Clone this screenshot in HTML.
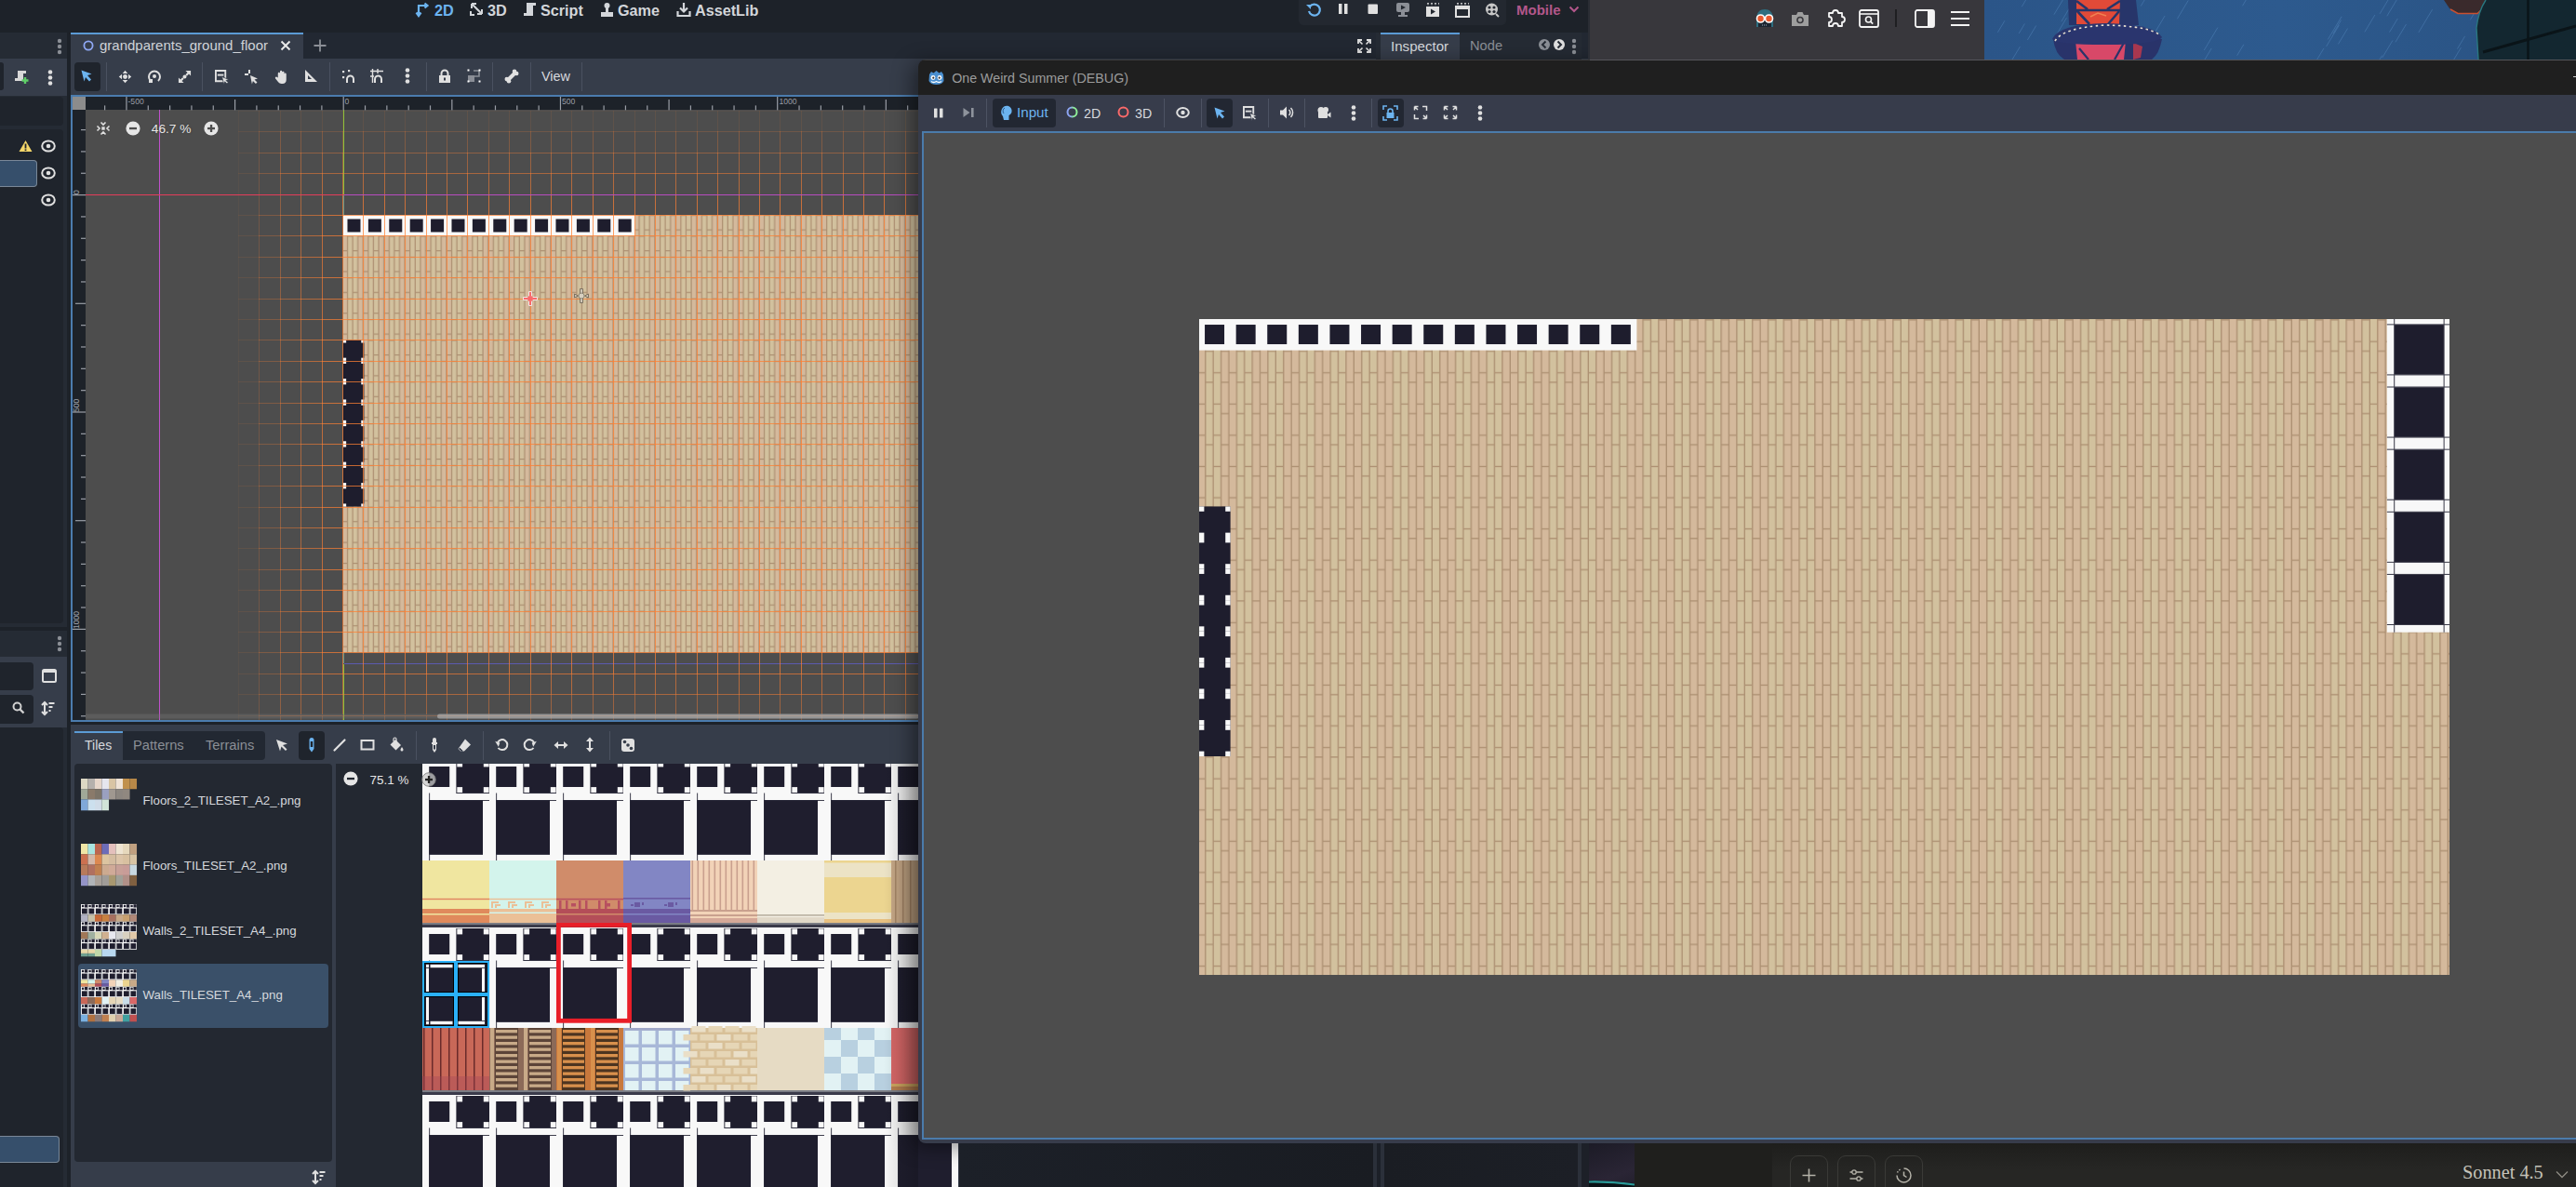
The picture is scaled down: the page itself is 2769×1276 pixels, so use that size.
<!DOCTYPE html>
<html><head><meta charset="utf-8">
<style>
*{margin:0;padding:0;box-sizing:border-box}
html,body{width:2769px;height:1276px;overflow:hidden;background:#1d2229;font-family:"Liberation Sans",sans-serif;color:#d6d9de;position:relative}
.a{position:absolute}
svg.a{display:block;overflow:visible}
</style></head><body>
<div class="a" style="left:0px;top:0px;width:1708px;height:35px;background:#1d2229;"></div>
<svg class="a" style="left:447px;top:2px;" width="16" height="18" viewBox="0 0 16 18"><path d="M3 3v11M0.5 11.5L3 15l2.5-3.5M3 4h9M9.5 1.5L12.5 4 9.5 6.5" stroke="#6cb4f0" stroke-width="2.2" fill="none"/></svg>
<div class="a" style="left:467px;top:2.59px;font-size:16.2px;line-height:1;color:#6cb4f0;font-weight:bold;white-space:nowrap;font-family:'Liberation Sans',sans-serif;">2D</div>
<svg class="a" style="left:505px;top:2px;" width="16" height="18" viewBox="0 0 16 18"><path d="M2 2l11 11M2 2v5M2 2h5M13 13v-5M13 13h-5M2 13l0 0" stroke="#d3d6da" stroke-width="2" fill="none"/><path d="M1 10v4h4" stroke="#d3d6da" stroke-width="2" fill="none"/></svg>
<div class="a" style="left:524px;top:2.59px;font-size:16.2px;line-height:1;color:#d3d6da;font-weight:bold;white-space:nowrap;font-family:'Liberation Sans',sans-serif;">3D</div>
<svg class="a" style="left:562px;top:2px;" width="15" height="18" viewBox="0 0 15 18"><path d="M4 1h10v3h-3v11H1v-3h3z" fill="#d3d6da"/></svg>
<div class="a" style="left:581px;top:2.59px;font-size:16.2px;line-height:1;color:#d3d6da;font-weight:bold;white-space:nowrap;font-family:'Liberation Sans',sans-serif;">Script</div>
<svg class="a" style="left:645px;top:2px;" width="15" height="18" viewBox="0 0 15 18"><circle cx="7.5" cy="4" r="3" fill="#d3d6da"/><rect x="6" y="6" width="3" height="6" fill="#d3d6da"/><rect x="1" y="11" width="13" height="5" fill="#d3d6da"/></svg>
<div class="a" style="left:664px;top:2.59px;font-size:16.2px;line-height:1;color:#d3d6da;font-weight:bold;white-space:nowrap;font-family:'Liberation Sans',sans-serif;">Game</div>
<svg class="a" style="left:727px;top:2px;" width="16" height="18" viewBox="0 0 16 18"><path d="M8 1v9M4 6.5L8 10.5 12 6.5M1.5 10v5h13v-5" stroke="#d3d6da" stroke-width="2.2" fill="none"/></svg>
<div class="a" style="left:747px;top:2.59px;font-size:16.2px;line-height:1;color:#d3d6da;font-weight:bold;white-space:nowrap;font-family:'Liberation Sans',sans-serif;">AssetLib</div>
<div class="a" style="left:1396px;top:0px;width:223px;height:27px;background:#232830;border-radius:0 0 5px 5px"></div>
<svg class="a" style="left:1404px;top:2px;" width="16" height="18" viewBox="0 0 16 18"><path d="M4 5A6 6 0 1 1 3 10" stroke="#6cb4f0" stroke-width="2.2" fill="none"/><path d="M0 3l5 0 0 5z" fill="#6cb4f0"/></svg>
<svg class="a" style="left:1437px;top:3px;" width="14" height="14" viewBox="0 0 14 14"><rect x="2" y="1" width="3.5" height="11" fill="#e0e0e0"/><rect x="8" y="1" width="3.5" height="11" fill="#e0e0e0"/></svg>
<svg class="a" style="left:1469px;top:3px;" width="14" height="14" viewBox="0 0 14 14"><rect x="1.5" y="1.5" width="10.5" height="10.5" fill="#e0e0e0" rx="1"/></svg>
<svg class="a" style="left:1500px;top:2px;" width="16" height="17" viewBox="0 0 16 17"><rect x="1" y="1" width="14" height="10" rx="2" fill="#8b8f96"/><rect x="6" y="11" width="4" height="3" fill="#8b8f96"/><rect x="3" y="14" width="10" height="2" fill="#8b8f96"/><path d="M6 3.5l5 2.5-5 2.5z" fill="#232830"/></svg>
<svg class="a" style="left:1532px;top:2px;" width="16" height="17" viewBox="0 0 16 17"><rect x="1" y="5" width="14" height="11" fill="#e0e0e0"/><path d="M2 1h2l-1 3zM6 1h2l-1 3zM10 1h2l-1 3zM14 1h1v3z" fill="#e0e0e0"/><path d="M6 7.5l5 3-5 3z" fill="#232830"/></svg>
<svg class="a" style="left:1564px;top:2px;" width="16" height="17" viewBox="0 0 16 17"><path d="M1 5h14v11H1z" stroke="#e0e0e0" stroke-width="2" fill="none"/><path d="M2 1h2l-1 3zM6 1h2l-1 3zM10 1h2l-1 3zM14 1h1v3z" fill="#e0e0e0"/><rect x="1" y="5" width="14" height="3" fill="#e0e0e0"/></svg>
<svg class="a" style="left:1596px;top:2px;" width="16" height="18" viewBox="0 0 16 18"><circle cx="7.5" cy="8" r="6.5" fill="#c8c8c8"/><circle cx="5" cy="6" r="1.6" fill="#232830"/><circle cx="10" cy="6" r="1.6" fill="#232830"/><circle cx="5" cy="10.5" r="1.6" fill="#232830"/><circle cx="10" cy="10.5" r="1.6" fill="#232830"/><path d="M12 13l3 3" stroke="#c8c8c8" stroke-width="2"/></svg>
<div class="a" style="left:1630px;top:3.1px;font-size:15px;line-height:1;color:#b3578b;font-weight:bold;white-space:nowrap;font-family:'Liberation Sans',sans-serif;">Mobile</div>
<svg class="a" style="left:1686px;top:5px;" width="12" height="10" viewBox="0 0 12 10"><path d="M1.5 2.5L6 7l4.5-4.5" stroke="#b3578b" stroke-width="2" fill="none"/></svg>
<div class="a" style="left:0px;top:35px;width:72px;height:639px;background:#252b34;"></div>
<div class="a" style="left:0px;top:63px;width:72px;height:40px;background:#363d4a;"></div>
<div class="a" style="left:0px;top:67px;width:4px;height:30px;background:#1f242c;border-radius:0 3px 3px 0"></div>
<svg class="a" style="left:60px;top:40px;" width="8" height="20" viewBox="0 0 8 20"><circle cx="4" cy="4" r="2.2" fill="#8b8f96"/><circle cx="4" cy="10" r="2.2" fill="#8b8f96"/><circle cx="4" cy="16" r="2.2" fill="#8b8f96"/></svg>
<svg class="a" style="left:14px;top:75px;" width="18" height="16" viewBox="0 0 18 16"><path d="M5 1h9v3h-3v8H2v-3h3z" fill="#d8d8d8"/><path d="M13 8v7M9.5 11.5h7" stroke="#5fd068" stroke-width="2.4"/></svg>
<svg class="a" style="left:50px;top:74px;" width="8" height="19" viewBox="0 0 8 19"><circle cx="4" cy="3.5" r="2.3" fill="#e0e0e0"/><circle cx="4" cy="9.5" r="2.3" fill="#e0e0e0"/><circle cx="4" cy="15.5" r="2.3" fill="#e0e0e0"/></svg>
<div class="a" style="left:0px;top:104px;width:68px;height:31px;background:#1f242c;border-radius:0 4px 4px 0"></div>
<div class="a" style="left:0px;top:139px;width:68px;height:531px;background:#1f242c;border-radius:0 4px 4px 0"></div>
<svg class="a" style="left:20px;top:150px;" width="15" height="14" viewBox="0 0 15 14"><path d="M7.5 1L14.5 13H0.5z" fill="#f5d76a"/><rect x="6.6" y="4.5" width="1.8" height="5" fill="#1f242c"/><rect x="6.6" y="10.4" width="1.8" height="1.7" fill="#1f242c"/></svg>
<div class="a" style="left:0px;top:172px;width:40px;height:29px;background:#364f6b;border:1px solid #7a8898;border-left:none;border-radius:0 4px 4px 0"></div>
<svg class="a" style="left:44px;top:150px;" width="16" height="14" viewBox="0 0 16 14"><ellipse cx="8" cy="7" rx="6.8" ry="5.6" stroke="#e0e0e0" stroke-width="2" fill="none"/><circle cx="8" cy="7" r="2.3" fill="#e0e0e0"/></svg>
<svg class="a" style="left:44px;top:179px;" width="16" height="14" viewBox="0 0 16 14"><ellipse cx="8" cy="7" rx="6.8" ry="5.6" stroke="#e0e0e0" stroke-width="2" fill="none"/><circle cx="8" cy="7" r="2.3" fill="#e0e0e0"/></svg>
<svg class="a" style="left:44px;top:208px;" width="16" height="14" viewBox="0 0 16 14"><ellipse cx="8" cy="7" rx="6.8" ry="5.6" stroke="#e0e0e0" stroke-width="2" fill="none"/><circle cx="8" cy="7" r="2.3" fill="#e0e0e0"/></svg>
<div class="a" style="left:0px;top:678px;width:72px;height:598px;background:#252b34;"></div>
<svg class="a" style="left:60px;top:682px;" width="8" height="20" viewBox="0 0 8 20"><circle cx="4" cy="4" r="2.2" fill="#8b8f96"/><circle cx="4" cy="10" r="2.2" fill="#8b8f96"/><circle cx="4" cy="16" r="2.2" fill="#8b8f96"/></svg>
<div class="a" style="left:0px;top:706px;width:72px;height:76px;background:#363d4a;"></div>
<div class="a" style="left:0px;top:712px;width:36px;height:30px;background:#1f242c;border-radius:0 4px 4px 0"></div>
<div class="a" style="left:0px;top:747px;width:36px;height:31px;background:#1f242c;border-radius:0 4px 4px 0"></div>
<svg class="a" style="left:45px;top:719px;" width="16" height="15" viewBox="0 0 16 15"><rect x="1" y="1" width="14" height="13" rx="1.5" stroke="#e0e0e0" stroke-width="2" fill="none"/><rect x="1" y="1" width="14" height="3" fill="#e0e0e0"/></svg>
<svg class="a" style="left:13px;top:754px;" width="14" height="15" viewBox="0 0 14 15"><circle cx="5.5" cy="5.5" r="4" stroke="#d0d0d0" stroke-width="2" fill="none"/><path d="M8.5 8.5l4 4" stroke="#d0d0d0" stroke-width="2.4"/></svg>
<svg class="a" style="left:44px;top:754px;" width="16" height="15" viewBox="0 0 16 15"><path d="M4 1v13M1 4l3-3 3 3M1 11l3 3 3-3" stroke="#e0e0e0" stroke-width="2" fill="none"/><path d="M8.5 2h6M8.5 6h4M8.5 10h2" stroke="#e0e0e0" stroke-width="2"/></svg>
<div class="a" style="left:0px;top:782px;width:68px;height:494px;background:#1f242c;border-radius:0 4px 0 0"></div>
<div class="a" style="left:0px;top:1221px;width:64px;height:29px;background:#364f6b;border:1px solid #7a8898;border-left:none;border-radius:0 4px 4px 0"></div>
<div class="a" style="left:76px;top:35px;width:1632px;height:28px;background:#222832;"></div>
<div class="a" style="left:76px;top:35px;width:250px;height:28px;background:#363d4a;"></div>
<div class="a" style="left:76px;top:35px;width:250px;height:2px;background:#5b9bd5;"></div>
<svg class="a" style="left:89px;top:43px;" width="12" height="12" viewBox="0 0 12 12"><circle cx="6" cy="6" r="4.6" stroke="#8fa8f5" stroke-width="1.8" fill="none"/></svg>
<div class="a" style="left:107px;top:41.3px;font-size:15px;line-height:1;color:#d0d3d8;font-weight:normal;white-space:nowrap;font-family:'Liberation Sans',sans-serif;">grandparents_ground_floor</div>
<svg class="a" style="left:301px;top:43px;" width="12" height="12" viewBox="0 0 12 12"><path d="M1.5 1.5l9 9M10.5 1.5l-9 9" stroke="#e8e8e8" stroke-width="2"/></svg>
<svg class="a" style="left:337px;top:42px;" width="14" height="14" viewBox="0 0 14 14"><path d="M7 0.5v13M0.5 7h13" stroke="#8b8f96" stroke-width="1.8"/></svg>
<div class="a" style="left:76px;top:63px;width:1632px;height:39px;background:#363d4a;"></div>
<div class="a" style="left:80px;top:67px;width:28px;height:31px;background:#1f242c;border-radius:4px"></div>
<svg class="a" style="left:86px;top:74px;" width="14" height="16" viewBox="0 0 14 16"><path d="M1.5 1.5l11 4-4.5 1.5 4 4.5-2 2-4-4.5-1.5 4.5z" fill="#6cb4f0"/></svg>
<div class="a" style="left:113.6px;top:67px;width:1px;height:31px;background:#4a5160;"></div>
<div class="a" style="left:217px;top:67px;width:1px;height:31px;background:#4a5160;"></div>
<div class="a" style="left:353.5px;top:67px;width:1px;height:31px;background:#4a5160;"></div>
<div class="a" style="left:457.5px;top:67px;width:1px;height:31px;background:#4a5160;"></div>
<div class="a" style="left:529.3px;top:67px;width:1px;height:31px;background:#4a5160;"></div>
<div class="a" style="left:569.5px;top:67px;width:1px;height:31px;background:#4a5160;"></div>
<div class="a" style="left:624.5px;top:67px;width:1px;height:31px;background:#4a5160;"></div>
<svg class="a" style="left:126.5px;top:74.5px;" width="15" height="15" viewBox="0 0 15 15"><g transform="scale(0.9375)"><circle cx="8" cy="8" r="2.6" fill="#e0e0e0"/><path d="M8 0.8L11 4.3H5zM8 15.2L11 11.7H5zM0.8 8L4.3 5v6zM15.2 8L11.7 5v6z" fill="#e0e0e0"/></g></svg>
<svg class="a" style="left:158px;top:74px;" width="16" height="16" viewBox="0 0 16 16"><path d="M4 13A6 6 0 1 1 12 13" stroke="#e0e0e0" stroke-width="2" fill="none"/><circle cx="8" cy="8" r="2" fill="#e0e0e0"/><path d="M2 11h4v4H2z" fill="#e0e0e0"/></svg>
<svg class="a" style="left:190.5px;top:74.5px;" width="15" height="15" viewBox="0 0 15 15"><g transform="scale(0.9375)"><circle cx="8" cy="8" r="2.1" fill="#e0e0e0"/><path d="M9 1h6v6l-2.2-2.2-2.3 2.3-1.6-1.6 2.3-2.3zM7 15H1V9l2.2 2.2 2.3-2.3 1.6 1.6-2.3 2.3z" fill="#e0e0e0"/></g></svg>
<svg class="a" style="left:230.5px;top:75px;" width="16" height="16" viewBox="0 0 16 16"><g transform="scale(0.9375)"><path d="M1 1h11v12H1z" stroke="#e0e0e0" stroke-width="2" fill="none"/><path d="M3 6h7" stroke="#e0e0e0" stroke-width="2"/><path d="M8 8l8 3.2-3.2 1 2.4 2.4-1.4 1.4-2.4-2.4-1 3.2z" fill="#e0e0e0" stroke="#363d4a" stroke-width="0.8"/></g></svg>
<svg class="a" style="left:262px;top:74px;" width="17" height="17" viewBox="0 0 17 17"><path d="M6 1v4M1 6h4" stroke="#e0e0e0" stroke-width="2"/><path d="M7 7l8 3.5-3.5 1 3 3-1.6 1.6-3-3-1 3.5z" fill="#e0e0e0"/></svg>
<svg class="a" style="left:294.5px;top:74.5px;" width="15" height="15" viewBox="0 0 15 15"><g transform="scale(0.9375)"><path d="M4 9V4.2a1.2 1.2 0 0 1 2.4 0V8V2a1.2 1.2 0 0 1 2.4 0V8V3a1.2 1.2 0 0 1 2.4 0V8V5a1.2 1.2 0 0 1 2.4 0v6.5A4.5 4.5 0 0 1 9.2 16H8a4.5 4.5 0 0 1-3.6-1.8L1.2 10a1.2 1.2 0 0 1 1.9-1.5z" fill="#e0e0e0"/></g></svg>
<svg class="a" style="left:327px;top:74px;" width="15" height="15" viewBox="0 0 15 15"><path d="M1 1v13h13z" fill="#e0e0e0"/><path d="M4 7v4h4z" fill="#363d4a"/></svg>
<svg class="a" style="left:367px;top:74px;" width="16" height="16" viewBox="0 0 16 16"><path d="M6 15v-4a3.5 3.5 0 0 1 7 0v4" stroke="#e0e0e0" stroke-width="2" fill="none"/><rect x="1" y="2" width="2.2" height="2.2" fill="#e0e0e0"/><rect x="7" y="1" width="2.2" height="2.2" fill="#e0e0e0"/><rect x="1" y="8" width="2.2" height="2.2" fill="#e0e0e0"/></svg>
<svg class="a" style="left:397px;top:73px;" width="16" height="17" viewBox="0 0 16 17"><path d="M3.5 1v15M1 3.5h14M1 9h4M9 1v5" stroke="#e0e0e0" stroke-width="1.4"/><path d="M6 16v-4a3.5 3.5 0 0 1 7 0v4" stroke="#e0e0e0" stroke-width="2" fill="none"/></svg>
<svg class="a" style="left:434px;top:72px;" width="8" height="19" viewBox="0 0 8 19"><circle cx="4" cy="3.5" r="2.3" fill="#e0e0e0"/><circle cx="4" cy="9.5" r="2.3" fill="#e0e0e0"/><circle cx="4" cy="15.5" r="2.3" fill="#e0e0e0"/></svg>
<svg class="a" style="left:471px;top:74px;" width="14" height="16" viewBox="0 0 14 16"><path d="M3.5 7V5a3.5 3.5 0 0 1 7 0v2" stroke="#e0e0e0" stroke-width="2" fill="none"/><rect x="1" y="7" width="12" height="8" fill="#e0e0e0"/><rect x="6" y="9.5" width="2" height="3" fill="#363d4a"/></svg>
<svg class="a" style="left:502px;top:74px;" width="15" height="15" viewBox="0 0 15 15"><rect x="1" y="7" width="7" height="7" fill="#8a8e96"/><path d="M7 2h6v6H8" stroke="#8a8e96" stroke-width="1.6" fill="none"/><rect x="0.5" y="0.5" width="2" height="2" fill="#fff"/><rect x="12.5" y="0.5" width="2" height="2" fill="#fff"/><rect x="0.5" y="12.5" width="2" height="2" fill="#fff"/><rect x="12.5" y="12.5" width="2" height="2" fill="#fff"/></svg>
<svg class="a" style="left:542px;top:74px;" width="16" height="16" viewBox="0 0 16 16"><path d="M4 12L12 4" stroke="#e0e0e0" stroke-width="4"/><circle cx="11" cy="2.8" r="2.3" fill="#e0e0e0"/><circle cx="13.2" cy="5" r="2.3" fill="#e0e0e0"/><circle cx="2.8" cy="11" r="2.3" fill="#e0e0e0"/><circle cx="5" cy="13.2" r="2.3" fill="#e0e0e0"/></svg>
<div class="a" style="left:582px;top:74.81px;font-size:14.4px;line-height:1;color:#d6d9de;font-weight:normal;white-space:nowrap;font-family:'Liberation Sans',sans-serif;">View</div>
<div class="a" style="left:1459px;top:35px;width:20px;height:28px;background:#222832;"></div>
<svg class="a" style="left:1459px;top:42px;" width="15" height="15" viewBox="0 0 15 15"><path d="M1 5V1h4M10 1h4v4M14 10v4h-4M5 14H1v-4" stroke="#e0e0e0" stroke-width="1.8" fill="none"/><path d="M2 2l3.5 3.5M13 2l-3.5 3.5M13 13l-3.5-3.5M2 13l3.5-3.5" stroke="#e0e0e0" stroke-width="1.6"/></svg>
<div class="a" style="left:1479px;top:35px;width:221px;height:29px;background:#252b34;"></div>
<div class="a" style="left:1484px;top:35px;width:85px;height:29px;background:#363d4a;"></div>
<div class="a" style="left:1484px;top:35px;width:85px;height:2px;background:#5b9bd5;"></div>
<div class="a" style="left:1495px;top:41.52px;font-size:15.1px;line-height:1;color:#d6d9de;font-weight:normal;white-space:nowrap;font-family:'Liberation Sans',sans-serif;">Inspector</div>
<div class="a" style="left:1580px;top:41.86px;font-size:14.7px;line-height:1;color:#8b8f96;font-weight:normal;white-space:nowrap;font-family:'Liberation Sans',sans-serif;">Node</div>
<svg class="a" style="left:1653px;top:41px;" width="34" height="14" viewBox="0 0 34 14"><circle cx="7" cy="7" r="6" fill="#8b8f96"/><path d="M8.5 3.5L5 7l3.5 3.5" stroke="#252b34" stroke-width="2" fill="none"/><circle cx="23" cy="7" r="6" fill="#e0e0e0"/><path d="M21.5 3.5L25 7l-3.5 3.5" stroke="#252b34" stroke-width="2" fill="none"/></svg>
<svg class="a" style="left:1688px;top:40px;" width="8" height="20" viewBox="0 0 8 20"><circle cx="4" cy="4" r="2.2" fill="#8b8f96"/><circle cx="4" cy="10" r="2.2" fill="#8b8f96"/><circle cx="4" cy="16" r="2.2" fill="#8b8f96"/></svg>
<div class="a" style="left:76px;top:101.6px;width:912px;height:674.4px;background:#4b7cae;"></div>
<div class="a" style="left:78px;top:103.6px;width:910px;height:670.4px;background:#1d2229;"></div>
<div class="a" style="left:92px;top:118px;width:896px;height:656px;background:#4d4d4d;"></div>
<div class="a" style="left:78px;top:103.6px;width:14px;height:14.4px;background:#8c8c8c;"></div>
<svg class="a" overflow="hidden" style="left:92px;top:118px;overflow:hidden" width="896" height="656" viewBox="0 0 896 656"><rect x="79" y="0" width="1" height="656" fill="#c050cc"/><rect x="277" y="0" width="1" height="91" fill="#8fc23a"/><rect x="277" y="91" width="1" height="504" fill="#6a9a8c"/><rect x="277" y="596" width="1" height="60.00" fill="#8fc23a"/><rect x="278" y="595" width="618.00" height="1" fill="#5c5aae"/></svg>
<svg class="a" style="left:369px;top:231.2px" width="896.00" height="470.40" viewBox="0 0 40 21" preserveAspectRatio="none"><defs><pattern id="pe" x="0" y="0" width="1" height="1" patternUnits="userSpaceOnUse"><rect width="1" height="1" fill="#d4bd9c"/><rect x="0.950" y="0" width="0.250" height="1" fill="#d4b99c"/><rect x="0.950" y="0.693" width="0.250" height="0.055" fill="#ad9072"/><rect x="-0.050" y="0" width="0.250" height="1" fill="#d4b99c"/><rect x="-0.050" y="0.693" width="0.250" height="0.055" fill="#ad9072"/><rect x="0.200" y="0" width="0.250" height="1" fill="#d2c19e"/><rect x="0.200" y="-0.002" width="0.250" height="0.055" fill="#ad9072"/><rect x="0.450" y="0" width="0.250" height="1" fill="#d2c19e"/><rect x="0.450" y="0.693" width="0.250" height="0.055" fill="#ad9072"/><rect x="0.700" y="0" width="0.250" height="1" fill="#d4b99c"/><rect x="0.700" y="-0.002" width="0.250" height="0.055" fill="#ad9072"/><rect x="0.173" y="0" width="0.055" height="1" fill="#ad9072"/><rect x="0.422" y="0" width="0.055" height="1" fill="#ad9072"/><rect x="0.672" y="0" width="0.055" height="1" fill="#ad9072"/><rect x="0.922" y="0" width="0.055" height="1" fill="#ad9072"/></pattern></defs><rect x="0" y="0" width="40" height="21" fill="url(#pe)"/><rect x="0" y="0" width="14" height="1" fill="#f8f8f8"/><rect x="0.200" y="0.200" width="0.625" height="0.625" fill="#1e1d2d"/><rect x="1.200" y="0.200" width="0.625" height="0.625" fill="#1e1d2d"/><rect x="2.200" y="0.200" width="0.625" height="0.625" fill="#1e1d2d"/><rect x="3.200" y="0.200" width="0.625" height="0.625" fill="#1e1d2d"/><rect x="4.200" y="0.200" width="0.625" height="0.625" fill="#1e1d2d"/><rect x="5.200" y="0.200" width="0.625" height="0.625" fill="#1e1d2d"/><rect x="6.200" y="0.200" width="0.625" height="0.625" fill="#1e1d2d"/><rect x="7.200" y="0.200" width="0.625" height="0.625" fill="#1e1d2d"/><rect x="8.200" y="0.200" width="0.625" height="0.625" fill="#1e1d2d"/><rect x="9.200" y="0.200" width="0.625" height="0.625" fill="#1e1d2d"/><rect x="10.200" y="0.200" width="0.625" height="0.625" fill="#1e1d2d"/><rect x="11.200" y="0.200" width="0.625" height="0.625" fill="#1e1d2d"/><rect x="12.200" y="0.200" width="0.625" height="0.625" fill="#1e1d2d"/><rect x="13.200" y="0.200" width="0.625" height="0.625" fill="#1e1d2d"/><rect x="0" y="6" width="1" height="8" fill="#1e1d2d"/><rect x="0.00" y="6.00" width="0.14" height="0.14" fill="#f8f8f8"/><rect x="0.86" y="6.00" width="0.14" height="0.14" fill="#f8f8f8"/><rect x="0.00" y="6.86" width="0.14" height="0.14" fill="#f8f8f8"/><rect x="0.86" y="6.86" width="0.14" height="0.14" fill="#f8f8f8"/><rect x="0.00" y="7.00" width="0.14" height="0.14" fill="#f8f8f8"/><rect x="0.86" y="7.00" width="0.14" height="0.14" fill="#f8f8f8"/><rect x="0.00" y="7.86" width="0.14" height="0.14" fill="#f8f8f8"/><rect x="0.86" y="7.86" width="0.14" height="0.14" fill="#f8f8f8"/><rect x="0.00" y="8.00" width="0.14" height="0.14" fill="#f8f8f8"/><rect x="0.86" y="8.00" width="0.14" height="0.14" fill="#f8f8f8"/><rect x="0.00" y="8.86" width="0.14" height="0.14" fill="#f8f8f8"/><rect x="0.86" y="8.86" width="0.14" height="0.14" fill="#f8f8f8"/><rect x="0.00" y="9.00" width="0.14" height="0.14" fill="#f8f8f8"/><rect x="0.86" y="9.00" width="0.14" height="0.14" fill="#f8f8f8"/><rect x="0.00" y="9.86" width="0.14" height="0.14" fill="#f8f8f8"/><rect x="0.86" y="9.86" width="0.14" height="0.14" fill="#f8f8f8"/><rect x="0.00" y="10.00" width="0.14" height="0.14" fill="#f8f8f8"/><rect x="0.86" y="10.00" width="0.14" height="0.14" fill="#f8f8f8"/><rect x="0.00" y="10.86" width="0.14" height="0.14" fill="#f8f8f8"/><rect x="0.86" y="10.86" width="0.14" height="0.14" fill="#f8f8f8"/><rect x="0.00" y="11.00" width="0.14" height="0.14" fill="#f8f8f8"/><rect x="0.86" y="11.00" width="0.14" height="0.14" fill="#f8f8f8"/><rect x="0.00" y="11.86" width="0.14" height="0.14" fill="#f8f8f8"/><rect x="0.86" y="11.86" width="0.14" height="0.14" fill="#f8f8f8"/><rect x="0.00" y="12.00" width="0.14" height="0.14" fill="#f8f8f8"/><rect x="0.86" y="12.00" width="0.14" height="0.14" fill="#f8f8f8"/><rect x="0.00" y="12.86" width="0.14" height="0.14" fill="#f8f8f8"/><rect x="0.86" y="12.86" width="0.14" height="0.14" fill="#f8f8f8"/><rect x="0.00" y="13.00" width="0.14" height="0.14" fill="#f8f8f8"/><rect x="0.86" y="13.00" width="0.14" height="0.14" fill="#f8f8f8"/><rect x="0.00" y="13.86" width="0.14" height="0.14" fill="#f8f8f8"/><rect x="0.86" y="13.86" width="0.14" height="0.14" fill="#f8f8f8"/><rect x="38" y="0" width="2" height="10.03" fill="#f8f8f8"/><rect x="38.24" y="0.18" width="1.58" height="1.6" fill="#1e1d2d"/><rect x="38" y="0.16" width="2" height="0.03" fill="#3a3a48"/><rect x="38" y="1.77" width="2" height="0.03" fill="#3a3a48"/><rect x="38.24" y="2.18" width="1.58" height="1.6" fill="#1e1d2d"/><rect x="38" y="2.16" width="2" height="0.03" fill="#3a3a48"/><rect x="38" y="3.77" width="2" height="0.03" fill="#3a3a48"/><rect x="38.24" y="4.18" width="1.58" height="1.6" fill="#1e1d2d"/><rect x="38" y="4.16" width="2" height="0.03" fill="#3a3a48"/><rect x="38" y="5.77" width="2" height="0.03" fill="#3a3a48"/><rect x="38.24" y="6.18" width="1.58" height="1.6" fill="#1e1d2d"/><rect x="38" y="6.16" width="2" height="0.03" fill="#3a3a48"/><rect x="38" y="7.77" width="2" height="0.03" fill="#3a3a48"/><rect x="38.24" y="8.18" width="1.58" height="1.6" fill="#1e1d2d"/><rect x="38" y="8.16" width="2" height="0.03" fill="#3a3a48"/><rect x="38" y="9.77" width="2" height="0.03" fill="#3a3a48"/><rect x="38.22" y="0" width="0.03" height="10.03" fill="#3a3a48"/><rect x="39.81" y="0" width="0.03" height="10.03" fill="#3a3a48"/></svg>
<svg class="a" overflow="hidden" style="left:92px;top:118px;overflow:hidden" width="896" height="656" viewBox="0 0 896 656"><rect x="164" y="1" width="1" height="655" fill="rgba(255,128,51,0.050)"/><rect x="186" y="1" width="1" height="22" fill="rgba(255,128,51,0.098)"/><rect x="186" y="23" width="1" height="633" fill="rgba(255,128,51,0.193)"/><rect x="209" y="1" width="1" height="22" fill="rgba(255,128,51,0.098)"/><rect x="209" y="23" width="1" height="23" fill="rgba(255,128,51,0.278)"/><rect x="209" y="46" width="1" height="604" fill="rgba(255,128,51,0.363)"/><rect x="209" y="651" width="1" height="5" fill="rgba(255,128,51,0.278)"/><rect x="231" y="1" width="1" height="22" fill="rgba(255,128,51,0.098)"/><rect x="231" y="23" width="1" height="23" fill="rgba(255,128,51,0.278)"/><rect x="231" y="46" width="1" height="22" fill="rgba(255,128,51,0.438)"/><rect x="231" y="68" width="1" height="560" fill="rgba(255,128,51,0.512)"/><rect x="231" y="628" width="1" height="22" fill="rgba(255,128,51,0.438)"/><rect x="231" y="651" width="1" height="5" fill="rgba(255,128,51,0.278)"/><rect x="254" y="1" width="1" height="22" fill="rgba(255,128,51,0.098)"/><rect x="254" y="23" width="1" height="23" fill="rgba(255,128,51,0.278)"/><rect x="254" y="46" width="1" height="22" fill="rgba(255,128,51,0.438)"/><rect x="254" y="68" width="1" height="23" fill="rgba(255,128,51,0.577)"/><rect x="254" y="91" width="1" height="515" fill="rgba(255,128,51,0.642)"/><rect x="254" y="606" width="1" height="22" fill="rgba(255,128,51,0.577)"/><rect x="254" y="628" width="1" height="22" fill="rgba(255,128,51,0.438)"/><rect x="254" y="651" width="1" height="5" fill="rgba(255,128,51,0.278)"/><rect x="276" y="1" width="1" height="22" fill="rgba(255,128,51,0.098)"/><rect x="276" y="23" width="1" height="23" fill="rgba(255,128,51,0.278)"/><rect x="276" y="46" width="1" height="22" fill="rgba(255,128,51,0.438)"/><rect x="276" y="68" width="1" height="23" fill="rgba(255,128,51,0.577)"/><rect x="276" y="91" width="1" height="22" fill="rgba(255,128,51,0.698)"/><rect x="276" y="113" width="1" height="470" fill="rgba(255,128,51,0.725)"/><rect x="276" y="583" width="1" height="23" fill="rgba(255,128,51,0.698)"/><rect x="276" y="606" width="1" height="22" fill="rgba(255,128,51,0.577)"/><rect x="276" y="628" width="1" height="22" fill="rgba(255,128,51,0.438)"/><rect x="276" y="651" width="1" height="5" fill="rgba(255,128,51,0.278)"/><rect x="298" y="1" width="1" height="22" fill="rgba(255,128,51,0.098)"/><rect x="298" y="23" width="1" height="23" fill="rgba(255,128,51,0.278)"/><rect x="298" y="46" width="1" height="22" fill="rgba(255,128,51,0.438)"/><rect x="298" y="68" width="1" height="23" fill="rgba(255,128,51,0.577)"/><rect x="298" y="91" width="1" height="22" fill="rgba(255,128,51,0.698)"/><rect x="298" y="113" width="1" height="470" fill="rgba(255,128,51,0.750)"/><rect x="298" y="583" width="1" height="23" fill="rgba(255,128,51,0.698)"/><rect x="298" y="606" width="1" height="22" fill="rgba(255,128,51,0.577)"/><rect x="298" y="628" width="1" height="22" fill="rgba(255,128,51,0.438)"/><rect x="298" y="651" width="1" height="5" fill="rgba(255,128,51,0.278)"/><rect x="321" y="1" width="1" height="22" fill="rgba(255,128,51,0.098)"/><rect x="321" y="23" width="1" height="23" fill="rgba(255,128,51,0.278)"/><rect x="321" y="46" width="1" height="22" fill="rgba(255,128,51,0.438)"/><rect x="321" y="68" width="1" height="23" fill="rgba(255,128,51,0.577)"/><rect x="321" y="91" width="1" height="22" fill="rgba(255,128,51,0.698)"/><rect x="321" y="113" width="1" height="470" fill="rgba(255,128,51,0.750)"/><rect x="321" y="583" width="1" height="23" fill="rgba(255,128,51,0.698)"/><rect x="321" y="606" width="1" height="22" fill="rgba(255,128,51,0.577)"/><rect x="321" y="628" width="1" height="22" fill="rgba(255,128,51,0.438)"/><rect x="321" y="651" width="1" height="5" fill="rgba(255,128,51,0.278)"/><rect x="343" y="1" width="1" height="22" fill="rgba(255,128,51,0.098)"/><rect x="343" y="23" width="1" height="23" fill="rgba(255,128,51,0.278)"/><rect x="343" y="46" width="1" height="22" fill="rgba(255,128,51,0.438)"/><rect x="343" y="68" width="1" height="23" fill="rgba(255,128,51,0.577)"/><rect x="343" y="91" width="1" height="22" fill="rgba(255,128,51,0.698)"/><rect x="343" y="113" width="1" height="470" fill="rgba(255,128,51,0.750)"/><rect x="343" y="583" width="1" height="23" fill="rgba(255,128,51,0.698)"/><rect x="343" y="606" width="1" height="22" fill="rgba(255,128,51,0.577)"/><rect x="343" y="628" width="1" height="22" fill="rgba(255,128,51,0.438)"/><rect x="343" y="651" width="1" height="5" fill="rgba(255,128,51,0.278)"/><rect x="366" y="1" width="1" height="22" fill="rgba(255,128,51,0.098)"/><rect x="366" y="23" width="1" height="23" fill="rgba(255,128,51,0.278)"/><rect x="366" y="46" width="1" height="22" fill="rgba(255,128,51,0.438)"/><rect x="366" y="68" width="1" height="23" fill="rgba(255,128,51,0.577)"/><rect x="366" y="91" width="1" height="22" fill="rgba(255,128,51,0.698)"/><rect x="366" y="113" width="1" height="470" fill="rgba(255,128,51,0.750)"/><rect x="366" y="583" width="1" height="23" fill="rgba(255,128,51,0.698)"/><rect x="366" y="606" width="1" height="22" fill="rgba(255,128,51,0.577)"/><rect x="366" y="628" width="1" height="22" fill="rgba(255,128,51,0.438)"/><rect x="366" y="651" width="1" height="5" fill="rgba(255,128,51,0.278)"/><rect x="388" y="1" width="1" height="22" fill="rgba(255,128,51,0.098)"/><rect x="388" y="23" width="1" height="23" fill="rgba(255,128,51,0.278)"/><rect x="388" y="46" width="1" height="22" fill="rgba(255,128,51,0.438)"/><rect x="388" y="68" width="1" height="23" fill="rgba(255,128,51,0.577)"/><rect x="388" y="91" width="1" height="22" fill="rgba(255,128,51,0.698)"/><rect x="388" y="113" width="1" height="470" fill="rgba(255,128,51,0.750)"/><rect x="388" y="583" width="1" height="23" fill="rgba(255,128,51,0.698)"/><rect x="388" y="606" width="1" height="22" fill="rgba(255,128,51,0.577)"/><rect x="388" y="628" width="1" height="22" fill="rgba(255,128,51,0.438)"/><rect x="388" y="651" width="1" height="5" fill="rgba(255,128,51,0.278)"/><rect x="410" y="1" width="1" height="22" fill="rgba(255,128,51,0.098)"/><rect x="410" y="23" width="1" height="23" fill="rgba(255,128,51,0.278)"/><rect x="410" y="46" width="1" height="22" fill="rgba(255,128,51,0.438)"/><rect x="410" y="68" width="1" height="23" fill="rgba(255,128,51,0.577)"/><rect x="410" y="91" width="1" height="22" fill="rgba(255,128,51,0.698)"/><rect x="410" y="113" width="1" height="470" fill="rgba(255,128,51,0.750)"/><rect x="410" y="583" width="1" height="23" fill="rgba(255,128,51,0.698)"/><rect x="410" y="606" width="1" height="22" fill="rgba(255,128,51,0.577)"/><rect x="410" y="628" width="1" height="22" fill="rgba(255,128,51,0.438)"/><rect x="410" y="651" width="1" height="5" fill="rgba(255,128,51,0.278)"/><rect x="433" y="1" width="1" height="22" fill="rgba(255,128,51,0.098)"/><rect x="433" y="23" width="1" height="23" fill="rgba(255,128,51,0.278)"/><rect x="433" y="46" width="1" height="22" fill="rgba(255,128,51,0.438)"/><rect x="433" y="68" width="1" height="23" fill="rgba(255,128,51,0.577)"/><rect x="433" y="91" width="1" height="22" fill="rgba(255,128,51,0.698)"/><rect x="433" y="113" width="1" height="470" fill="rgba(255,128,51,0.750)"/><rect x="433" y="583" width="1" height="23" fill="rgba(255,128,51,0.698)"/><rect x="433" y="606" width="1" height="22" fill="rgba(255,128,51,0.577)"/><rect x="433" y="628" width="1" height="22" fill="rgba(255,128,51,0.438)"/><rect x="433" y="651" width="1" height="5" fill="rgba(255,128,51,0.278)"/><rect x="455" y="1" width="1" height="22" fill="rgba(255,128,51,0.098)"/><rect x="455" y="23" width="1" height="23" fill="rgba(255,128,51,0.278)"/><rect x="455" y="46" width="1" height="22" fill="rgba(255,128,51,0.438)"/><rect x="455" y="68" width="1" height="23" fill="rgba(255,128,51,0.577)"/><rect x="455" y="91" width="1" height="22" fill="rgba(255,128,51,0.698)"/><rect x="455" y="113" width="1" height="470" fill="rgba(255,128,51,0.750)"/><rect x="455" y="583" width="1" height="23" fill="rgba(255,128,51,0.698)"/><rect x="455" y="606" width="1" height="22" fill="rgba(255,128,51,0.577)"/><rect x="455" y="628" width="1" height="22" fill="rgba(255,128,51,0.438)"/><rect x="455" y="651" width="1" height="5" fill="rgba(255,128,51,0.278)"/><rect x="478" y="1" width="1" height="22" fill="rgba(255,128,51,0.098)"/><rect x="478" y="23" width="1" height="23" fill="rgba(255,128,51,0.278)"/><rect x="478" y="46" width="1" height="22" fill="rgba(255,128,51,0.438)"/><rect x="478" y="68" width="1" height="23" fill="rgba(255,128,51,0.577)"/><rect x="478" y="91" width="1" height="22" fill="rgba(255,128,51,0.698)"/><rect x="478" y="113" width="1" height="470" fill="rgba(255,128,51,0.750)"/><rect x="478" y="583" width="1" height="23" fill="rgba(255,128,51,0.698)"/><rect x="478" y="606" width="1" height="22" fill="rgba(255,128,51,0.577)"/><rect x="478" y="628" width="1" height="22" fill="rgba(255,128,51,0.438)"/><rect x="478" y="651" width="1" height="5" fill="rgba(255,128,51,0.278)"/><rect x="500" y="1" width="1" height="22" fill="rgba(255,128,51,0.098)"/><rect x="500" y="23" width="1" height="23" fill="rgba(255,128,51,0.278)"/><rect x="500" y="46" width="1" height="22" fill="rgba(255,128,51,0.438)"/><rect x="500" y="68" width="1" height="23" fill="rgba(255,128,51,0.577)"/><rect x="500" y="91" width="1" height="22" fill="rgba(255,128,51,0.698)"/><rect x="500" y="113" width="1" height="470" fill="rgba(255,128,51,0.750)"/><rect x="500" y="583" width="1" height="23" fill="rgba(255,128,51,0.698)"/><rect x="500" y="606" width="1" height="22" fill="rgba(255,128,51,0.577)"/><rect x="500" y="628" width="1" height="22" fill="rgba(255,128,51,0.438)"/><rect x="500" y="651" width="1" height="5" fill="rgba(255,128,51,0.278)"/><rect x="522" y="1" width="1" height="22" fill="rgba(255,128,51,0.098)"/><rect x="522" y="23" width="1" height="23" fill="rgba(255,128,51,0.278)"/><rect x="522" y="46" width="1" height="22" fill="rgba(255,128,51,0.438)"/><rect x="522" y="68" width="1" height="23" fill="rgba(255,128,51,0.577)"/><rect x="522" y="91" width="1" height="22" fill="rgba(255,128,51,0.698)"/><rect x="522" y="113" width="1" height="470" fill="rgba(255,128,51,0.750)"/><rect x="522" y="583" width="1" height="23" fill="rgba(255,128,51,0.698)"/><rect x="522" y="606" width="1" height="22" fill="rgba(255,128,51,0.577)"/><rect x="522" y="628" width="1" height="22" fill="rgba(255,128,51,0.438)"/><rect x="522" y="651" width="1" height="5" fill="rgba(255,128,51,0.278)"/><rect x="545" y="1" width="1" height="22" fill="rgba(255,128,51,0.098)"/><rect x="545" y="23" width="1" height="23" fill="rgba(255,128,51,0.278)"/><rect x="545" y="46" width="1" height="22" fill="rgba(255,128,51,0.438)"/><rect x="545" y="68" width="1" height="23" fill="rgba(255,128,51,0.577)"/><rect x="545" y="91" width="1" height="22" fill="rgba(255,128,51,0.698)"/><rect x="545" y="113" width="1" height="470" fill="rgba(255,128,51,0.750)"/><rect x="545" y="583" width="1" height="23" fill="rgba(255,128,51,0.698)"/><rect x="545" y="606" width="1" height="22" fill="rgba(255,128,51,0.577)"/><rect x="545" y="628" width="1" height="22" fill="rgba(255,128,51,0.438)"/><rect x="545" y="651" width="1" height="5" fill="rgba(255,128,51,0.278)"/><rect x="567" y="1" width="1" height="22" fill="rgba(255,128,51,0.098)"/><rect x="567" y="23" width="1" height="23" fill="rgba(255,128,51,0.278)"/><rect x="567" y="46" width="1" height="22" fill="rgba(255,128,51,0.438)"/><rect x="567" y="68" width="1" height="23" fill="rgba(255,128,51,0.577)"/><rect x="567" y="91" width="1" height="22" fill="rgba(255,128,51,0.698)"/><rect x="567" y="113" width="1" height="470" fill="rgba(255,128,51,0.750)"/><rect x="567" y="583" width="1" height="23" fill="rgba(255,128,51,0.698)"/><rect x="567" y="606" width="1" height="22" fill="rgba(255,128,51,0.577)"/><rect x="567" y="628" width="1" height="22" fill="rgba(255,128,51,0.438)"/><rect x="567" y="651" width="1" height="5" fill="rgba(255,128,51,0.278)"/><rect x="590" y="1" width="1" height="22" fill="rgba(255,128,51,0.098)"/><rect x="590" y="23" width="1" height="23" fill="rgba(255,128,51,0.278)"/><rect x="590" y="46" width="1" height="22" fill="rgba(255,128,51,0.438)"/><rect x="590" y="68" width="1" height="23" fill="rgba(255,128,51,0.577)"/><rect x="590" y="91" width="1" height="22" fill="rgba(255,128,51,0.698)"/><rect x="590" y="113" width="1" height="470" fill="rgba(255,128,51,0.750)"/><rect x="590" y="583" width="1" height="23" fill="rgba(255,128,51,0.698)"/><rect x="590" y="606" width="1" height="22" fill="rgba(255,128,51,0.577)"/><rect x="590" y="628" width="1" height="22" fill="rgba(255,128,51,0.438)"/><rect x="590" y="651" width="1" height="5" fill="rgba(255,128,51,0.278)"/><rect x="612" y="1" width="1" height="22" fill="rgba(255,128,51,0.098)"/><rect x="612" y="23" width="1" height="23" fill="rgba(255,128,51,0.278)"/><rect x="612" y="46" width="1" height="22" fill="rgba(255,128,51,0.438)"/><rect x="612" y="68" width="1" height="23" fill="rgba(255,128,51,0.577)"/><rect x="612" y="91" width="1" height="22" fill="rgba(255,128,51,0.698)"/><rect x="612" y="113" width="1" height="470" fill="rgba(255,128,51,0.750)"/><rect x="612" y="583" width="1" height="23" fill="rgba(255,128,51,0.698)"/><rect x="612" y="606" width="1" height="22" fill="rgba(255,128,51,0.577)"/><rect x="612" y="628" width="1" height="22" fill="rgba(255,128,51,0.438)"/><rect x="612" y="651" width="1" height="5" fill="rgba(255,128,51,0.278)"/><rect x="634" y="1" width="1" height="22" fill="rgba(255,128,51,0.098)"/><rect x="634" y="23" width="1" height="23" fill="rgba(255,128,51,0.278)"/><rect x="634" y="46" width="1" height="22" fill="rgba(255,128,51,0.438)"/><rect x="634" y="68" width="1" height="23" fill="rgba(255,128,51,0.577)"/><rect x="634" y="91" width="1" height="22" fill="rgba(255,128,51,0.698)"/><rect x="634" y="113" width="1" height="470" fill="rgba(255,128,51,0.750)"/><rect x="634" y="583" width="1" height="23" fill="rgba(255,128,51,0.698)"/><rect x="634" y="606" width="1" height="22" fill="rgba(255,128,51,0.577)"/><rect x="634" y="628" width="1" height="22" fill="rgba(255,128,51,0.438)"/><rect x="634" y="651" width="1" height="5" fill="rgba(255,128,51,0.278)"/><rect x="657" y="1" width="1" height="22" fill="rgba(255,128,51,0.098)"/><rect x="657" y="23" width="1" height="23" fill="rgba(255,128,51,0.278)"/><rect x="657" y="46" width="1" height="22" fill="rgba(255,128,51,0.438)"/><rect x="657" y="68" width="1" height="23" fill="rgba(255,128,51,0.577)"/><rect x="657" y="91" width="1" height="22" fill="rgba(255,128,51,0.698)"/><rect x="657" y="113" width="1" height="470" fill="rgba(255,128,51,0.750)"/><rect x="657" y="583" width="1" height="23" fill="rgba(255,128,51,0.698)"/><rect x="657" y="606" width="1" height="22" fill="rgba(255,128,51,0.577)"/><rect x="657" y="628" width="1" height="22" fill="rgba(255,128,51,0.438)"/><rect x="657" y="651" width="1" height="5" fill="rgba(255,128,51,0.278)"/><rect x="679" y="1" width="1" height="22" fill="rgba(255,128,51,0.098)"/><rect x="679" y="23" width="1" height="23" fill="rgba(255,128,51,0.278)"/><rect x="679" y="46" width="1" height="22" fill="rgba(255,128,51,0.438)"/><rect x="679" y="68" width="1" height="23" fill="rgba(255,128,51,0.577)"/><rect x="679" y="91" width="1" height="22" fill="rgba(255,128,51,0.698)"/><rect x="679" y="113" width="1" height="470" fill="rgba(255,128,51,0.750)"/><rect x="679" y="583" width="1" height="23" fill="rgba(255,128,51,0.698)"/><rect x="679" y="606" width="1" height="22" fill="rgba(255,128,51,0.577)"/><rect x="679" y="628" width="1" height="22" fill="rgba(255,128,51,0.438)"/><rect x="679" y="651" width="1" height="5" fill="rgba(255,128,51,0.278)"/><rect x="702" y="1" width="1" height="22" fill="rgba(255,128,51,0.098)"/><rect x="702" y="23" width="1" height="23" fill="rgba(255,128,51,0.278)"/><rect x="702" y="46" width="1" height="22" fill="rgba(255,128,51,0.438)"/><rect x="702" y="68" width="1" height="23" fill="rgba(255,128,51,0.577)"/><rect x="702" y="91" width="1" height="22" fill="rgba(255,128,51,0.698)"/><rect x="702" y="113" width="1" height="470" fill="rgba(255,128,51,0.750)"/><rect x="702" y="583" width="1" height="23" fill="rgba(255,128,51,0.698)"/><rect x="702" y="606" width="1" height="22" fill="rgba(255,128,51,0.577)"/><rect x="702" y="628" width="1" height="22" fill="rgba(255,128,51,0.438)"/><rect x="702" y="651" width="1" height="5" fill="rgba(255,128,51,0.278)"/><rect x="724" y="1" width="1" height="22" fill="rgba(255,128,51,0.098)"/><rect x="724" y="23" width="1" height="23" fill="rgba(255,128,51,0.278)"/><rect x="724" y="46" width="1" height="22" fill="rgba(255,128,51,0.438)"/><rect x="724" y="68" width="1" height="23" fill="rgba(255,128,51,0.577)"/><rect x="724" y="91" width="1" height="22" fill="rgba(255,128,51,0.698)"/><rect x="724" y="113" width="1" height="470" fill="rgba(255,128,51,0.750)"/><rect x="724" y="583" width="1" height="23" fill="rgba(255,128,51,0.698)"/><rect x="724" y="606" width="1" height="22" fill="rgba(255,128,51,0.577)"/><rect x="724" y="628" width="1" height="22" fill="rgba(255,128,51,0.438)"/><rect x="724" y="651" width="1" height="5" fill="rgba(255,128,51,0.278)"/><rect x="746" y="1" width="1" height="22" fill="rgba(255,128,51,0.098)"/><rect x="746" y="23" width="1" height="23" fill="rgba(255,128,51,0.278)"/><rect x="746" y="46" width="1" height="22" fill="rgba(255,128,51,0.438)"/><rect x="746" y="68" width="1" height="23" fill="rgba(255,128,51,0.577)"/><rect x="746" y="91" width="1" height="22" fill="rgba(255,128,51,0.698)"/><rect x="746" y="113" width="1" height="470" fill="rgba(255,128,51,0.750)"/><rect x="746" y="583" width="1" height="23" fill="rgba(255,128,51,0.698)"/><rect x="746" y="606" width="1" height="22" fill="rgba(255,128,51,0.577)"/><rect x="746" y="628" width="1" height="22" fill="rgba(255,128,51,0.438)"/><rect x="746" y="651" width="1" height="5" fill="rgba(255,128,51,0.278)"/><rect x="769" y="1" width="1" height="22" fill="rgba(255,128,51,0.098)"/><rect x="769" y="23" width="1" height="23" fill="rgba(255,128,51,0.278)"/><rect x="769" y="46" width="1" height="22" fill="rgba(255,128,51,0.438)"/><rect x="769" y="68" width="1" height="23" fill="rgba(255,128,51,0.577)"/><rect x="769" y="91" width="1" height="22" fill="rgba(255,128,51,0.698)"/><rect x="769" y="113" width="1" height="470" fill="rgba(255,128,51,0.750)"/><rect x="769" y="583" width="1" height="23" fill="rgba(255,128,51,0.698)"/><rect x="769" y="606" width="1" height="22" fill="rgba(255,128,51,0.577)"/><rect x="769" y="628" width="1" height="22" fill="rgba(255,128,51,0.438)"/><rect x="769" y="651" width="1" height="5" fill="rgba(255,128,51,0.278)"/><rect x="791" y="1" width="1" height="22" fill="rgba(255,128,51,0.098)"/><rect x="791" y="23" width="1" height="23" fill="rgba(255,128,51,0.278)"/><rect x="791" y="46" width="1" height="22" fill="rgba(255,128,51,0.438)"/><rect x="791" y="68" width="1" height="23" fill="rgba(255,128,51,0.577)"/><rect x="791" y="91" width="1" height="22" fill="rgba(255,128,51,0.698)"/><rect x="791" y="113" width="1" height="470" fill="rgba(255,128,51,0.750)"/><rect x="791" y="583" width="1" height="23" fill="rgba(255,128,51,0.698)"/><rect x="791" y="606" width="1" height="22" fill="rgba(255,128,51,0.577)"/><rect x="791" y="628" width="1" height="22" fill="rgba(255,128,51,0.438)"/><rect x="791" y="651" width="1" height="5" fill="rgba(255,128,51,0.278)"/><rect x="814" y="1" width="1" height="22" fill="rgba(255,128,51,0.098)"/><rect x="814" y="23" width="1" height="23" fill="rgba(255,128,51,0.278)"/><rect x="814" y="46" width="1" height="22" fill="rgba(255,128,51,0.438)"/><rect x="814" y="68" width="1" height="23" fill="rgba(255,128,51,0.577)"/><rect x="814" y="91" width="1" height="22" fill="rgba(255,128,51,0.698)"/><rect x="814" y="113" width="1" height="470" fill="rgba(255,128,51,0.750)"/><rect x="814" y="583" width="1" height="23" fill="rgba(255,128,51,0.698)"/><rect x="814" y="606" width="1" height="22" fill="rgba(255,128,51,0.577)"/><rect x="814" y="628" width="1" height="22" fill="rgba(255,128,51,0.438)"/><rect x="814" y="651" width="1" height="5" fill="rgba(255,128,51,0.278)"/><rect x="836" y="1" width="1" height="22" fill="rgba(255,128,51,0.098)"/><rect x="836" y="23" width="1" height="23" fill="rgba(255,128,51,0.278)"/><rect x="836" y="46" width="1" height="22" fill="rgba(255,128,51,0.438)"/><rect x="836" y="68" width="1" height="23" fill="rgba(255,128,51,0.577)"/><rect x="836" y="91" width="1" height="22" fill="rgba(255,128,51,0.698)"/><rect x="836" y="113" width="1" height="470" fill="rgba(255,128,51,0.750)"/><rect x="836" y="583" width="1" height="23" fill="rgba(255,128,51,0.698)"/><rect x="836" y="606" width="1" height="22" fill="rgba(255,128,51,0.577)"/><rect x="836" y="628" width="1" height="22" fill="rgba(255,128,51,0.438)"/><rect x="836" y="651" width="1" height="5" fill="rgba(255,128,51,0.278)"/><rect x="858" y="1" width="1" height="22" fill="rgba(255,128,51,0.098)"/><rect x="858" y="23" width="1" height="23" fill="rgba(255,128,51,0.278)"/><rect x="858" y="46" width="1" height="22" fill="rgba(255,128,51,0.438)"/><rect x="858" y="68" width="1" height="23" fill="rgba(255,128,51,0.577)"/><rect x="858" y="91" width="1" height="22" fill="rgba(255,128,51,0.698)"/><rect x="858" y="113" width="1" height="470" fill="rgba(255,128,51,0.750)"/><rect x="858" y="583" width="1" height="23" fill="rgba(255,128,51,0.698)"/><rect x="858" y="606" width="1" height="22" fill="rgba(255,128,51,0.577)"/><rect x="858" y="628" width="1" height="22" fill="rgba(255,128,51,0.438)"/><rect x="858" y="651" width="1" height="5" fill="rgba(255,128,51,0.278)"/><rect x="881" y="1" width="1" height="22" fill="rgba(255,128,51,0.098)"/><rect x="881" y="23" width="1" height="23" fill="rgba(255,128,51,0.278)"/><rect x="881" y="46" width="1" height="22" fill="rgba(255,128,51,0.438)"/><rect x="881" y="68" width="1" height="23" fill="rgba(255,128,51,0.577)"/><rect x="881" y="91" width="1" height="22" fill="rgba(255,128,51,0.698)"/><rect x="881" y="113" width="1" height="470" fill="rgba(255,128,51,0.750)"/><rect x="881" y="583" width="1" height="23" fill="rgba(255,128,51,0.698)"/><rect x="881" y="606" width="1" height="22" fill="rgba(255,128,51,0.577)"/><rect x="881" y="628" width="1" height="22" fill="rgba(255,128,51,0.438)"/><rect x="881" y="651" width="1" height="5" fill="rgba(255,128,51,0.278)"/><rect x="164" y="1" width="732" height="1" fill="rgba(255,128,51,0.050)"/><rect x="164" y="23" width="22" height="1" fill="rgba(255,128,51,0.098)"/><rect x="186" y="23" width="710" height="1" fill="rgba(255,128,51,0.193)"/><rect x="164" y="46" width="22" height="1" fill="rgba(255,128,51,0.098)"/><rect x="186" y="46" width="23" height="1" fill="rgba(255,128,51,0.278)"/><rect x="209" y="46" width="687" height="1" fill="rgba(255,128,51,0.363)"/><rect x="164" y="68" width="22" height="1" fill="rgba(255,128,51,0.098)"/><rect x="186" y="68" width="23" height="1" fill="rgba(255,128,51,0.278)"/><rect x="209" y="68" width="22" height="1" fill="rgba(255,128,51,0.438)"/><rect x="231" y="68" width="665" height="1" fill="rgba(255,128,51,0.512)"/><rect x="164" y="91" width="22" height="1" fill="rgba(255,128,51,0.098)"/><rect x="186" y="91" width="23" height="1" fill="rgba(255,128,51,0.278)"/><rect x="209" y="91" width="22" height="1" fill="rgba(255,128,51,0.438)"/><rect x="231" y="91" width="23" height="1" fill="rgba(255,128,51,0.577)"/><rect x="254" y="91" width="642" height="1" fill="rgba(255,128,51,0.642)"/><rect x="164" y="113" width="22" height="1" fill="rgba(255,128,51,0.098)"/><rect x="186" y="113" width="23" height="1" fill="rgba(255,128,51,0.278)"/><rect x="209" y="113" width="22" height="1" fill="rgba(255,128,51,0.438)"/><rect x="231" y="113" width="23" height="1" fill="rgba(255,128,51,0.577)"/><rect x="254" y="113" width="22" height="1" fill="rgba(255,128,51,0.698)"/><rect x="276" y="113" width="620" height="1" fill="rgba(255,128,51,0.725)"/><rect x="164" y="135" width="22" height="1" fill="rgba(255,128,51,0.098)"/><rect x="186" y="135" width="23" height="1" fill="rgba(255,128,51,0.278)"/><rect x="209" y="135" width="22" height="1" fill="rgba(255,128,51,0.438)"/><rect x="231" y="135" width="23" height="1" fill="rgba(255,128,51,0.577)"/><rect x="254" y="135" width="22" height="1" fill="rgba(255,128,51,0.698)"/><rect x="276" y="135" width="620" height="1" fill="rgba(255,128,51,0.750)"/><rect x="164" y="158" width="22" height="1" fill="rgba(255,128,51,0.098)"/><rect x="186" y="158" width="23" height="1" fill="rgba(255,128,51,0.278)"/><rect x="209" y="158" width="22" height="1" fill="rgba(255,128,51,0.438)"/><rect x="231" y="158" width="23" height="1" fill="rgba(255,128,51,0.577)"/><rect x="254" y="158" width="22" height="1" fill="rgba(255,128,51,0.698)"/><rect x="276" y="158" width="620" height="1" fill="rgba(255,128,51,0.750)"/><rect x="164" y="180" width="22" height="1" fill="rgba(255,128,51,0.098)"/><rect x="186" y="180" width="23" height="1" fill="rgba(255,128,51,0.278)"/><rect x="209" y="180" width="22" height="1" fill="rgba(255,128,51,0.438)"/><rect x="231" y="180" width="23" height="1" fill="rgba(255,128,51,0.577)"/><rect x="254" y="180" width="22" height="1" fill="rgba(255,128,51,0.698)"/><rect x="276" y="180" width="620" height="1" fill="rgba(255,128,51,0.750)"/><rect x="164" y="203" width="22" height="1" fill="rgba(255,128,51,0.098)"/><rect x="186" y="203" width="23" height="1" fill="rgba(255,128,51,0.278)"/><rect x="209" y="203" width="22" height="1" fill="rgba(255,128,51,0.438)"/><rect x="231" y="203" width="23" height="1" fill="rgba(255,128,51,0.577)"/><rect x="254" y="203" width="22" height="1" fill="rgba(255,128,51,0.698)"/><rect x="276" y="203" width="620" height="1" fill="rgba(255,128,51,0.750)"/><rect x="164" y="225" width="22" height="1" fill="rgba(255,128,51,0.098)"/><rect x="186" y="225" width="23" height="1" fill="rgba(255,128,51,0.278)"/><rect x="209" y="225" width="22" height="1" fill="rgba(255,128,51,0.438)"/><rect x="231" y="225" width="23" height="1" fill="rgba(255,128,51,0.577)"/><rect x="254" y="225" width="22" height="1" fill="rgba(255,128,51,0.698)"/><rect x="276" y="225" width="620" height="1" fill="rgba(255,128,51,0.750)"/><rect x="164" y="247" width="22" height="1" fill="rgba(255,128,51,0.098)"/><rect x="186" y="247" width="23" height="1" fill="rgba(255,128,51,0.278)"/><rect x="209" y="247" width="22" height="1" fill="rgba(255,128,51,0.438)"/><rect x="231" y="247" width="23" height="1" fill="rgba(255,128,51,0.577)"/><rect x="254" y="247" width="22" height="1" fill="rgba(255,128,51,0.698)"/><rect x="276" y="247" width="620" height="1" fill="rgba(255,128,51,0.750)"/><rect x="164" y="270" width="22" height="1" fill="rgba(255,128,51,0.098)"/><rect x="186" y="270" width="23" height="1" fill="rgba(255,128,51,0.278)"/><rect x="209" y="270" width="22" height="1" fill="rgba(255,128,51,0.438)"/><rect x="231" y="270" width="23" height="1" fill="rgba(255,128,51,0.577)"/><rect x="254" y="270" width="22" height="1" fill="rgba(255,128,51,0.698)"/><rect x="276" y="270" width="620" height="1" fill="rgba(255,128,51,0.750)"/><rect x="164" y="292" width="22" height="1" fill="rgba(255,128,51,0.098)"/><rect x="186" y="292" width="23" height="1" fill="rgba(255,128,51,0.278)"/><rect x="209" y="292" width="22" height="1" fill="rgba(255,128,51,0.438)"/><rect x="231" y="292" width="23" height="1" fill="rgba(255,128,51,0.577)"/><rect x="254" y="292" width="22" height="1" fill="rgba(255,128,51,0.698)"/><rect x="276" y="292" width="620" height="1" fill="rgba(255,128,51,0.750)"/><rect x="164" y="315" width="22" height="1" fill="rgba(255,128,51,0.098)"/><rect x="186" y="315" width="23" height="1" fill="rgba(255,128,51,0.278)"/><rect x="209" y="315" width="22" height="1" fill="rgba(255,128,51,0.438)"/><rect x="231" y="315" width="23" height="1" fill="rgba(255,128,51,0.577)"/><rect x="254" y="315" width="22" height="1" fill="rgba(255,128,51,0.698)"/><rect x="276" y="315" width="620" height="1" fill="rgba(255,128,51,0.750)"/><rect x="164" y="337" width="22" height="1" fill="rgba(255,128,51,0.098)"/><rect x="186" y="337" width="23" height="1" fill="rgba(255,128,51,0.278)"/><rect x="209" y="337" width="22" height="1" fill="rgba(255,128,51,0.438)"/><rect x="231" y="337" width="23" height="1" fill="rgba(255,128,51,0.577)"/><rect x="254" y="337" width="22" height="1" fill="rgba(255,128,51,0.698)"/><rect x="276" y="337" width="620" height="1" fill="rgba(255,128,51,0.750)"/><rect x="164" y="359" width="22" height="1" fill="rgba(255,128,51,0.098)"/><rect x="186" y="359" width="23" height="1" fill="rgba(255,128,51,0.278)"/><rect x="209" y="359" width="22" height="1" fill="rgba(255,128,51,0.438)"/><rect x="231" y="359" width="23" height="1" fill="rgba(255,128,51,0.577)"/><rect x="254" y="359" width="22" height="1" fill="rgba(255,128,51,0.698)"/><rect x="276" y="359" width="620" height="1" fill="rgba(255,128,51,0.750)"/><rect x="164" y="382" width="22" height="1" fill="rgba(255,128,51,0.098)"/><rect x="186" y="382" width="23" height="1" fill="rgba(255,128,51,0.278)"/><rect x="209" y="382" width="22" height="1" fill="rgba(255,128,51,0.438)"/><rect x="231" y="382" width="23" height="1" fill="rgba(255,128,51,0.577)"/><rect x="254" y="382" width="22" height="1" fill="rgba(255,128,51,0.698)"/><rect x="276" y="382" width="620" height="1" fill="rgba(255,128,51,0.750)"/><rect x="164" y="404" width="22" height="1" fill="rgba(255,128,51,0.098)"/><rect x="186" y="404" width="23" height="1" fill="rgba(255,128,51,0.278)"/><rect x="209" y="404" width="22" height="1" fill="rgba(255,128,51,0.438)"/><rect x="231" y="404" width="23" height="1" fill="rgba(255,128,51,0.577)"/><rect x="254" y="404" width="22" height="1" fill="rgba(255,128,51,0.698)"/><rect x="276" y="404" width="620" height="1" fill="rgba(255,128,51,0.750)"/><rect x="164" y="427" width="22" height="1" fill="rgba(255,128,51,0.098)"/><rect x="186" y="427" width="23" height="1" fill="rgba(255,128,51,0.278)"/><rect x="209" y="427" width="22" height="1" fill="rgba(255,128,51,0.438)"/><rect x="231" y="427" width="23" height="1" fill="rgba(255,128,51,0.577)"/><rect x="254" y="427" width="22" height="1" fill="rgba(255,128,51,0.698)"/><rect x="276" y="427" width="620" height="1" fill="rgba(255,128,51,0.750)"/><rect x="164" y="449" width="22" height="1" fill="rgba(255,128,51,0.098)"/><rect x="186" y="449" width="23" height="1" fill="rgba(255,128,51,0.278)"/><rect x="209" y="449" width="22" height="1" fill="rgba(255,128,51,0.438)"/><rect x="231" y="449" width="23" height="1" fill="rgba(255,128,51,0.577)"/><rect x="254" y="449" width="22" height="1" fill="rgba(255,128,51,0.698)"/><rect x="276" y="449" width="620" height="1" fill="rgba(255,128,51,0.750)"/><rect x="164" y="471" width="22" height="1" fill="rgba(255,128,51,0.098)"/><rect x="186" y="471" width="23" height="1" fill="rgba(255,128,51,0.278)"/><rect x="209" y="471" width="22" height="1" fill="rgba(255,128,51,0.438)"/><rect x="231" y="471" width="23" height="1" fill="rgba(255,128,51,0.577)"/><rect x="254" y="471" width="22" height="1" fill="rgba(255,128,51,0.698)"/><rect x="276" y="471" width="620" height="1" fill="rgba(255,128,51,0.750)"/><rect x="164" y="494" width="22" height="1" fill="rgba(255,128,51,0.098)"/><rect x="186" y="494" width="23" height="1" fill="rgba(255,128,51,0.278)"/><rect x="209" y="494" width="22" height="1" fill="rgba(255,128,51,0.438)"/><rect x="231" y="494" width="23" height="1" fill="rgba(255,128,51,0.577)"/><rect x="254" y="494" width="22" height="1" fill="rgba(255,128,51,0.698)"/><rect x="276" y="494" width="620" height="1" fill="rgba(255,128,51,0.750)"/><rect x="164" y="516" width="22" height="1" fill="rgba(255,128,51,0.098)"/><rect x="186" y="516" width="23" height="1" fill="rgba(255,128,51,0.278)"/><rect x="209" y="516" width="22" height="1" fill="rgba(255,128,51,0.438)"/><rect x="231" y="516" width="23" height="1" fill="rgba(255,128,51,0.577)"/><rect x="254" y="516" width="22" height="1" fill="rgba(255,128,51,0.698)"/><rect x="276" y="516" width="620" height="1" fill="rgba(255,128,51,0.750)"/><rect x="164" y="539" width="22" height="1" fill="rgba(255,128,51,0.098)"/><rect x="186" y="539" width="23" height="1" fill="rgba(255,128,51,0.278)"/><rect x="209" y="539" width="22" height="1" fill="rgba(255,128,51,0.438)"/><rect x="231" y="539" width="23" height="1" fill="rgba(255,128,51,0.577)"/><rect x="254" y="539" width="22" height="1" fill="rgba(255,128,51,0.698)"/><rect x="276" y="539" width="620" height="1" fill="rgba(255,128,51,0.750)"/><rect x="164" y="561" width="22" height="1" fill="rgba(255,128,51,0.098)"/><rect x="186" y="561" width="23" height="1" fill="rgba(255,128,51,0.278)"/><rect x="209" y="561" width="22" height="1" fill="rgba(255,128,51,0.438)"/><rect x="231" y="561" width="23" height="1" fill="rgba(255,128,51,0.577)"/><rect x="254" y="561" width="22" height="1" fill="rgba(255,128,51,0.698)"/><rect x="276" y="561" width="620" height="1" fill="rgba(255,128,51,0.750)"/><rect x="164" y="583" width="22" height="1" fill="rgba(255,128,51,0.098)"/><rect x="186" y="583" width="23" height="1" fill="rgba(255,128,51,0.278)"/><rect x="209" y="583" width="22" height="1" fill="rgba(255,128,51,0.438)"/><rect x="231" y="583" width="23" height="1" fill="rgba(255,128,51,0.577)"/><rect x="254" y="583" width="22" height="1" fill="rgba(255,128,51,0.698)"/><rect x="276" y="583" width="620" height="1" fill="rgba(255,128,51,0.725)"/><rect x="164" y="606" width="22" height="1" fill="rgba(255,128,51,0.098)"/><rect x="186" y="606" width="23" height="1" fill="rgba(255,128,51,0.278)"/><rect x="209" y="606" width="22" height="1" fill="rgba(255,128,51,0.438)"/><rect x="231" y="606" width="23" height="1" fill="rgba(255,128,51,0.577)"/><rect x="254" y="606" width="642" height="1" fill="rgba(255,128,51,0.642)"/><rect x="164" y="628" width="22" height="1" fill="rgba(255,128,51,0.098)"/><rect x="186" y="628" width="23" height="1" fill="rgba(255,128,51,0.278)"/><rect x="209" y="628" width="22" height="1" fill="rgba(255,128,51,0.438)"/><rect x="231" y="628" width="665" height="1" fill="rgba(255,128,51,0.512)"/><rect x="164" y="651" width="22" height="1" fill="rgba(255,128,51,0.098)"/><rect x="186" y="651" width="23" height="1" fill="rgba(255,128,51,0.278)"/><rect x="209" y="651" width="687" height="1" fill="rgba(255,128,51,0.363)"/><rect x="0" y="91" width="278" height="1" fill="#e43c5a"/><rect x="278" y="91" width="618.00" height="1" fill="#b84cc0"/><rect x="0" y="649.50" width="896" height="5" fill="rgba(120,120,120,0.35)"/><rect x="378" y="649.50" width="518" height="5" rx="2.5" fill="rgba(205,205,205,0.5)"/></svg>
<svg class="a" style="left:562px;top:313px;" width="16" height="16" viewBox="0 0 16 16"><path d="M6.5 0.5h3v5h-3zM6.5 10.5h3v5h-3zM0.5 6.5h5v3h-5zM10.5 6.5h5v3h-5z" fill="#f86a6a" stroke="#f0f0f0" stroke-width="0.9"/><circle cx="8" cy="8" r="3" fill="#f86a6a"/></svg>
<svg class="a" style="left:617px;top:310px;" width="16" height="16" viewBox="0 0 16 16"><path d="M6.5 0.5h3v5h-3zM6.5 10.5h3v5h-3z" fill="#cfc6b6" stroke="#6a6050" stroke-width="0.8"/><path d="M0.5 6l4 2-4 2zM15.5 6l-4 2 4 2z" fill="#cfc6b6" stroke="#6a6050" stroke-width="0.8"/><circle cx="8" cy="8" r="3" fill="#d8d0c0" stroke="#6a6050" stroke-width="0.6"/></svg>
<svg class="a" style="left:78px;top:103.6px;" width="910" height="14.4" viewBox="0 0 910 14.4"><rect x="33.76" y="9.4" width="1.2" height="5" fill="#9a9ea6"/><rect x="57.10" y="0" width="1.2" height="14.4" fill="#9a9ea6"/><rect x="80.44" y="9.4" width="1.2" height="5" fill="#9a9ea6"/><rect x="103.78" y="9.4" width="1.2" height="5" fill="#9a9ea6"/><rect x="127.12" y="9.4" width="1.2" height="5" fill="#9a9ea6"/><rect x="150.46" y="9.4" width="1.2" height="5" fill="#9a9ea6"/><rect x="173.80" y="3" width="1.2" height="11.4" fill="#9a9ea6"/><rect x="197.14" y="9.4" width="1.2" height="5" fill="#9a9ea6"/><rect x="220.48" y="9.4" width="1.2" height="5" fill="#9a9ea6"/><rect x="243.82" y="9.4" width="1.2" height="5" fill="#9a9ea6"/><rect x="267.16" y="9.4" width="1.2" height="5" fill="#9a9ea6"/><rect x="290.50" y="0" width="1.2" height="14.4" fill="#9a9ea6"/><rect x="313.84" y="9.4" width="1.2" height="5" fill="#9a9ea6"/><rect x="337.18" y="9.4" width="1.2" height="5" fill="#9a9ea6"/><rect x="360.52" y="9.4" width="1.2" height="5" fill="#9a9ea6"/><rect x="383.86" y="9.4" width="1.2" height="5" fill="#9a9ea6"/><rect x="407.20" y="3" width="1.2" height="11.4" fill="#9a9ea6"/><rect x="430.54" y="9.4" width="1.2" height="5" fill="#9a9ea6"/><rect x="453.88" y="9.4" width="1.2" height="5" fill="#9a9ea6"/><rect x="477.22" y="9.4" width="1.2" height="5" fill="#9a9ea6"/><rect x="500.56" y="9.4" width="1.2" height="5" fill="#9a9ea6"/><rect x="523.90" y="0" width="1.2" height="14.4" fill="#9a9ea6"/><rect x="547.24" y="9.4" width="1.2" height="5" fill="#9a9ea6"/><rect x="570.58" y="9.4" width="1.2" height="5" fill="#9a9ea6"/><rect x="593.92" y="9.4" width="1.2" height="5" fill="#9a9ea6"/><rect x="617.26" y="9.4" width="1.2" height="5" fill="#9a9ea6"/><rect x="640.60" y="3" width="1.2" height="11.4" fill="#9a9ea6"/><rect x="663.94" y="9.4" width="1.2" height="5" fill="#9a9ea6"/><rect x="687.28" y="9.4" width="1.2" height="5" fill="#9a9ea6"/><rect x="710.62" y="9.4" width="1.2" height="5" fill="#9a9ea6"/><rect x="733.96" y="9.4" width="1.2" height="5" fill="#9a9ea6"/><rect x="757.30" y="0" width="1.2" height="14.4" fill="#9a9ea6"/><rect x="780.64" y="9.4" width="1.2" height="5" fill="#9a9ea6"/><rect x="803.98" y="9.4" width="1.2" height="5" fill="#9a9ea6"/><rect x="827.32" y="9.4" width="1.2" height="5" fill="#9a9ea6"/><rect x="850.66" y="9.4" width="1.2" height="5" fill="#9a9ea6"/><rect x="874.00" y="3" width="1.2" height="11.4" fill="#9a9ea6"/><rect x="897.34" y="9.4" width="1.2" height="5" fill="#9a9ea6"/></svg>
<div class="a" style="left:137.5px;top:105.22px;font-size:8.6px;line-height:1;color:#9a9ea6;font-weight:normal;white-space:nowrap;font-family:'Liberation Sans',sans-serif;">-500</div>
<div class="a" style="left:370.5px;top:105.22px;font-size:8.6px;line-height:1;color:#9a9ea6;font-weight:normal;white-space:nowrap;font-family:'Liberation Sans',sans-serif;">0</div>
<div class="a" style="left:604px;top:105.22px;font-size:8.6px;line-height:1;color:#9a9ea6;font-weight:normal;white-space:nowrap;font-family:'Liberation Sans',sans-serif;">500</div>
<div class="a" style="left:837.5px;top:105.22px;font-size:8.6px;line-height:1;color:#9a9ea6;font-weight:normal;white-space:nowrap;font-family:'Liberation Sans',sans-serif;">1000</div>
<svg class="a" style="left:78px;top:118px;" width="14" height="656" viewBox="0 0 14 656"><rect x="9" y="20.98" width="5" height="1.2" fill="#9a9ea6"/><rect x="9" y="44.32" width="5" height="1.2" fill="#9a9ea6"/><rect x="9" y="67.66" width="5" height="1.2" fill="#9a9ea6"/><rect x="0" y="91.00" width="14" height="1.2" fill="#9a9ea6"/><rect x="9" y="114.34" width="5" height="1.2" fill="#9a9ea6"/><rect x="9" y="137.68" width="5" height="1.2" fill="#9a9ea6"/><rect x="9" y="161.02" width="5" height="1.2" fill="#9a9ea6"/><rect x="9" y="184.36" width="5" height="1.2" fill="#9a9ea6"/><rect x="3" y="207.70" width="11" height="1.2" fill="#9a9ea6"/><rect x="9" y="231.04" width="5" height="1.2" fill="#9a9ea6"/><rect x="9" y="254.38" width="5" height="1.2" fill="#9a9ea6"/><rect x="9" y="277.72" width="5" height="1.2" fill="#9a9ea6"/><rect x="9" y="301.06" width="5" height="1.2" fill="#9a9ea6"/><rect x="0" y="324.40" width="14" height="1.2" fill="#9a9ea6"/><rect x="9" y="347.74" width="5" height="1.2" fill="#9a9ea6"/><rect x="9" y="371.08" width="5" height="1.2" fill="#9a9ea6"/><rect x="9" y="394.42" width="5" height="1.2" fill="#9a9ea6"/><rect x="9" y="417.76" width="5" height="1.2" fill="#9a9ea6"/><rect x="3" y="441.10" width="11" height="1.2" fill="#9a9ea6"/><rect x="9" y="464.44" width="5" height="1.2" fill="#9a9ea6"/><rect x="9" y="487.78" width="5" height="1.2" fill="#9a9ea6"/><rect x="9" y="511.12" width="5" height="1.2" fill="#9a9ea6"/><rect x="9" y="534.46" width="5" height="1.2" fill="#9a9ea6"/><rect x="0" y="557.80" width="14" height="1.2" fill="#9a9ea6"/><rect x="9" y="581.14" width="5" height="1.2" fill="#9a9ea6"/><rect x="9" y="604.48" width="5" height="1.2" fill="#9a9ea6"/><rect x="9" y="627.82" width="5" height="1.2" fill="#9a9ea6"/><rect x="9" y="651.16" width="5" height="1.2" fill="#9a9ea6"/></svg>
<div class="a" style="left:77.5px;top:209px;font-size:8.6px;line-height:1;color:#9a9ea6;transform:rotate(-90deg);transform-origin:0 0;white-space:nowrap">0</div>
<div class="a" style="left:77.5px;top:442.5px;font-size:8.6px;line-height:1;color:#9a9ea6;transform:rotate(-90deg);transform-origin:0 0;white-space:nowrap">500</div>
<div class="a" style="left:77.5px;top:676px;font-size:8.6px;line-height:1;color:#9a9ea6;transform:rotate(-90deg);transform-origin:0 0;white-space:nowrap">1000</div>
<svg class="a" style="left:103px;top:130px;" width="16" height="16" viewBox="0 0 16 16"><rect x="6.3" y="6.3" width="3.4" height="3.4" fill="#e0e0e0"/><path d="M5.5 1.5L8 4l2.5-2.5M5.5 14.5L8 12l2.5 2.5M1.5 5.5L4 8l-2.5 2.5M14.5 5.5L12 8l2.5 2.5" stroke="#e0e0e0" stroke-width="1.6" fill="none"/></svg>
<svg class="a" style="left:135px;top:130.3px;" width="16" height="16" viewBox="0 0 16 16"><circle cx="8" cy="8" r="7.6" fill="#e6e6e6"/><rect x="4" y="6.9" width="8" height="2.3" fill="#4d4d4d"/></svg>
<div class="a" style="left:162.8px;top:131.6px;font-size:13.7px;line-height:1;color:#e6e6e6;font-weight:normal;white-space:nowrap;font-family:'Liberation Sans',sans-serif;text-shadow:0 0 2px #333">46.7 %</div>
<svg class="a" style="left:219px;top:130.3px;" width="16" height="16" viewBox="0 0 16 16"><circle cx="8" cy="8" r="7.6" fill="#e6e6e6"/><rect x="4" y="6.9" width="8" height="2.3" fill="#4d4d4d"/><rect x="6.9" y="4" width="2.3" height="8" fill="#4d4d4d"/></svg>
<div class="a" style="left:76px;top:776px;width:1632px;height:3px;background:#1d2229;"></div>
<div class="a" style="left:76px;top:779px;width:1632px;height:497px;background:#363d4a;"></div>
<div class="a" style="left:80px;top:786px;width:52px;height:31px;background:#363d4a;"></div>
<div class="a" style="left:80px;top:785.5px;width:52px;height:2px;background:#5b9bd5;"></div>
<div class="a" style="left:132px;top:786px;width:153px;height:31px;background:#222832;border-radius:0 4px 4px 0"></div>
<div class="a" style="left:91px;top:794.06px;font-size:14.1px;line-height:1;color:#d6d9de;font-weight:normal;white-space:nowrap;font-family:'Liberation Sans',sans-serif;">Tiles</div>
<div class="a" style="left:143px;top:793.56px;font-size:14.7px;line-height:1;color:#8b8f96;font-weight:normal;white-space:nowrap;font-family:'Liberation Sans',sans-serif;">Patterns</div>
<div class="a" style="left:221px;top:793.56px;font-size:14.7px;line-height:1;color:#8b8f96;font-weight:normal;white-space:nowrap;font-family:'Liberation Sans',sans-serif;">Terrains</div>
<div class="a" style="left:321px;top:786.2px;width:28px;height:30.5px;background:#1f242c;border-radius:4px"></div>
<svg class="a" style="left:295px;top:793px;" width="16" height="16" viewBox="0 0 16 16"><path d="M2 2l12 4.5-5 1.5 4.5 4.5-1.5 1.5-4.5-4.5-1.5 5z" fill="#e0e0e0"/></svg>
<svg class="a" style="left:329px;top:792px;" width="12" height="18" viewBox="0 0 12 18"><path d="M3.5 3.5a2.5 2.5 0 0 1 5 0V13L6 16.5 3.5 13z" fill="#6cb4f0"/><rect x="4.8" y="5" width="2.4" height="6" fill="#1f242c"/></svg>
<svg class="a" style="left:357px;top:793px;" width="16" height="16" viewBox="0 0 16 16"><path d="M2.5 13.5l11-11" stroke="#e0e0e0" stroke-width="2.2" stroke-linecap="round"/></svg>
<svg class="a" style="left:387px;top:794px;" width="16" height="14" viewBox="0 0 16 14"><rect x="1.5" y="2" width="13" height="9.5" stroke="#e0e0e0" stroke-width="2" fill="none"/></svg>
<svg class="a" style="left:418px;top:792px;" width="16" height="17" viewBox="0 0 16 17"><path d="M1.5 8.5L7 3l6 6-5.5 5.5z" fill="#e0e0e0"/><path d="M14 11c1 1.5 1.5 2.2 1.5 3a1.5 1.5 0 0 1-3 0c0-.8.5-1.5 1.5-3z" fill="#e0e0e0"/><path d="M5 5V2.5a1.5 1.5 0 0 1 3 0V6" stroke="#e0e0e0" stroke-width="1.2" fill="none"/></svg>
<div class="a" style="left:446.6px;top:786px;width:1px;height:31px;background:#4a5160;"></div>
<div class="a" style="left:518.7px;top:786px;width:1px;height:31px;background:#4a5160;"></div>
<div class="a" style="left:654.8px;top:786px;width:1px;height:31px;background:#4a5160;"></div>
<svg class="a" style="left:461px;top:792px;" width="12" height="18" viewBox="0 0 12 18"><path d="M4 3a2 2 0 0 1 4 0v3h1v2H8v6l-2 3-2-3V8H3V6h1z" fill="#e0e0e0"/><rect x="5" y="9" width="2" height="4.5" fill="#363d4a"/></svg>
<svg class="a" style="left:491px;top:793px;" width="16" height="16" viewBox="0 0 16 16"><path d="M9 1.5l6 6-7 7H4L1.5 12z" fill="#e0e0e0"/><path d="M3 11l3 3" stroke="#363d4a" stroke-width="1"/><path d="M2.5 11.5l3.5 3" stroke="#363d4a" stroke-width="1.6"/></svg>
<svg class="a" style="left:531px;top:793px;" width="16" height="16" viewBox="0 0 16 16"><path d="M4.5 11A5.5 5.5 0 1 0 4 5" stroke="#e0e0e0" stroke-width="2" fill="none"/><path d="M0.5 4.5h5.5V9z" fill="#e0e0e0" transform="rotate(20 3 6)"/></svg>
<svg class="a" style="left:562px;top:793px;" width="16" height="16" viewBox="0 0 16 16"><path d="M11.5 11A5.5 5.5 0 1 1 12 5" stroke="#e0e0e0" stroke-width="2" fill="none"/><path d="M15.5 4.5H10V9z" fill="#e0e0e0" transform="rotate(-20 13 6)"/></svg>
<svg class="a" style="left:595px;top:795px;" width="16" height="12" viewBox="0 0 16 12"><path d="M3 6h10" stroke="#e0e0e0" stroke-width="2"/><path d="M0.5 6L5 2v8zM15.5 6L11 2v8z" fill="#e0e0e0"/></svg>
<svg class="a" style="left:628px;top:792px;" width="12" height="17" viewBox="0 0 12 17"><path d="M6 3v11" stroke="#e0e0e0" stroke-width="2"/><path d="M6 0.5L2 5h8zM6 16.5L2 12h8z" fill="#e0e0e0"/></svg>
<svg class="a" style="left:667px;top:793px;" width="16" height="16" viewBox="0 0 16 16"><rect x="1" y="1" width="14" height="14" rx="3" fill="#e0e0e0"/><circle cx="4.5" cy="4.5" r="1.8" fill="#363d4a"/><circle cx="8" cy="8" r="1.8" fill="#363d4a"/><circle cx="11.5" cy="11.5" r="1.8" fill="#363d4a"/></svg>
<div class="a" style="left:80px;top:821px;width:277px;height:428px;background:#232831;border-radius:4px"></div>
<div class="a" style="left:357px;top:821px;width:4px;height:455px;background:#363d4a;"></div>
<div class="a" style="left:361px;top:821px;width:93px;height:455px;background:#232831;"></div>
<div class="a" style="left:84px;top:1036px;width:269px;height:69px;background:#3a5069;border-radius:4px"></div>
<div class="a" style="left:153.5px;top:853.64px;font-size:13.3px;line-height:1;color:#d6d9de;font-weight:normal;white-space:nowrap;font-family:'Liberation Sans',sans-serif;">Floors_2_TILESET_A2_.png</div>
<div class="a" style="left:153.5px;top:923.64px;font-size:13.3px;line-height:1;color:#d6d9de;font-weight:normal;white-space:nowrap;font-family:'Liberation Sans',sans-serif;">Floors_TILESET_A2_.png</div>
<div class="a" style="left:153.5px;top:993.64px;font-size:13.3px;line-height:1;color:#d6d9de;font-weight:normal;white-space:nowrap;font-family:'Liberation Sans',sans-serif;">Walls_2_TILESET_A4_.png</div>
<div class="a" style="left:153.5px;top:1063.14px;font-size:13.3px;line-height:1;color:#d6d9de;font-weight:normal;white-space:nowrap;font-family:'Liberation Sans',sans-serif;">Walls_TILESET_A4_.png</div>
<svg class="a" style="left:87px;top:836.8px;" width="60" height="34.2" viewBox="0 0 60 34.2"><rect x="0.00" y="0.00" width="7.55" height="11.25" fill="#dcd8c4"/><rect x="7.50" y="0.00" width="7.55" height="11.25" fill="#b4b0ac"/><rect x="15.00" y="0.00" width="7.55" height="11.25" fill="#e6d6ca"/><rect x="22.50" y="0.00" width="7.55" height="11.25" fill="#e6e6ee"/><rect x="30.00" y="0.00" width="7.55" height="11.25" fill="#d8c4a4"/><rect x="37.50" y="0.00" width="7.55" height="11.25" fill="#eee2d6"/><rect x="45.00" y="0.00" width="7.55" height="11.25" fill="#c0904c"/><rect x="52.50" y="0.00" width="7.55" height="11.25" fill="#b88848"/><rect x="0.00" y="11.20" width="7.55" height="11.25" fill="#a0a898"/><rect x="7.50" y="11.20" width="7.55" height="11.25" fill="#8a7a6a"/><rect x="15.00" y="11.20" width="7.55" height="11.25" fill="#7c7468"/><rect x="22.50" y="11.20" width="7.55" height="11.25" fill="#9aa0c0"/><rect x="30.00" y="11.20" width="7.55" height="11.25" fill="#a09890"/><rect x="37.50" y="11.20" width="7.55" height="11.25" fill="#8c8680"/><rect x="45.00" y="11.20" width="7.55" height="11.25" fill="#908880"/><rect x="0.00" y="22.40" width="7.55" height="11.85" fill="#80a8d8"/><rect x="7.50" y="22.40" width="7.55" height="11.85" fill="#cce0ee"/><rect x="15.00" y="22.40" width="7.55" height="11.85" fill="#d0dce8"/><rect x="22.50" y="22.40" width="7.55" height="11.85" fill="#d0e4d8"/></svg>
<svg class="a" style="left:87px;top:906.6px;" width="60" height="45.2" viewBox="0 0 60 45.2"><rect x="0.00" y="0.00" width="7.55" height="11.35" fill="#f0e6a6"/><rect x="7.50" y="0.00" width="7.55" height="11.35" fill="#a8e4e0"/><rect x="15.00" y="0.00" width="7.55" height="11.35" fill="#bc6650"/><rect x="22.50" y="0.00" width="7.55" height="11.35" fill="#6c6cb8"/><rect x="30.00" y="0.00" width="7.55" height="11.35" fill="#e4c0bc"/><rect x="37.50" y="0.00" width="7.55" height="11.35" fill="#eee4d2"/><rect x="45.00" y="0.00" width="7.55" height="11.35" fill="#e6d8bc"/><rect x="52.50" y="0.00" width="7.55" height="11.35" fill="#c0a080"/><rect x="0.00" y="11.30" width="7.55" height="11.35" fill="#cc7050"/><rect x="7.50" y="11.30" width="7.55" height="11.35" fill="#d4b8a8"/><rect x="15.00" y="11.30" width="7.55" height="11.35" fill="#dc8850"/><rect x="22.50" y="11.30" width="7.55" height="11.35" fill="#dcc4a0"/><rect x="30.00" y="11.30" width="7.55" height="11.35" fill="#d4bca0"/><rect x="37.50" y="11.30" width="7.55" height="11.35" fill="#dcc4a8"/><rect x="45.00" y="11.30" width="7.55" height="11.35" fill="#d8c0a0"/><rect x="52.50" y="11.30" width="7.55" height="11.35" fill="#d8c4a4"/><rect x="0.00" y="22.60" width="7.55" height="11.35" fill="#b87a5a"/><rect x="7.50" y="22.60" width="7.55" height="11.35" fill="#b07060"/><rect x="15.00" y="22.60" width="7.55" height="11.35" fill="#c08050"/><rect x="22.50" y="22.60" width="7.55" height="11.35" fill="#ccaa90"/><rect x="30.00" y="22.60" width="7.55" height="11.35" fill="#d0aa98"/><rect x="37.50" y="22.60" width="7.55" height="11.35" fill="#c8a098"/><rect x="45.00" y="22.60" width="7.55" height="11.35" fill="#c89c98"/><rect x="52.50" y="22.60" width="7.55" height="11.35" fill="#c8d8e0"/><rect x="0.00" y="33.90" width="7.55" height="11.35" fill="#9494c8"/><rect x="7.50" y="33.90" width="7.55" height="11.35" fill="#b0b4b8"/><rect x="15.00" y="33.90" width="7.55" height="11.35" fill="#a8a098"/><rect x="22.50" y="33.90" width="7.55" height="11.35" fill="#a09c98"/><rect x="30.00" y="33.90" width="7.55" height="11.35" fill="#a89870"/><rect x="37.50" y="33.90" width="7.55" height="11.35" fill="#a0a098"/><rect x="45.00" y="33.90" width="7.55" height="11.35" fill="#b09088"/><rect x="52.50" y="33.90" width="7.55" height="11.35" fill="#806040"/></svg>
<svg class="a" style="left:87px;top:971.8px;" width="60" height="56.25" viewBox="0 0 60 56.25"><g transform="scale(0.10416666666666667)"><rect x="0" y="0" width="72" height="108" fill="#f8f8f8"/><rect x="9" y="8" width="22" height="22" fill="#1f1e2e"/><rect x="38" y="2" width="32" height="32" fill="#1f1e2e"/><rect x="9" y="44" width="56" height="56" fill="#1f1e2e"/><rect x="72" y="0" width="72" height="108" fill="#f8f8f8"/><rect x="81" y="8" width="22" height="22" fill="#1f1e2e"/><rect x="110" y="2" width="32" height="32" fill="#1f1e2e"/><rect x="81" y="44" width="56" height="56" fill="#1f1e2e"/><rect x="144" y="0" width="72" height="108" fill="#f8f8f8"/><rect x="153" y="8" width="22" height="22" fill="#1f1e2e"/><rect x="182" y="2" width="32" height="32" fill="#1f1e2e"/><rect x="153" y="44" width="56" height="56" fill="#1f1e2e"/><rect x="216" y="0" width="72" height="108" fill="#f8f8f8"/><rect x="225" y="8" width="22" height="22" fill="#1f1e2e"/><rect x="254" y="2" width="32" height="32" fill="#1f1e2e"/><rect x="225" y="44" width="56" height="56" fill="#1f1e2e"/><rect x="288" y="0" width="72" height="108" fill="#f8f8f8"/><rect x="297" y="8" width="22" height="22" fill="#1f1e2e"/><rect x="326" y="2" width="32" height="32" fill="#1f1e2e"/><rect x="297" y="44" width="56" height="56" fill="#1f1e2e"/><rect x="360" y="0" width="72" height="108" fill="#f8f8f8"/><rect x="369" y="8" width="22" height="22" fill="#1f1e2e"/><rect x="398" y="2" width="32" height="32" fill="#1f1e2e"/><rect x="369" y="44" width="56" height="56" fill="#1f1e2e"/><rect x="432" y="0" width="72" height="108" fill="#f8f8f8"/><rect x="441" y="8" width="22" height="22" fill="#1f1e2e"/><rect x="470" y="2" width="32" height="32" fill="#1f1e2e"/><rect x="441" y="44" width="56" height="56" fill="#1f1e2e"/><rect x="504" y="0" width="72" height="108" fill="#f8f8f8"/><rect x="513" y="8" width="22" height="22" fill="#1f1e2e"/><rect x="542" y="2" width="32" height="32" fill="#1f1e2e"/><rect x="513" y="44" width="56" height="56" fill="#1f1e2e"/><rect x="0" y="108" width="72" height="72" fill="#b0b0c2"/><rect x="72" y="108" width="72" height="72" fill="#c8c0a8"/><rect x="144" y="108" width="72" height="72" fill="#c86838"/><rect x="216" y="108" width="72" height="72" fill="#c88040"/><rect x="288" y="108" width="72" height="72" fill="#a87060"/><rect x="360" y="108" width="72" height="72" fill="#c8a888"/><rect x="432" y="108" width="72" height="72" fill="#c8a070"/><rect x="504" y="108" width="72" height="72" fill="#b08878"/><rect x="0" y="180" width="72" height="108" fill="#f8f8f8"/><rect x="9" y="188" width="22" height="22" fill="#1f1e2e"/><rect x="38" y="182" width="32" height="32" fill="#1f1e2e"/><rect x="9" y="224" width="56" height="56" fill="#1f1e2e"/><rect x="72" y="180" width="72" height="108" fill="#f8f8f8"/><rect x="81" y="188" width="22" height="22" fill="#1f1e2e"/><rect x="110" y="182" width="32" height="32" fill="#1f1e2e"/><rect x="81" y="224" width="56" height="56" fill="#1f1e2e"/><rect x="144" y="180" width="72" height="108" fill="#f8f8f8"/><rect x="153" y="188" width="22" height="22" fill="#1f1e2e"/><rect x="182" y="182" width="32" height="32" fill="#1f1e2e"/><rect x="153" y="224" width="56" height="56" fill="#1f1e2e"/><rect x="216" y="180" width="72" height="108" fill="#f8f8f8"/><rect x="225" y="188" width="22" height="22" fill="#1f1e2e"/><rect x="254" y="182" width="32" height="32" fill="#1f1e2e"/><rect x="225" y="224" width="56" height="56" fill="#1f1e2e"/><rect x="288" y="180" width="72" height="108" fill="#f8f8f8"/><rect x="297" y="188" width="22" height="22" fill="#1f1e2e"/><rect x="326" y="182" width="32" height="32" fill="#1f1e2e"/><rect x="297" y="224" width="56" height="56" fill="#1f1e2e"/><rect x="360" y="180" width="72" height="108" fill="#f8f8f8"/><rect x="369" y="188" width="22" height="22" fill="#1f1e2e"/><rect x="398" y="182" width="32" height="32" fill="#1f1e2e"/><rect x="369" y="224" width="56" height="56" fill="#1f1e2e"/><rect x="432" y="180" width="72" height="108" fill="#f8f8f8"/><rect x="441" y="188" width="22" height="22" fill="#1f1e2e"/><rect x="470" y="182" width="32" height="32" fill="#1f1e2e"/><rect x="441" y="224" width="56" height="56" fill="#1f1e2e"/><rect x="504" y="180" width="72" height="108" fill="#f8f8f8"/><rect x="513" y="188" width="22" height="22" fill="#1f1e2e"/><rect x="542" y="182" width="32" height="32" fill="#1f1e2e"/><rect x="513" y="224" width="56" height="56" fill="#1f1e2e"/><rect x="0" y="288" width="72" height="72" fill="#a07858"/><rect x="72" y="288" width="72" height="72" fill="#a0b0a0"/><rect x="144" y="288" width="72" height="72" fill="#d8d8b8"/><rect x="216" y="288" width="72" height="72" fill="#d0b090"/><rect x="288" y="288" width="72" height="72" fill="#e8e8f0"/><rect x="360" y="288" width="72" height="72" fill="#d0d0d0"/><rect x="432" y="288" width="72" height="72" fill="#d8d0c0"/><rect x="504" y="288" width="72" height="72" fill="#e0c8a8"/><rect x="0" y="360" width="72" height="108" fill="#f8f8f8"/><rect x="9" y="368" width="22" height="22" fill="#1f1e2e"/><rect x="38" y="362" width="32" height="32" fill="#1f1e2e"/><rect x="9" y="404" width="56" height="56" fill="#1f1e2e"/><rect x="72" y="360" width="72" height="108" fill="#f8f8f8"/><rect x="81" y="368" width="22" height="22" fill="#1f1e2e"/><rect x="110" y="362" width="32" height="32" fill="#1f1e2e"/><rect x="81" y="404" width="56" height="56" fill="#1f1e2e"/><rect x="144" y="360" width="72" height="108" fill="#f8f8f8"/><rect x="153" y="368" width="22" height="22" fill="#1f1e2e"/><rect x="182" y="362" width="32" height="32" fill="#1f1e2e"/><rect x="153" y="404" width="56" height="56" fill="#1f1e2e"/><rect x="216" y="360" width="72" height="108" fill="#f8f8f8"/><rect x="225" y="368" width="22" height="22" fill="#1f1e2e"/><rect x="254" y="362" width="32" height="32" fill="#1f1e2e"/><rect x="225" y="404" width="56" height="56" fill="#1f1e2e"/><rect x="288" y="360" width="72" height="108" fill="#f8f8f8"/><rect x="297" y="368" width="22" height="22" fill="#1f1e2e"/><rect x="326" y="362" width="32" height="32" fill="#1f1e2e"/><rect x="297" y="404" width="56" height="56" fill="#1f1e2e"/><rect x="360" y="360" width="72" height="108" fill="#f8f8f8"/><rect x="369" y="368" width="22" height="22" fill="#1f1e2e"/><rect x="398" y="362" width="32" height="32" fill="#1f1e2e"/><rect x="369" y="404" width="56" height="56" fill="#1f1e2e"/><rect x="432" y="360" width="72" height="108" fill="#f8f8f8"/><rect x="441" y="368" width="22" height="22" fill="#1f1e2e"/><rect x="470" y="362" width="32" height="32" fill="#1f1e2e"/><rect x="441" y="404" width="56" height="56" fill="#1f1e2e"/><rect x="504" y="360" width="72" height="108" fill="#f8f8f8"/><rect x="513" y="368" width="22" height="22" fill="#1f1e2e"/><rect x="542" y="362" width="32" height="32" fill="#1f1e2e"/><rect x="513" y="404" width="56" height="56" fill="#1f1e2e"/><rect x="0" y="468" width="72" height="40" fill="#e8d8a8"/><rect x="0" y="508" width="72" height="32" fill="#70a090"/><rect x="72" y="468" width="72" height="40" fill="#e8d8a8"/><rect x="72" y="508" width="72" height="32" fill="#70a090"/><rect x="144" y="468" width="72" height="72" fill="#c0d8a8"/><rect x="216" y="468" width="72" height="72" fill="#b8d8f0"/><rect x="288" y="468" width="72" height="72" fill="#b8d8f0"/></g></svg>
<svg class="a" style="left:87px;top:1041.5px;" width="60" height="56.25" viewBox="0 0 60 56.25"><g transform="scale(0.10416666666666667)"><rect x="0" y="0" width="72" height="108" fill="#f8f8f8"/><rect x="9" y="8" width="22" height="22" fill="#1f1e2e"/><rect x="38" y="2" width="32" height="32" fill="#1f1e2e"/><rect x="9" y="44" width="56" height="56" fill="#1f1e2e"/><rect x="72" y="0" width="72" height="108" fill="#f8f8f8"/><rect x="81" y="8" width="22" height="22" fill="#1f1e2e"/><rect x="110" y="2" width="32" height="32" fill="#1f1e2e"/><rect x="81" y="44" width="56" height="56" fill="#1f1e2e"/><rect x="144" y="0" width="72" height="108" fill="#f8f8f8"/><rect x="153" y="8" width="22" height="22" fill="#1f1e2e"/><rect x="182" y="2" width="32" height="32" fill="#1f1e2e"/><rect x="153" y="44" width="56" height="56" fill="#1f1e2e"/><rect x="216" y="0" width="72" height="108" fill="#f8f8f8"/><rect x="225" y="8" width="22" height="22" fill="#1f1e2e"/><rect x="254" y="2" width="32" height="32" fill="#1f1e2e"/><rect x="225" y="44" width="56" height="56" fill="#1f1e2e"/><rect x="288" y="0" width="72" height="108" fill="#f8f8f8"/><rect x="297" y="8" width="22" height="22" fill="#1f1e2e"/><rect x="326" y="2" width="32" height="32" fill="#1f1e2e"/><rect x="297" y="44" width="56" height="56" fill="#1f1e2e"/><rect x="360" y="0" width="72" height="108" fill="#f8f8f8"/><rect x="369" y="8" width="22" height="22" fill="#1f1e2e"/><rect x="398" y="2" width="32" height="32" fill="#1f1e2e"/><rect x="369" y="44" width="56" height="56" fill="#1f1e2e"/><rect x="432" y="0" width="72" height="108" fill="#f8f8f8"/><rect x="441" y="8" width="22" height="22" fill="#1f1e2e"/><rect x="470" y="2" width="32" height="32" fill="#1f1e2e"/><rect x="441" y="44" width="56" height="56" fill="#1f1e2e"/><rect x="504" y="0" width="72" height="108" fill="#f8f8f8"/><rect x="513" y="8" width="22" height="22" fill="#1f1e2e"/><rect x="542" y="2" width="32" height="32" fill="#1f1e2e"/><rect x="513" y="44" width="56" height="56" fill="#1f1e2e"/><rect x="0" y="108" width="72" height="40" fill="#f0e6a0"/><rect x="0" y="148" width="72" height="32" fill="#e08a5c"/><rect x="72" y="108" width="72" height="40" fill="#d3f4ec"/><rect x="72" y="148" width="72" height="32" fill="#ebc097"/><rect x="144" y="108" width="72" height="40" fill="#d08c6a"/><rect x="144" y="148" width="72" height="32" fill="#b44e58"/><rect x="216" y="108" width="72" height="40" fill="#8286c4"/><rect x="216" y="148" width="72" height="32" fill="#6a5aa2"/><rect x="288" y="108" width="72" height="72" fill="#f2d3b8"/><rect x="360" y="108" width="72" height="72" fill="#f3efe3"/><rect x="432" y="108" width="72" height="72" fill="#ecd590"/><rect x="504" y="108" width="72" height="72" fill="#c9aa88"/><rect x="0" y="180" width="72" height="108" fill="#f8f8f8"/><rect x="9" y="188" width="22" height="22" fill="#1f1e2e"/><rect x="38" y="182" width="32" height="32" fill="#1f1e2e"/><rect x="9" y="224" width="56" height="56" fill="#1f1e2e"/><rect x="72" y="180" width="72" height="108" fill="#f8f8f8"/><rect x="81" y="188" width="22" height="22" fill="#1f1e2e"/><rect x="110" y="182" width="32" height="32" fill="#1f1e2e"/><rect x="81" y="224" width="56" height="56" fill="#1f1e2e"/><rect x="144" y="180" width="72" height="108" fill="#f8f8f8"/><rect x="153" y="188" width="22" height="22" fill="#1f1e2e"/><rect x="182" y="182" width="32" height="32" fill="#1f1e2e"/><rect x="153" y="224" width="56" height="56" fill="#1f1e2e"/><rect x="216" y="180" width="72" height="108" fill="#f8f8f8"/><rect x="225" y="188" width="22" height="22" fill="#1f1e2e"/><rect x="254" y="182" width="32" height="32" fill="#1f1e2e"/><rect x="225" y="224" width="56" height="56" fill="#1f1e2e"/><rect x="288" y="180" width="72" height="108" fill="#f8f8f8"/><rect x="297" y="188" width="22" height="22" fill="#1f1e2e"/><rect x="326" y="182" width="32" height="32" fill="#1f1e2e"/><rect x="297" y="224" width="56" height="56" fill="#1f1e2e"/><rect x="360" y="180" width="72" height="108" fill="#f8f8f8"/><rect x="369" y="188" width="22" height="22" fill="#1f1e2e"/><rect x="398" y="182" width="32" height="32" fill="#1f1e2e"/><rect x="369" y="224" width="56" height="56" fill="#1f1e2e"/><rect x="432" y="180" width="72" height="108" fill="#f8f8f8"/><rect x="441" y="188" width="22" height="22" fill="#1f1e2e"/><rect x="470" y="182" width="32" height="32" fill="#1f1e2e"/><rect x="441" y="224" width="56" height="56" fill="#1f1e2e"/><rect x="504" y="180" width="72" height="108" fill="#f8f8f8"/><rect x="513" y="188" width="22" height="22" fill="#1f1e2e"/><rect x="542" y="182" width="32" height="32" fill="#1f1e2e"/><rect x="513" y="224" width="56" height="56" fill="#1f1e2e"/><rect x="0" y="288" width="72" height="72" fill="#c96858"/><rect x="72" y="288" width="72" height="72" fill="#8c6a58"/><rect x="144" y="288" width="72" height="72" fill="#c8783c"/><rect x="216" y="288" width="72" height="72" fill="#e2f2f4"/><rect x="288" y="288" width="72" height="72" fill="#e6d6b6"/><rect x="360" y="288" width="72" height="72" fill="#e6dbc4"/><rect x="432" y="288" width="72" height="72" fill="#c8dce8"/><rect x="504" y="288" width="72" height="72" fill="#d86868"/><rect x="0" y="360" width="72" height="108" fill="#f8f8f8"/><rect x="9" y="368" width="22" height="22" fill="#1f1e2e"/><rect x="38" y="362" width="32" height="32" fill="#1f1e2e"/><rect x="9" y="404" width="56" height="56" fill="#1f1e2e"/><rect x="72" y="360" width="72" height="108" fill="#f8f8f8"/><rect x="81" y="368" width="22" height="22" fill="#1f1e2e"/><rect x="110" y="362" width="32" height="32" fill="#1f1e2e"/><rect x="81" y="404" width="56" height="56" fill="#1f1e2e"/><rect x="144" y="360" width="72" height="108" fill="#f8f8f8"/><rect x="153" y="368" width="22" height="22" fill="#1f1e2e"/><rect x="182" y="362" width="32" height="32" fill="#1f1e2e"/><rect x="153" y="404" width="56" height="56" fill="#1f1e2e"/><rect x="216" y="360" width="72" height="108" fill="#f8f8f8"/><rect x="225" y="368" width="22" height="22" fill="#1f1e2e"/><rect x="254" y="362" width="32" height="32" fill="#1f1e2e"/><rect x="225" y="404" width="56" height="56" fill="#1f1e2e"/><rect x="288" y="360" width="72" height="108" fill="#f8f8f8"/><rect x="297" y="368" width="22" height="22" fill="#1f1e2e"/><rect x="326" y="362" width="32" height="32" fill="#1f1e2e"/><rect x="297" y="404" width="56" height="56" fill="#1f1e2e"/><rect x="360" y="360" width="72" height="108" fill="#f8f8f8"/><rect x="369" y="368" width="22" height="22" fill="#1f1e2e"/><rect x="398" y="362" width="32" height="32" fill="#1f1e2e"/><rect x="369" y="404" width="56" height="56" fill="#1f1e2e"/><rect x="432" y="360" width="72" height="108" fill="#f8f8f8"/><rect x="441" y="368" width="22" height="22" fill="#1f1e2e"/><rect x="470" y="362" width="32" height="32" fill="#1f1e2e"/><rect x="441" y="404" width="56" height="56" fill="#1f1e2e"/><rect x="504" y="360" width="72" height="108" fill="#f8f8f8"/><rect x="513" y="368" width="22" height="22" fill="#1f1e2e"/><rect x="542" y="362" width="32" height="32" fill="#1f1e2e"/><rect x="513" y="404" width="56" height="56" fill="#1f1e2e"/><rect x="0" y="468" width="72" height="72" fill="#7ab0e0"/><rect x="72" y="468" width="72" height="72" fill="#b07040"/><rect x="144" y="468" width="72" height="72" fill="#8a7a78"/><rect x="216" y="468" width="72" height="72" fill="#c08050"/><rect x="288" y="468" width="72" height="72" fill="#e0d0b0"/><rect x="360" y="468" width="72" height="72" fill="#c8a898"/><rect x="432" y="468" width="72" height="72" fill="#40a0a0"/><rect x="504" y="468" width="72" height="72" fill="#c05050"/></g></svg>
<div class="a" style="left:124.5px;top:1020.55px;width:22.5px;height:7.5px;background:#232831;"></div>
<svg class="a" style="left:369px;top:829px;" width="16" height="16" viewBox="0 0 16 16"><circle cx="8" cy="8" r="7.6" fill="#e6e6e6"/><rect x="4" y="6.9" width="8" height="2.3" fill="#232831"/></svg>
<div class="a" style="left:397.6px;top:831.66px;font-size:13.4px;line-height:1;color:#e6e6e6;font-weight:normal;white-space:nowrap;font-family:'Liberation Sans',sans-serif;">75.1 %</div>
<div class="a" style="left:454px;top:1249px;width:0px;height:0px;background:none;"></div>
<svg class="a" style="left:335px;top:1258px;" width="16" height="16" viewBox="0 0 16 16"><path d="M4 1v13M1 4l3-3 3 3M1 11l3 3 3-3" stroke="#e0e0e0" stroke-width="2" fill="none"/><path d="M8.5 2h6M8.5 6h4M8.5 10h2" stroke="#e0e0e0" stroke-width="2"/></svg>
<svg class="a" overflow="hidden" style="left:454px;top:821px;overflow:hidden" width="576" height="455" viewBox="0 0 576 455"><g transform="translate(0,-4)"><rect x="0" y="0" width="72" height="108" fill="#f8f8f8"/><rect x="7.2" y="7" width="22" height="22" fill="#1f1e2e"/><rect x="36.4" y="1" width="35.6" height="34.5" fill="#1f1e2e"/><rect x="37.3" y="1.4" width="5.8" height="6" fill="#f8f8f8"/><rect x="65.8" y="1.4" width="5.8" height="6" fill="#f8f8f8"/><rect x="37.3" y="29.1" width="5.8" height="6" fill="#f8f8f8"/><rect x="65.8" y="29.1" width="5.8" height="6" fill="#f8f8f8"/><rect x="36.4" y="35" width="35.6" height="0.9" fill="#2a2a3a"/><rect x="7.2" y="35.5" width="0.9" height="73" fill="#2a2a3a"/><rect x="7.2" y="43" width="64.8" height="0.9" fill="#2a2a3a"/><rect x="7.2" y="43.2" width="57.8" height="57.8" fill="#1f1e2e"/><rect x="7.2" y="101" width="57.8" height="0.9" fill="#2a2a3a"/><rect x="0.00" y="108.00" width="72.00" height="72.00" fill="#f0e6a0"/><rect x="0.00" y="148.80" width="72.00" height="1.40" fill="#e08460"/><rect x="0.00" y="160.00" width="72.00" height="5.00" fill="#e08a5c"/><rect x="0.00" y="166.50" width="72.00" height="8.50" fill="#e08a5c"/><rect x="0.00" y="175.00" width="72.00" height="2.00" fill="#7a7c84"/><rect x="0.00" y="177.00" width="72.00" height="3.00" fill="#3a3a4a"/><rect x="0" y="180" width="72" height="108" fill="#f8f8f8"/><rect x="7.2" y="187" width="22" height="22" fill="#1f1e2e"/><rect x="36.4" y="181" width="35.6" height="34.5" fill="#1f1e2e"/><rect x="37.3" y="181.4" width="5.8" height="6" fill="#f8f8f8"/><rect x="65.8" y="181.4" width="5.8" height="6" fill="#f8f8f8"/><rect x="37.3" y="209.1" width="5.8" height="6" fill="#f8f8f8"/><rect x="65.8" y="209.1" width="5.8" height="6" fill="#f8f8f8"/><rect x="36.4" y="215" width="35.6" height="0.9" fill="#2a2a3a"/><rect x="7.2" y="215.5" width="0.9" height="73" fill="#2a2a3a"/><rect x="7.2" y="223" width="64.8" height="0.9" fill="#2a2a3a"/><rect x="7.2" y="223.2" width="57.8" height="57.8" fill="#1f1e2e"/><rect x="7.2" y="281" width="57.8" height="0.9" fill="#2a2a3a"/><rect x="0.00" y="288.00" width="72.00" height="67.00" fill="#c96858"/><rect x="1.00" y="288.00" width="1.50" height="67.00" fill="#6a2a2a"/><rect x="10.00" y="288.00" width="1.50" height="67.00" fill="#6a2a2a"/><rect x="19.00" y="288.00" width="1.50" height="67.00" fill="#6a2a2a"/><rect x="28.00" y="288.00" width="1.50" height="67.00" fill="#6a2a2a"/><rect x="37.00" y="288.00" width="1.50" height="67.00" fill="#6a2a2a"/><rect x="46.00" y="288.00" width="1.50" height="67.00" fill="#6a2a2a"/><rect x="55.00" y="288.00" width="1.50" height="67.00" fill="#6a2a2a"/><rect x="64.00" y="288.00" width="1.50" height="67.00" fill="#6a2a2a"/><rect x="0.00" y="340.00" width="72.00" height="15.00" fill="rgba(160,70,90,0.35)"/><rect x="0.00" y="355.00" width="72.00" height="2.00" fill="#7a7c84"/><rect x="0.00" y="357.00" width="72.00" height="3.00" fill="#3a3a4a"/><rect x="0" y="360" width="72" height="108" fill="#f8f8f8"/><rect x="7.2" y="367" width="22" height="22" fill="#1f1e2e"/><rect x="36.4" y="361" width="35.6" height="34.5" fill="#1f1e2e"/><rect x="37.3" y="361.4" width="5.8" height="6" fill="#f8f8f8"/><rect x="65.8" y="361.4" width="5.8" height="6" fill="#f8f8f8"/><rect x="37.3" y="389.1" width="5.8" height="6" fill="#f8f8f8"/><rect x="65.8" y="389.1" width="5.8" height="6" fill="#f8f8f8"/><rect x="36.4" y="395" width="35.6" height="0.9" fill="#2a2a3a"/><rect x="7.2" y="395.5" width="0.9" height="73" fill="#2a2a3a"/><rect x="7.2" y="403" width="64.8" height="0.9" fill="#2a2a3a"/><rect x="7.2" y="403.2" width="57.8" height="57.8" fill="#1f1e2e"/><rect x="7.2" y="461" width="57.8" height="0.9" fill="#2a2a3a"/><rect x="72" y="0" width="72" height="108" fill="#f8f8f8"/><rect x="79.2" y="7" width="22" height="22" fill="#1f1e2e"/><rect x="108.4" y="1" width="35.6" height="34.5" fill="#1f1e2e"/><rect x="109.3" y="1.4" width="5.8" height="6" fill="#f8f8f8"/><rect x="137.8" y="1.4" width="5.8" height="6" fill="#f8f8f8"/><rect x="109.3" y="29.1" width="5.8" height="6" fill="#f8f8f8"/><rect x="137.8" y="29.1" width="5.8" height="6" fill="#f8f8f8"/><rect x="108.4" y="35" width="35.6" height="0.9" fill="#2a2a3a"/><rect x="79.2" y="35.5" width="0.9" height="73" fill="#2a2a3a"/><rect x="79.2" y="43" width="64.8" height="0.9" fill="#2a2a3a"/><rect x="79.2" y="43.2" width="57.8" height="57.8" fill="#1f1e2e"/><rect x="79.2" y="101" width="57.8" height="0.9" fill="#2a2a3a"/><rect x="72.00" y="108.00" width="72.00" height="72.00" fill="#d3f4ec"/><rect x="72.00" y="148.80" width="72.00" height="1.50" fill="#ebc097"/><rect x="72.00" y="160.00" width="72.00" height="3.50" fill="#ebc097"/><rect x="72.00" y="165.00" width="72.00" height="10.00" fill="#ebc097"/><rect x="74.00" y="152.00" width="2.00" height="7.00" fill="#ebc097"/><rect x="74.00" y="152.00" width="8.00" height="2.00" fill="#ebc097"/><rect x="78.00" y="155.00" width="6.00" height="2.00" fill="#ebc097"/><rect x="78.00" y="157.00" width="2.00" height="2.00" fill="#ebc097"/><rect x="92.00" y="152.00" width="2.00" height="7.00" fill="#ebc097"/><rect x="92.00" y="152.00" width="8.00" height="2.00" fill="#ebc097"/><rect x="96.00" y="155.00" width="6.00" height="2.00" fill="#ebc097"/><rect x="96.00" y="157.00" width="2.00" height="2.00" fill="#ebc097"/><rect x="110.00" y="152.00" width="2.00" height="7.00" fill="#ebc097"/><rect x="110.00" y="152.00" width="8.00" height="2.00" fill="#ebc097"/><rect x="114.00" y="155.00" width="6.00" height="2.00" fill="#ebc097"/><rect x="114.00" y="157.00" width="2.00" height="2.00" fill="#ebc097"/><rect x="128.00" y="152.00" width="2.00" height="7.00" fill="#ebc097"/><rect x="128.00" y="152.00" width="8.00" height="2.00" fill="#ebc097"/><rect x="132.00" y="155.00" width="6.00" height="2.00" fill="#ebc097"/><rect x="132.00" y="157.00" width="2.00" height="2.00" fill="#ebc097"/><rect x="72.00" y="175.00" width="72.00" height="2.00" fill="#7a7c84"/><rect x="72.00" y="177.00" width="72.00" height="3.00" fill="#3a3a4a"/><rect x="72" y="180" width="72" height="108" fill="#f8f8f8"/><rect x="79.2" y="187" width="22" height="22" fill="#1f1e2e"/><rect x="108.4" y="181" width="35.6" height="34.5" fill="#1f1e2e"/><rect x="109.3" y="181.4" width="5.8" height="6" fill="#f8f8f8"/><rect x="137.8" y="181.4" width="5.8" height="6" fill="#f8f8f8"/><rect x="109.3" y="209.1" width="5.8" height="6" fill="#f8f8f8"/><rect x="137.8" y="209.1" width="5.8" height="6" fill="#f8f8f8"/><rect x="108.4" y="215" width="35.6" height="0.9" fill="#2a2a3a"/><rect x="79.2" y="215.5" width="0.9" height="73" fill="#2a2a3a"/><rect x="79.2" y="223" width="64.8" height="0.9" fill="#2a2a3a"/><rect x="79.2" y="223.2" width="57.8" height="57.8" fill="#1f1e2e"/><rect x="79.2" y="281" width="57.8" height="0.9" fill="#2a2a3a"/><rect x="72.00" y="288.00" width="72.00" height="67.00" fill="#8c6a58"/><rect x="78.00" y="288.00" width="25.00" height="67.00" fill="#5c4438"/><rect x="79.00" y="290.00" width="23.00" height="3.30" fill="#c8aa88"/><rect x="79.00" y="296.50" width="23.00" height="3.30" fill="#c8aa88"/><rect x="79.00" y="303.00" width="23.00" height="3.30" fill="#c8aa88"/><rect x="79.00" y="309.50" width="23.00" height="3.30" fill="#c8aa88"/><rect x="79.00" y="316.00" width="23.00" height="3.30" fill="#c8aa88"/><rect x="79.00" y="322.50" width="23.00" height="3.30" fill="#c8aa88"/><rect x="79.00" y="329.00" width="23.00" height="3.30" fill="#c8aa88"/><rect x="79.00" y="335.50" width="23.00" height="3.30" fill="#c8aa88"/><rect x="79.00" y="342.00" width="23.00" height="3.30" fill="#c8aa88"/><rect x="79.00" y="348.50" width="23.00" height="3.30" fill="#c8aa88"/><rect x="73.00" y="288.00" width="4.00" height="67.00" fill="#c8aa88"/><rect x="114.00" y="288.00" width="25.00" height="67.00" fill="#5c4438"/><rect x="115.00" y="290.00" width="23.00" height="3.30" fill="#c8aa88"/><rect x="115.00" y="296.50" width="23.00" height="3.30" fill="#c8aa88"/><rect x="115.00" y="303.00" width="23.00" height="3.30" fill="#c8aa88"/><rect x="115.00" y="309.50" width="23.00" height="3.30" fill="#c8aa88"/><rect x="115.00" y="316.00" width="23.00" height="3.30" fill="#c8aa88"/><rect x="115.00" y="322.50" width="23.00" height="3.30" fill="#c8aa88"/><rect x="115.00" y="329.00" width="23.00" height="3.30" fill="#c8aa88"/><rect x="115.00" y="335.50" width="23.00" height="3.30" fill="#c8aa88"/><rect x="115.00" y="342.00" width="23.00" height="3.30" fill="#c8aa88"/><rect x="115.00" y="348.50" width="23.00" height="3.30" fill="#c8aa88"/><rect x="109.00" y="288.00" width="4.00" height="67.00" fill="#c8aa88"/><rect x="72.00" y="355.00" width="72.00" height="2.00" fill="#7a7c84"/><rect x="72.00" y="357.00" width="72.00" height="3.00" fill="#3a3a4a"/><rect x="72" y="360" width="72" height="108" fill="#f8f8f8"/><rect x="79.2" y="367" width="22" height="22" fill="#1f1e2e"/><rect x="108.4" y="361" width="35.6" height="34.5" fill="#1f1e2e"/><rect x="109.3" y="361.4" width="5.8" height="6" fill="#f8f8f8"/><rect x="137.8" y="361.4" width="5.8" height="6" fill="#f8f8f8"/><rect x="109.3" y="389.1" width="5.8" height="6" fill="#f8f8f8"/><rect x="137.8" y="389.1" width="5.8" height="6" fill="#f8f8f8"/><rect x="108.4" y="395" width="35.6" height="0.9" fill="#2a2a3a"/><rect x="79.2" y="395.5" width="0.9" height="73" fill="#2a2a3a"/><rect x="79.2" y="403" width="64.8" height="0.9" fill="#2a2a3a"/><rect x="79.2" y="403.2" width="57.8" height="57.8" fill="#1f1e2e"/><rect x="79.2" y="461" width="57.8" height="0.9" fill="#2a2a3a"/><rect x="144" y="0" width="72" height="108" fill="#f8f8f8"/><rect x="151.2" y="7" width="22" height="22" fill="#1f1e2e"/><rect x="180.4" y="1" width="35.6" height="34.5" fill="#1f1e2e"/><rect x="181.3" y="1.4" width="5.8" height="6" fill="#f8f8f8"/><rect x="209.8" y="1.4" width="5.8" height="6" fill="#f8f8f8"/><rect x="181.3" y="29.1" width="5.8" height="6" fill="#f8f8f8"/><rect x="209.8" y="29.1" width="5.8" height="6" fill="#f8f8f8"/><rect x="180.4" y="35" width="35.6" height="0.9" fill="#2a2a3a"/><rect x="151.2" y="35.5" width="0.9" height="73" fill="#2a2a3a"/><rect x="151.2" y="43" width="64.8" height="0.9" fill="#2a2a3a"/><rect x="151.2" y="43.2" width="57.8" height="57.8" fill="#1f1e2e"/><rect x="151.2" y="101" width="57.8" height="0.9" fill="#2a2a3a"/><rect x="144.00" y="108.00" width="72.00" height="72.00" fill="#d08c6a"/><rect x="144.00" y="148.80" width="72.00" height="1.60" fill="#b85060"/><rect x="144.00" y="160.00" width="72.00" height="5.00" fill="#b44e58"/><rect x="144.00" y="166.50" width="72.00" height="8.50" fill="#b44e58"/><rect x="147.00" y="151.00" width="2.50" height="9.00" fill="#b85060"/><rect x="154.00" y="151.00" width="2.50" height="9.00" fill="#b85060"/><rect x="168.00" y="151.00" width="2.50" height="9.00" fill="#b85060"/><rect x="175.00" y="151.00" width="2.50" height="9.00" fill="#b85060"/><rect x="189.00" y="151.00" width="2.50" height="9.00" fill="#b85060"/><rect x="196.00" y="151.00" width="2.50" height="9.00" fill="#b85060"/><rect x="210.00" y="151.00" width="2.50" height="9.00" fill="#b85060"/><rect x="160.00" y="154.00" width="5.00" height="3.50" fill="#b85060"/><rect x="197.00" y="154.00" width="5.00" height="3.50" fill="#b85060"/><rect x="144.00" y="175.00" width="72.00" height="2.00" fill="#7a7c84"/><rect x="144.00" y="177.00" width="72.00" height="3.00" fill="#3a3a4a"/><rect x="144" y="180" width="72" height="108" fill="#f8f8f8"/><rect x="151.2" y="187" width="22" height="22" fill="#1f1e2e"/><rect x="180.4" y="181" width="35.6" height="34.5" fill="#1f1e2e"/><rect x="181.3" y="181.4" width="5.8" height="6" fill="#f8f8f8"/><rect x="209.8" y="181.4" width="5.8" height="6" fill="#f8f8f8"/><rect x="181.3" y="209.1" width="5.8" height="6" fill="#f8f8f8"/><rect x="209.8" y="209.1" width="5.8" height="6" fill="#f8f8f8"/><rect x="180.4" y="215" width="35.6" height="0.9" fill="#2a2a3a"/><rect x="151.2" y="215.5" width="0.9" height="73" fill="#2a2a3a"/><rect x="151.2" y="223" width="64.8" height="0.9" fill="#2a2a3a"/><rect x="151.2" y="223.2" width="57.8" height="57.8" fill="#1f1e2e"/><rect x="151.2" y="281" width="57.8" height="0.9" fill="#2a2a3a"/><rect x="144.00" y="288.00" width="72.00" height="67.00" fill="#c8783c"/><rect x="150.00" y="288.00" width="25.00" height="67.00" fill="#4c3420"/><rect x="151.00" y="290.00" width="23.00" height="3.30" fill="#d8904c"/><rect x="151.00" y="296.50" width="23.00" height="3.30" fill="#d8904c"/><rect x="151.00" y="303.00" width="23.00" height="3.30" fill="#d8904c"/><rect x="151.00" y="309.50" width="23.00" height="3.30" fill="#d8904c"/><rect x="151.00" y="316.00" width="23.00" height="3.30" fill="#d8904c"/><rect x="151.00" y="322.50" width="23.00" height="3.30" fill="#d8904c"/><rect x="151.00" y="329.00" width="23.00" height="3.30" fill="#d8904c"/><rect x="151.00" y="335.50" width="23.00" height="3.30" fill="#d8904c"/><rect x="151.00" y="342.00" width="23.00" height="3.30" fill="#d8904c"/><rect x="151.00" y="348.50" width="23.00" height="3.30" fill="#d8904c"/><rect x="145.00" y="288.00" width="4.00" height="67.00" fill="#d8904c"/><rect x="186.00" y="288.00" width="25.00" height="67.00" fill="#4c3420"/><rect x="187.00" y="290.00" width="23.00" height="3.30" fill="#d8904c"/><rect x="187.00" y="296.50" width="23.00" height="3.30" fill="#d8904c"/><rect x="187.00" y="303.00" width="23.00" height="3.30" fill="#d8904c"/><rect x="187.00" y="309.50" width="23.00" height="3.30" fill="#d8904c"/><rect x="187.00" y="316.00" width="23.00" height="3.30" fill="#d8904c"/><rect x="187.00" y="322.50" width="23.00" height="3.30" fill="#d8904c"/><rect x="187.00" y="329.00" width="23.00" height="3.30" fill="#d8904c"/><rect x="187.00" y="335.50" width="23.00" height="3.30" fill="#d8904c"/><rect x="187.00" y="342.00" width="23.00" height="3.30" fill="#d8904c"/><rect x="187.00" y="348.50" width="23.00" height="3.30" fill="#d8904c"/><rect x="181.00" y="288.00" width="4.00" height="67.00" fill="#d8904c"/><rect x="144.00" y="355.00" width="72.00" height="2.00" fill="#7a7c84"/><rect x="144.00" y="357.00" width="72.00" height="3.00" fill="#3a3a4a"/><rect x="144" y="360" width="72" height="108" fill="#f8f8f8"/><rect x="151.2" y="367" width="22" height="22" fill="#1f1e2e"/><rect x="180.4" y="361" width="35.6" height="34.5" fill="#1f1e2e"/><rect x="181.3" y="361.4" width="5.8" height="6" fill="#f8f8f8"/><rect x="209.8" y="361.4" width="5.8" height="6" fill="#f8f8f8"/><rect x="181.3" y="389.1" width="5.8" height="6" fill="#f8f8f8"/><rect x="209.8" y="389.1" width="5.8" height="6" fill="#f8f8f8"/><rect x="180.4" y="395" width="35.6" height="0.9" fill="#2a2a3a"/><rect x="151.2" y="395.5" width="0.9" height="73" fill="#2a2a3a"/><rect x="151.2" y="403" width="64.8" height="0.9" fill="#2a2a3a"/><rect x="151.2" y="403.2" width="57.8" height="57.8" fill="#1f1e2e"/><rect x="151.2" y="461" width="57.8" height="0.9" fill="#2a2a3a"/><rect x="216" y="0" width="72" height="108" fill="#f8f8f8"/><rect x="223.2" y="7" width="22" height="22" fill="#1f1e2e"/><rect x="252.4" y="1" width="35.6" height="34.5" fill="#1f1e2e"/><rect x="253.3" y="1.4" width="5.8" height="6" fill="#f8f8f8"/><rect x="281.8" y="1.4" width="5.8" height="6" fill="#f8f8f8"/><rect x="253.3" y="29.1" width="5.8" height="6" fill="#f8f8f8"/><rect x="281.8" y="29.1" width="5.8" height="6" fill="#f8f8f8"/><rect x="252.4" y="35" width="35.6" height="0.9" fill="#2a2a3a"/><rect x="223.2" y="35.5" width="0.9" height="73" fill="#2a2a3a"/><rect x="223.2" y="43" width="64.8" height="0.9" fill="#2a2a3a"/><rect x="223.2" y="43.2" width="57.8" height="57.8" fill="#1f1e2e"/><rect x="223.2" y="101" width="57.8" height="0.9" fill="#2a2a3a"/><rect x="216.00" y="108.00" width="72.00" height="72.00" fill="#8286c4"/><rect x="216.00" y="148.00" width="72.00" height="1.60" fill="#6a5aa2"/><rect x="216.00" y="160.00" width="72.00" height="5.00" fill="#6a5aa2"/><rect x="216.00" y="166.50" width="72.00" height="8.50" fill="#6a5aa2"/><rect x="228.00" y="153.00" width="6.00" height="5.00" fill="#6a5aa2"/><rect x="224.00" y="155.00" width="3.00" height="2.00" fill="#6a5aa2"/><rect x="236.00" y="153.00" width="2.00" height="3.00" fill="#6a5aa2"/><rect x="264.00" y="153.00" width="6.00" height="5.00" fill="#6a5aa2"/><rect x="260.00" y="155.00" width="3.00" height="2.00" fill="#6a5aa2"/><rect x="272.00" y="153.00" width="2.00" height="3.00" fill="#6a5aa2"/><rect x="216.00" y="175.00" width="72.00" height="2.00" fill="#7a7c84"/><rect x="216.00" y="177.00" width="72.00" height="3.00" fill="#3a3a4a"/><rect x="216" y="180" width="72" height="108" fill="#f8f8f8"/><rect x="223.2" y="187" width="22" height="22" fill="#1f1e2e"/><rect x="252.4" y="181" width="35.6" height="34.5" fill="#1f1e2e"/><rect x="253.3" y="181.4" width="5.8" height="6" fill="#f8f8f8"/><rect x="281.8" y="181.4" width="5.8" height="6" fill="#f8f8f8"/><rect x="253.3" y="209.1" width="5.8" height="6" fill="#f8f8f8"/><rect x="281.8" y="209.1" width="5.8" height="6" fill="#f8f8f8"/><rect x="252.4" y="215" width="35.6" height="0.9" fill="#2a2a3a"/><rect x="223.2" y="215.5" width="0.9" height="73" fill="#2a2a3a"/><rect x="223.2" y="223" width="64.8" height="0.9" fill="#2a2a3a"/><rect x="223.2" y="223.2" width="57.8" height="57.8" fill="#1f1e2e"/><rect x="223.2" y="281" width="57.8" height="0.9" fill="#2a2a3a"/><rect x="216.00" y="288.00" width="72.00" height="67.00" fill="#a8b8d8"/><rect x="216.00" y="288.00" width="72.00" height="2.50" fill="#a0a8c8"/><rect x="218.00" y="291.00" width="14.50" height="14.50" fill="#e2f2f4"/><rect x="236.00" y="291.00" width="14.50" height="14.50" fill="#e2f2f4"/><rect x="254.00" y="291.00" width="14.50" height="14.50" fill="#e2f2f4"/><rect x="272.00" y="291.00" width="14.50" height="14.50" fill="#e2f2f4"/><rect x="218.00" y="309.00" width="14.50" height="14.50" fill="#e2f2f4"/><rect x="236.00" y="309.00" width="14.50" height="14.50" fill="#e2f2f4"/><rect x="254.00" y="309.00" width="14.50" height="14.50" fill="#e2f2f4"/><rect x="272.00" y="309.00" width="14.50" height="14.50" fill="#e2f2f4"/><rect x="218.00" y="327.00" width="14.50" height="14.50" fill="#e2f2f4"/><rect x="236.00" y="327.00" width="14.50" height="14.50" fill="#e2f2f4"/><rect x="254.00" y="327.00" width="14.50" height="14.50" fill="#e2f2f4"/><rect x="272.00" y="327.00" width="14.50" height="14.50" fill="#e2f2f4"/><rect x="218.00" y="345.00" width="14.50" height="14.50" fill="#e2f2f4"/><rect x="236.00" y="345.00" width="14.50" height="14.50" fill="#e2f2f4"/><rect x="254.00" y="345.00" width="14.50" height="14.50" fill="#e2f2f4"/><rect x="272.00" y="345.00" width="14.50" height="14.50" fill="#e2f2f4"/><rect x="216.00" y="355.00" width="72.00" height="2.00" fill="#7a7c84"/><rect x="216.00" y="357.00" width="72.00" height="3.00" fill="#3a3a4a"/><rect x="216" y="360" width="72" height="108" fill="#f8f8f8"/><rect x="223.2" y="367" width="22" height="22" fill="#1f1e2e"/><rect x="252.4" y="361" width="35.6" height="34.5" fill="#1f1e2e"/><rect x="253.3" y="361.4" width="5.8" height="6" fill="#f8f8f8"/><rect x="281.8" y="361.4" width="5.8" height="6" fill="#f8f8f8"/><rect x="253.3" y="389.1" width="5.8" height="6" fill="#f8f8f8"/><rect x="281.8" y="389.1" width="5.8" height="6" fill="#f8f8f8"/><rect x="252.4" y="395" width="35.6" height="0.9" fill="#2a2a3a"/><rect x="223.2" y="395.5" width="0.9" height="73" fill="#2a2a3a"/><rect x="223.2" y="403" width="64.8" height="0.9" fill="#2a2a3a"/><rect x="223.2" y="403.2" width="57.8" height="57.8" fill="#1f1e2e"/><rect x="223.2" y="461" width="57.8" height="0.9" fill="#2a2a3a"/><rect x="288" y="0" width="72" height="108" fill="#f8f8f8"/><rect x="295.2" y="7" width="22" height="22" fill="#1f1e2e"/><rect x="324.4" y="1" width="35.6" height="34.5" fill="#1f1e2e"/><rect x="325.3" y="1.4" width="5.8" height="6" fill="#f8f8f8"/><rect x="353.8" y="1.4" width="5.8" height="6" fill="#f8f8f8"/><rect x="325.3" y="29.1" width="5.8" height="6" fill="#f8f8f8"/><rect x="353.8" y="29.1" width="5.8" height="6" fill="#f8f8f8"/><rect x="324.4" y="35" width="35.6" height="0.9" fill="#2a2a3a"/><rect x="295.2" y="35.5" width="0.9" height="73" fill="#2a2a3a"/><rect x="295.2" y="43" width="64.8" height="0.9" fill="#2a2a3a"/><rect x="295.2" y="43.2" width="57.8" height="57.8" fill="#1f1e2e"/><rect x="295.2" y="101" width="57.8" height="0.9" fill="#2a2a3a"/><rect x="288.00" y="108.00" width="72.00" height="67.00" fill="#f2d3b8"/><rect x="289.50" y="108.00" width="1.60" height="53.00" fill="#c9a08e"/><rect x="295.50" y="108.00" width="1.60" height="53.00" fill="#c9a08e"/><rect x="301.50" y="108.00" width="1.60" height="53.00" fill="#c9a08e"/><rect x="307.50" y="108.00" width="1.60" height="53.00" fill="#c9a08e"/><rect x="313.50" y="108.00" width="1.60" height="53.00" fill="#c9a08e"/><rect x="319.50" y="108.00" width="1.60" height="53.00" fill="#c9a08e"/><rect x="325.50" y="108.00" width="1.60" height="53.00" fill="#c9a08e"/><rect x="331.50" y="108.00" width="1.60" height="53.00" fill="#c9a08e"/><rect x="337.50" y="108.00" width="1.60" height="53.00" fill="#c9a08e"/><rect x="343.50" y="108.00" width="1.60" height="53.00" fill="#c9a08e"/><rect x="349.50" y="108.00" width="1.60" height="53.00" fill="#c9a08e"/><rect x="355.50" y="108.00" width="1.60" height="53.00" fill="#c9a08e"/><rect x="288.00" y="161.00" width="72.00" height="2.00" fill="#c9a08e"/><rect x="288.00" y="166.00" width="72.00" height="2.00" fill="#c9a08e"/><rect x="288.00" y="170.00" width="72.00" height="5.00" fill="#d4a898"/><rect x="288.00" y="175.00" width="72.00" height="2.00" fill="#7a7c84"/><rect x="288.00" y="177.00" width="72.00" height="3.00" fill="#3a3a4a"/><rect x="288" y="180" width="72" height="108" fill="#f8f8f8"/><rect x="295.2" y="187" width="22" height="22" fill="#1f1e2e"/><rect x="324.4" y="181" width="35.6" height="34.5" fill="#1f1e2e"/><rect x="325.3" y="181.4" width="5.8" height="6" fill="#f8f8f8"/><rect x="353.8" y="181.4" width="5.8" height="6" fill="#f8f8f8"/><rect x="325.3" y="209.1" width="5.8" height="6" fill="#f8f8f8"/><rect x="353.8" y="209.1" width="5.8" height="6" fill="#f8f8f8"/><rect x="324.4" y="215" width="35.6" height="0.9" fill="#2a2a3a"/><rect x="295.2" y="215.5" width="0.9" height="73" fill="#2a2a3a"/><rect x="295.2" y="223" width="64.8" height="0.9" fill="#2a2a3a"/><rect x="295.2" y="223.2" width="57.8" height="57.8" fill="#1f1e2e"/><rect x="295.2" y="281" width="57.8" height="0.9" fill="#2a2a3a"/><rect x="288.00" y="288.00" width="72.00" height="67.00" fill="#d8c098"/><rect x="289.50" y="286.00" width="15.00" height="6.50" fill="#eadfc8"/><rect x="307.50" y="286.00" width="15.00" height="6.50" fill="#e6d6b6"/><rect x="325.50" y="286.00" width="15.00" height="6.50" fill="#e6d6b6"/><rect x="343.50" y="286.00" width="15.00" height="6.50" fill="#eadfc8"/><rect x="361.50" y="286.00" width="15.00" height="6.50" fill="#e6d6b6"/><rect x="280.50" y="295.00" width="15.00" height="6.50" fill="#e6d6b6"/><rect x="298.50" y="295.00" width="15.00" height="6.50" fill="#e6d6b6"/><rect x="316.50" y="295.00" width="15.00" height="6.50" fill="#eadfc8"/><rect x="334.50" y="295.00" width="15.00" height="6.50" fill="#e6d6b6"/><rect x="352.50" y="295.00" width="15.00" height="6.50" fill="#e6d6b6"/><rect x="289.50" y="304.00" width="15.00" height="6.50" fill="#e6d6b6"/><rect x="307.50" y="304.00" width="15.00" height="6.50" fill="#eadfc8"/><rect x="325.50" y="304.00" width="15.00" height="6.50" fill="#e6d6b6"/><rect x="343.50" y="304.00" width="15.00" height="6.50" fill="#e6d6b6"/><rect x="361.50" y="304.00" width="15.00" height="6.50" fill="#eadfc8"/><rect x="280.50" y="313.00" width="15.00" height="6.50" fill="#eadfc8"/><rect x="298.50" y="313.00" width="15.00" height="6.50" fill="#e6d6b6"/><rect x="316.50" y="313.00" width="15.00" height="6.50" fill="#e6d6b6"/><rect x="334.50" y="313.00" width="15.00" height="6.50" fill="#eadfc8"/><rect x="352.50" y="313.00" width="15.00" height="6.50" fill="#e6d6b6"/><rect x="289.50" y="322.00" width="15.00" height="6.50" fill="#e6d6b6"/><rect x="307.50" y="322.00" width="15.00" height="6.50" fill="#e6d6b6"/><rect x="325.50" y="322.00" width="15.00" height="6.50" fill="#eadfc8"/><rect x="343.50" y="322.00" width="15.00" height="6.50" fill="#e6d6b6"/><rect x="361.50" y="322.00" width="15.00" height="6.50" fill="#e6d6b6"/><rect x="280.50" y="331.00" width="15.00" height="6.50" fill="#e6d6b6"/><rect x="298.50" y="331.00" width="15.00" height="6.50" fill="#eadfc8"/><rect x="316.50" y="331.00" width="15.00" height="6.50" fill="#e6d6b6"/><rect x="334.50" y="331.00" width="15.00" height="6.50" fill="#e6d6b6"/><rect x="352.50" y="331.00" width="15.00" height="6.50" fill="#eadfc8"/><rect x="289.50" y="340.00" width="15.00" height="6.50" fill="#eadfc8"/><rect x="307.50" y="340.00" width="15.00" height="6.50" fill="#e6d6b6"/><rect x="325.50" y="340.00" width="15.00" height="6.50" fill="#e6d6b6"/><rect x="343.50" y="340.00" width="15.00" height="6.50" fill="#eadfc8"/><rect x="361.50" y="340.00" width="15.00" height="6.50" fill="#e6d6b6"/><rect x="280.50" y="349.00" width="15.00" height="6.50" fill="#e6d6b6"/><rect x="298.50" y="349.00" width="15.00" height="6.50" fill="#e6d6b6"/><rect x="316.50" y="349.00" width="15.00" height="6.50" fill="#eadfc8"/><rect x="334.50" y="349.00" width="15.00" height="6.50" fill="#e6d6b6"/><rect x="352.50" y="349.00" width="15.00" height="6.50" fill="#e6d6b6"/><rect x="288.00" y="355.00" width="72.00" height="2.00" fill="#7a7c84"/><rect x="288.00" y="357.00" width="72.00" height="3.00" fill="#3a3a4a"/><rect x="288" y="360" width="72" height="108" fill="#f8f8f8"/><rect x="295.2" y="367" width="22" height="22" fill="#1f1e2e"/><rect x="324.4" y="361" width="35.6" height="34.5" fill="#1f1e2e"/><rect x="325.3" y="361.4" width="5.8" height="6" fill="#f8f8f8"/><rect x="353.8" y="361.4" width="5.8" height="6" fill="#f8f8f8"/><rect x="325.3" y="389.1" width="5.8" height="6" fill="#f8f8f8"/><rect x="353.8" y="389.1" width="5.8" height="6" fill="#f8f8f8"/><rect x="324.4" y="395" width="35.6" height="0.9" fill="#2a2a3a"/><rect x="295.2" y="395.5" width="0.9" height="73" fill="#2a2a3a"/><rect x="295.2" y="403" width="64.8" height="0.9" fill="#2a2a3a"/><rect x="295.2" y="403.2" width="57.8" height="57.8" fill="#1f1e2e"/><rect x="295.2" y="461" width="57.8" height="0.9" fill="#2a2a3a"/><rect x="360" y="0" width="72" height="108" fill="#f8f8f8"/><rect x="367.2" y="7" width="22" height="22" fill="#1f1e2e"/><rect x="396.4" y="1" width="35.6" height="34.5" fill="#1f1e2e"/><rect x="397.3" y="1.4" width="5.8" height="6" fill="#f8f8f8"/><rect x="425.8" y="1.4" width="5.8" height="6" fill="#f8f8f8"/><rect x="397.3" y="29.1" width="5.8" height="6" fill="#f8f8f8"/><rect x="425.8" y="29.1" width="5.8" height="6" fill="#f8f8f8"/><rect x="396.4" y="35" width="35.6" height="0.9" fill="#2a2a3a"/><rect x="367.2" y="35.5" width="0.9" height="73" fill="#2a2a3a"/><rect x="367.2" y="43" width="64.8" height="0.9" fill="#2a2a3a"/><rect x="367.2" y="43.2" width="57.8" height="57.8" fill="#1f1e2e"/><rect x="367.2" y="101" width="57.8" height="0.9" fill="#2a2a3a"/><rect x="360.00" y="108.00" width="72.00" height="67.00" fill="#f3efe3"/><rect x="360.00" y="166.00" width="72.00" height="1.60" fill="#b8b0a0"/><rect x="360.00" y="169.00" width="72.00" height="6.00" fill="#e0d8c8"/><rect x="360.00" y="175.00" width="72.00" height="2.00" fill="#7a7c84"/><rect x="360.00" y="177.00" width="72.00" height="3.00" fill="#3a3a4a"/><rect x="360" y="180" width="72" height="108" fill="#f8f8f8"/><rect x="367.2" y="187" width="22" height="22" fill="#1f1e2e"/><rect x="396.4" y="181" width="35.6" height="34.5" fill="#1f1e2e"/><rect x="397.3" y="181.4" width="5.8" height="6" fill="#f8f8f8"/><rect x="425.8" y="181.4" width="5.8" height="6" fill="#f8f8f8"/><rect x="397.3" y="209.1" width="5.8" height="6" fill="#f8f8f8"/><rect x="425.8" y="209.1" width="5.8" height="6" fill="#f8f8f8"/><rect x="396.4" y="215" width="35.6" height="0.9" fill="#2a2a3a"/><rect x="367.2" y="215.5" width="0.9" height="73" fill="#2a2a3a"/><rect x="367.2" y="223" width="64.8" height="0.9" fill="#2a2a3a"/><rect x="367.2" y="223.2" width="57.8" height="57.8" fill="#1f1e2e"/><rect x="367.2" y="281" width="57.8" height="0.9" fill="#2a2a3a"/><rect x="360.00" y="288.00" width="72.00" height="67.00" fill="#e6dbc4"/><rect x="360.00" y="355.00" width="72.00" height="2.00" fill="#7a7c84"/><rect x="360.00" y="357.00" width="72.00" height="3.00" fill="#3a3a4a"/><rect x="360" y="360" width="72" height="108" fill="#f8f8f8"/><rect x="367.2" y="367" width="22" height="22" fill="#1f1e2e"/><rect x="396.4" y="361" width="35.6" height="34.5" fill="#1f1e2e"/><rect x="397.3" y="361.4" width="5.8" height="6" fill="#f8f8f8"/><rect x="425.8" y="361.4" width="5.8" height="6" fill="#f8f8f8"/><rect x="397.3" y="389.1" width="5.8" height="6" fill="#f8f8f8"/><rect x="425.8" y="389.1" width="5.8" height="6" fill="#f8f8f8"/><rect x="396.4" y="395" width="35.6" height="0.9" fill="#2a2a3a"/><rect x="367.2" y="395.5" width="0.9" height="73" fill="#2a2a3a"/><rect x="367.2" y="403" width="64.8" height="0.9" fill="#2a2a3a"/><rect x="367.2" y="403.2" width="57.8" height="57.8" fill="#1f1e2e"/><rect x="367.2" y="461" width="57.8" height="0.9" fill="#2a2a3a"/><rect x="432" y="0" width="72" height="108" fill="#f8f8f8"/><rect x="439.2" y="7" width="22" height="22" fill="#1f1e2e"/><rect x="468.4" y="1" width="35.6" height="34.5" fill="#1f1e2e"/><rect x="469.3" y="1.4" width="5.8" height="6" fill="#f8f8f8"/><rect x="497.8" y="1.4" width="5.8" height="6" fill="#f8f8f8"/><rect x="469.3" y="29.1" width="5.8" height="6" fill="#f8f8f8"/><rect x="497.8" y="29.1" width="5.8" height="6" fill="#f8f8f8"/><rect x="468.4" y="35" width="35.6" height="0.9" fill="#2a2a3a"/><rect x="439.2" y="35.5" width="0.9" height="73" fill="#2a2a3a"/><rect x="439.2" y="43" width="64.8" height="0.9" fill="#2a2a3a"/><rect x="439.2" y="43.2" width="57.8" height="57.8" fill="#1f1e2e"/><rect x="439.2" y="101" width="57.8" height="0.9" fill="#2a2a3a"/><rect x="432.00" y="108.00" width="72.00" height="67.00" fill="#ece3c6"/><rect x="432.00" y="108.00" width="72.00" height="2.50" fill="#ecd590"/><rect x="432.00" y="126.00" width="72.00" height="38.00" fill="#ecd590"/><rect x="432.00" y="171.00" width="72.00" height="4.00" fill="#e8c080"/><rect x="432.00" y="175.00" width="72.00" height="2.00" fill="#7a7c84"/><rect x="432.00" y="177.00" width="72.00" height="3.00" fill="#3a3a4a"/><rect x="432" y="180" width="72" height="108" fill="#f8f8f8"/><rect x="439.2" y="187" width="22" height="22" fill="#1f1e2e"/><rect x="468.4" y="181" width="35.6" height="34.5" fill="#1f1e2e"/><rect x="469.3" y="181.4" width="5.8" height="6" fill="#f8f8f8"/><rect x="497.8" y="181.4" width="5.8" height="6" fill="#f8f8f8"/><rect x="469.3" y="209.1" width="5.8" height="6" fill="#f8f8f8"/><rect x="497.8" y="209.1" width="5.8" height="6" fill="#f8f8f8"/><rect x="468.4" y="215" width="35.6" height="0.9" fill="#2a2a3a"/><rect x="439.2" y="215.5" width="0.9" height="73" fill="#2a2a3a"/><rect x="439.2" y="223" width="64.8" height="0.9" fill="#2a2a3a"/><rect x="439.2" y="223.2" width="57.8" height="57.8" fill="#1f1e2e"/><rect x="439.2" y="281" width="57.8" height="0.9" fill="#2a2a3a"/><rect x="432.00" y="288.00" width="18.00" height="13.00" fill="#b8d0e0"/><rect x="450.00" y="288.00" width="18.00" height="13.00" fill="#e2f2f4"/><rect x="468.00" y="288.00" width="18.00" height="13.00" fill="#b8d0e0"/><rect x="486.00" y="288.00" width="18.00" height="13.00" fill="#e2f2f4"/><rect x="432.00" y="301.00" width="18.00" height="18.00" fill="#e2f2f4"/><rect x="450.00" y="301.00" width="18.00" height="18.00" fill="#b8d0e0"/><rect x="468.00" y="301.00" width="18.00" height="18.00" fill="#e2f2f4"/><rect x="486.00" y="301.00" width="18.00" height="18.00" fill="#b8d0e0"/><rect x="432.00" y="319.00" width="18.00" height="18.00" fill="#b8d0e0"/><rect x="450.00" y="319.00" width="18.00" height="18.00" fill="#e2f2f4"/><rect x="468.00" y="319.00" width="18.00" height="18.00" fill="#b8d0e0"/><rect x="486.00" y="319.00" width="18.00" height="18.00" fill="#e2f2f4"/><rect x="432.00" y="337.00" width="18.00" height="18.00" fill="#e2f2f4"/><rect x="450.00" y="337.00" width="18.00" height="18.00" fill="#b8d0e0"/><rect x="468.00" y="337.00" width="18.00" height="18.00" fill="#e2f2f4"/><rect x="486.00" y="337.00" width="18.00" height="18.00" fill="#b8d0e0"/><rect x="432.00" y="355.00" width="18.00" height="18.00" fill="#b8d0e0"/><rect x="450.00" y="355.00" width="18.00" height="18.00" fill="#e2f2f4"/><rect x="468.00" y="355.00" width="18.00" height="18.00" fill="#b8d0e0"/><rect x="486.00" y="355.00" width="18.00" height="18.00" fill="#e2f2f4"/><rect x="432.00" y="355.00" width="72.00" height="2.00" fill="#7a7c84"/><rect x="432.00" y="357.00" width="72.00" height="3.00" fill="#3a3a4a"/><rect x="432" y="360" width="72" height="108" fill="#f8f8f8"/><rect x="439.2" y="367" width="22" height="22" fill="#1f1e2e"/><rect x="468.4" y="361" width="35.6" height="34.5" fill="#1f1e2e"/><rect x="469.3" y="361.4" width="5.8" height="6" fill="#f8f8f8"/><rect x="497.8" y="361.4" width="5.8" height="6" fill="#f8f8f8"/><rect x="469.3" y="389.1" width="5.8" height="6" fill="#f8f8f8"/><rect x="497.8" y="389.1" width="5.8" height="6" fill="#f8f8f8"/><rect x="468.4" y="395" width="35.6" height="0.9" fill="#2a2a3a"/><rect x="439.2" y="395.5" width="0.9" height="73" fill="#2a2a3a"/><rect x="439.2" y="403" width="64.8" height="0.9" fill="#2a2a3a"/><rect x="439.2" y="403.2" width="57.8" height="57.8" fill="#1f1e2e"/><rect x="439.2" y="461" width="57.8" height="0.9" fill="#2a2a3a"/><rect x="504" y="0" width="72" height="108" fill="#f8f8f8"/><rect x="511.2" y="7" width="22" height="22" fill="#1f1e2e"/><rect x="540.4" y="1" width="35.6" height="34.5" fill="#1f1e2e"/><rect x="541.3" y="1.4" width="5.8" height="6" fill="#f8f8f8"/><rect x="569.8" y="1.4" width="5.8" height="6" fill="#f8f8f8"/><rect x="541.3" y="29.1" width="5.8" height="6" fill="#f8f8f8"/><rect x="569.8" y="29.1" width="5.8" height="6" fill="#f8f8f8"/><rect x="540.4" y="35" width="35.6" height="0.9" fill="#2a2a3a"/><rect x="511.2" y="35.5" width="0.9" height="73" fill="#2a2a3a"/><rect x="511.2" y="43" width="64.8" height="0.9" fill="#2a2a3a"/><rect x="511.2" y="43.2" width="57.8" height="57.8" fill="#1f1e2e"/><rect x="511.2" y="101" width="57.8" height="0.9" fill="#2a2a3a"/><rect x="504.00" y="108.00" width="72.00" height="67.00" fill="#c9aa88"/><rect x="508.00" y="108.00" width="1.50" height="67.00" fill="#a88868"/><rect x="516.00" y="108.00" width="1.50" height="67.00" fill="#a88868"/><rect x="524.00" y="108.00" width="1.50" height="67.00" fill="#a88868"/><rect x="534.00" y="108.00" width="1.50" height="67.00" fill="#a88868"/><rect x="544.00" y="108.00" width="1.50" height="67.00" fill="#a88868"/><rect x="554.00" y="108.00" width="1.50" height="67.00" fill="#a88868"/><rect x="564.00" y="108.00" width="1.50" height="67.00" fill="#a88868"/><rect x="572.00" y="108.00" width="1.50" height="67.00" fill="#a88868"/><rect x="504.00" y="175.00" width="72.00" height="2.00" fill="#7a7c84"/><rect x="504.00" y="177.00" width="72.00" height="3.00" fill="#3a3a4a"/><rect x="504" y="180" width="72" height="108" fill="#f8f8f8"/><rect x="511.2" y="187" width="22" height="22" fill="#1f1e2e"/><rect x="540.4" y="181" width="35.6" height="34.5" fill="#1f1e2e"/><rect x="541.3" y="181.4" width="5.8" height="6" fill="#f8f8f8"/><rect x="569.8" y="181.4" width="5.8" height="6" fill="#f8f8f8"/><rect x="541.3" y="209.1" width="5.8" height="6" fill="#f8f8f8"/><rect x="569.8" y="209.1" width="5.8" height="6" fill="#f8f8f8"/><rect x="540.4" y="215" width="35.6" height="0.9" fill="#2a2a3a"/><rect x="511.2" y="215.5" width="0.9" height="73" fill="#2a2a3a"/><rect x="511.2" y="223" width="64.8" height="0.9" fill="#2a2a3a"/><rect x="511.2" y="223.2" width="57.8" height="57.8" fill="#1f1e2e"/><rect x="511.2" y="281" width="57.8" height="0.9" fill="#2a2a3a"/><rect x="504.00" y="288.00" width="72.00" height="67.00" fill="#d86868"/><rect x="504.00" y="348.00" width="72.00" height="3.00" fill="#d0a860"/><rect x="504.00" y="351.00" width="72.00" height="4.00" fill="#b88050"/><rect x="504.00" y="355.00" width="72.00" height="2.00" fill="#7a7c84"/><rect x="504.00" y="357.00" width="72.00" height="3.00" fill="#3a3a4a"/><rect x="504" y="360" width="72" height="108" fill="#f8f8f8"/><rect x="511.2" y="367" width="22" height="22" fill="#1f1e2e"/><rect x="540.4" y="361" width="35.6" height="34.5" fill="#1f1e2e"/><rect x="541.3" y="361.4" width="5.8" height="6" fill="#f8f8f8"/><rect x="569.8" y="361.4" width="5.8" height="6" fill="#f8f8f8"/><rect x="541.3" y="389.1" width="5.8" height="6" fill="#f8f8f8"/><rect x="569.8" y="389.1" width="5.8" height="6" fill="#f8f8f8"/><rect x="540.4" y="395" width="35.6" height="0.9" fill="#2a2a3a"/><rect x="511.2" y="395.5" width="0.9" height="73" fill="#2a2a3a"/><rect x="511.2" y="403" width="64.8" height="0.9" fill="#2a2a3a"/><rect x="511.2" y="403.2" width="57.8" height="57.8" fill="#1f1e2e"/><rect x="511.2" y="461" width="57.8" height="0.9" fill="#2a2a3a"/><rect x="1.00" y="217.00" width="34.00" height="34.00" fill="#000"/><rect x="3.00" y="219.00" width="30.00" height="30.00" fill="#1f1e2e"/><rect x="4.00" y="224.00" width="3.00" height="25.00" fill="#f8f8f8"/><rect x="8.50" y="219.80" width="24.00" height="3.40" fill="#f8f8f8"/><rect x="4.00" y="219.80" width="3.00" height="3.40" fill="#f8f8f8"/><rect x="37.00" y="217.00" width="34.00" height="34.00" fill="#000"/><rect x="39.00" y="219.00" width="30.00" height="30.00" fill="#1f1e2e"/><rect x="38.50" y="219.80" width="28.50" height="3.40" fill="#f8f8f8"/><rect x="64.00" y="224.00" width="3.00" height="25.00" fill="#f8f8f8"/><rect x="1.00" y="253.00" width="34.00" height="34.00" fill="#000"/><rect x="3.00" y="255.00" width="30.00" height="30.00" fill="#1f1e2e"/><rect x="4.00" y="255.00" width="3.00" height="25.00" fill="#f8f8f8"/><rect x="8.50" y="280.80" width="24.00" height="3.40" fill="#f8f8f8"/><rect x="4.00" y="280.80" width="3.00" height="3.40" fill="#f8f8f8"/><rect x="37.00" y="253.00" width="34.00" height="34.00" fill="#000"/><rect x="39.00" y="255.00" width="30.00" height="30.00" fill="#1f1e2e"/><rect x="64.00" y="255.00" width="3.00" height="25.00" fill="#f8f8f8"/><rect x="38.50" y="280.80" width="28.50" height="3.40" fill="#f8f8f8"/><path d="M1 217h70v70h-70z" stroke="#2ab0f8" stroke-width="2.2" fill="none"/><rect x="34.00" y="216.00" width="4.00" height="72.00" fill="#2ab0f8"/><rect x="0.00" y="250.00" width="72.00" height="4.00" fill="#2ab0f8"/><rect x="146.4" y="177.4" width="76.2" height="102.9" stroke="#e81e28" stroke-width="4.8" fill="none"/></g></svg>
<div class="a" style="left:1031px;top:821px;width:677px;height:455px;background:#1c2028;"></div>
<div class="a" style="left:950px;top:821px;width:37px;height:455px;background:linear-gradient(90deg, rgba(0,0,0,0) 0%, rgba(0,0,0,0.18) 100%);"></div>
<svg class="a" style="left:453px;top:830px;" width="16" height="16" viewBox="0 0 16 16"><circle cx="8" cy="8" r="7.3" fill="rgba(200,200,200,0.75)" stroke="#777" stroke-width="0.8"/><rect x="4" y="6.9" width="8" height="2.3" fill="#222"/><rect x="6.9" y="4" width="2.3" height="8" fill="#222"/></svg>
<div class="a" style="left:986.7px;top:64.4px;width:1802.3px;height:1164.6px;background:#373c4b;border-radius:8px;box-shadow:-6px 4px 22px rgba(0,0,0,0.45);overflow:hidden"><div class="a" style="left:0;top:0;right:0;height:37.6px;background:#1f1f1f;border-top:1px solid #3b3b3b"></div></div>
<div class="a" style="left:991px;top:141px;width:1778px;height:1083.5px;background:#4b7bab;"></div>
<div class="a" style="left:993px;top:143px;width:1776px;height:1079.5px;background:#4d4d4d;"></div>
<svg class="a" style="left:997px;top:74px;" width="19" height="18" viewBox="0 0 19 18"><path d="M2 6l2-3 2.5 1.5L9.5 2l3 2.5L15 3l2 3 .5 7c-1.5 3-5 4-8 4s-6.5-1-8-4z" fill="#4a8fcf"/><circle cx="6" cy="9.5" r="2.4" fill="#fff"/><circle cx="13" cy="9.5" r="2.4" fill="#fff"/><circle cx="6.3" cy="9.7" r="1.1" fill="#333"/><circle cx="12.7" cy="9.7" r="1.1" fill="#333"/><path d="M4 13.5q2.5 2 5.5 0q3 2 5.5 0" stroke="#fff" stroke-width="1.3" fill="none"/></svg>
<div class="a" style="left:1023.2px;top:76.84px;font-size:14.25px;line-height:1;color:#9c9c9c;font-weight:normal;white-space:nowrap;font-family:'Liberation Sans',sans-serif;">One Weird Summer (DEBUG)</div>
<div class="a" style="left:2765.5px;top:82px;width:4px;height:1.3px;background:#cfcfcf;"></div>
<svg class="a" style="left:1003px;top:116px;" width="12" height="11" viewBox="0 0 12 11"><rect x="1" y="0.5" width="3.5" height="10" rx="0.5" fill="#e0e0e0"/><rect x="7" y="0.5" width="3.5" height="10" rx="0.5" fill="#e0e0e0"/></svg>
<svg class="a" style="left:1034px;top:115px;" width="14" height="12" viewBox="0 0 14 12"><path d="M1.5 1l7 5-7 5z" fill="#8e939c"/><rect x="10" y="1" width="2.6" height="10" fill="#8e939c"/></svg>
<div class="a" style="left:1060.4px;top:106px;width:1px;height:30.5px;background:#4d5363;"></div>
<div class="a" style="left:1250.5px;top:106px;width:1px;height:30.5px;background:#4d5363;"></div>
<div class="a" style="left:1290.6px;top:106px;width:1px;height:30.5px;background:#4d5363;"></div>
<div class="a" style="left:1362.6px;top:106px;width:1px;height:30.5px;background:#4d5363;"></div>
<div class="a" style="left:1402.4px;top:106px;width:1px;height:30.5px;background:#4d5363;"></div>
<div class="a" style="left:1474px;top:106px;width:1px;height:30.5px;background:#4d5363;"></div>
<div class="a" style="left:1067px;top:106px;width:68px;height:30.5px;background:#222732;border-radius:4px"></div>
<svg class="a" style="left:1075px;top:113px;" width="14" height="17" viewBox="0 0 14 17"><path d="M3 12c-2-2-2.5-5-1-8s4.5-4 7-3 4 3.5 3.5 6.5c-.5 2-2 3-3 3.5V16H4z" fill="#6cb4f0"/><path d="M5 3c-2 1-2.5 4-1 6" stroke="#2a5a8a" stroke-width="1" fill="none"/></svg>
<div class="a" style="left:1093px;top:113.23px;font-size:15.2px;line-height:1;color:#6cb4f0;font-weight:normal;white-space:nowrap;font-family:'Liberation Sans',sans-serif;">Input</div>
<svg class="a" style="left:1146px;top:114.3px;" width="13" height="13" viewBox="0 0 13 13"><defs><linearGradient id="g2d" x1="0" y1="0" x2="1" y2="0"><stop offset="0.3" stop-color="#8da5f3"/><stop offset="0.7" stop-color="#8eef97"/></linearGradient></defs><circle cx="6.5" cy="6.5" r="5" stroke="url(#g2d)" stroke-width="2" fill="none"/></svg>
<div class="a" style="left:1165px;top:114.98px;font-size:14.2px;line-height:1;color:#d6d9de;font-weight:normal;white-space:nowrap;font-family:'Liberation Sans',sans-serif;">2D</div>
<svg class="a" style="left:1201px;top:114.3px;" width="13" height="13" viewBox="0 0 13 13"><circle cx="6.5" cy="6.5" r="5" stroke="#fc6a6a" stroke-width="2" fill="none"/></svg>
<div class="a" style="left:1220px;top:114.98px;font-size:14.2px;line-height:1;color:#d6d9de;font-weight:normal;white-space:nowrap;font-family:'Liberation Sans',sans-serif;">3D</div>
<svg class="a" style="left:1264px;top:115px;" width="15" height="12" viewBox="0 0 15 12"><ellipse cx="7.5" cy="6" rx="6.3" ry="5" stroke="#e0e0e0" stroke-width="2" fill="none"/><circle cx="7.5" cy="6" r="2.2" fill="#e0e0e0"/></svg>
<div class="a" style="left:1297px;top:106px;width:28px;height:30.5px;background:#222732;border-radius:4px"></div>
<svg class="a" style="left:1304px;top:114px;" width="14" height="15" viewBox="0 0 14 15"><path d="M1.5 1.5l11 4-4.5 1.5 4 4.5-2 2-4-4.5-1.5 4.5z" fill="#6cb4f0"/></svg>
<svg class="a" style="left:1335.5px;top:113.5px;" width="16" height="16" viewBox="0 0 16 16"><g transform="scale(0.9375)"><path d="M1 1h11v12H1z" stroke="#e0e0e0" stroke-width="2" fill="none"/><path d="M3 6h7" stroke="#e0e0e0" stroke-width="2"/><path d="M8 8l8 3.2-3.2 1 2.4 2.4-1.4 1.4-2.4-2.4-1 3.2z" fill="#e0e0e0" stroke="#373c4b" stroke-width="0.8"/></g></svg>
<svg class="a" style="left:1375px;top:113px;" width="16" height="16" viewBox="0 0 16 16"><path d="M1 5.5h3l4-4v13l-4-4H1z" fill="#e0e0e0"/><path d="M10.5 5a4 4 0 0 1 0 6M12.5 3a7 7 0 0 1 0 10" stroke="#e0e0e0" stroke-width="1.5" fill="none"/></svg>
<svg class="a" style="left:1415px;top:114px;" width="16" height="14" viewBox="0 0 16 14"><circle cx="5" cy="4.5" r="3.5" fill="#e0e0e0"/><circle cx="10" cy="4" r="3" fill="#e0e0e0"/><rect x="2" y="6" width="10" height="7" rx="1" fill="#e0e0e0"/><path d="M12 9l3.5-2.5v6L12 10z" fill="#e0e0e0"/></svg>
<svg class="a" style="left:1451px;top:112px;" width="8" height="19" viewBox="0 0 8 19"><circle cx="4" cy="3.5" r="2.3" fill="#e0e0e0"/><circle cx="4" cy="9.5" r="2.3" fill="#e0e0e0"/><circle cx="4" cy="15.5" r="2.3" fill="#e0e0e0"/></svg>
<div class="a" style="left:1481px;top:106px;width:28px;height:30.5px;background:#222732;border-radius:4px"></div>
<svg class="a" style="left:1486px;top:113px;" width="17" height="17" viewBox="0 0 17 17"><path d="M1 5V1h4M12 1h4v4M16 12v4h-4M5 16H1v-4" stroke="#6cb4f0" stroke-width="1.6" fill="none"/><path d="M6 8V6.5a2.5 2.5 0 0 1 5 0V8" stroke="#6cb4f0" stroke-width="1.6" fill="none"/><rect x="4.5" y="8" width="8" height="6" fill="#6cb4f0"/></svg>
<svg class="a" style="left:1519px;top:113px;" width="16" height="16" viewBox="0 0 16 16"><path d="M1 5V1h4M11 1h4v4M15 11v4h-4M5 15H1v-4" stroke="#e0e0e0" stroke-width="0" fill="none"/><path d="M1.5 1.5v4M1.5 1.5h4M2 2l3 3M14.5 14.5v-4M14.5 14.5h-4M14 14l-3-3M10 1.5h4.5v4.5M1.5 10v4.5H6" stroke="#e0e0e0" stroke-width="1.5" fill="none"/></svg>
<svg class="a" style="left:1551px;top:113px;" width="16" height="16" viewBox="0 0 16 16"><path d="M1.5 1.5v4M1.5 1.5h4M2 2l3 3M14.5 14.5v-4M14.5 14.5h-4M14 14l-3-3M14.5 1.5v4M14.5 1.5h-4M14 2l-3 3M1.5 14.5v-4M1.5 14.5h4M2 14l3-3" stroke="#e0e0e0" stroke-width="1.5" fill="none"/></svg>
<svg class="a" style="left:1587px;top:112px;" width="8" height="19" viewBox="0 0 8 19"><circle cx="4" cy="3.5" r="2.3" fill="#e0e0e0"/><circle cx="4" cy="9.5" r="2.3" fill="#e0e0e0"/><circle cx="4" cy="15.5" r="2.3" fill="#e0e0e0"/></svg>
<svg class="a" style="left:1289px;top:343px" width="1344" height="705" viewBox="0 0 40 21" preserveAspectRatio="none"><defs><pattern id="pg" x="0" y="0" width="1" height="1" patternUnits="userSpaceOnUse"><rect width="1" height="1" fill="#d4bd9c"/><rect x="0.950" y="0" width="0.250" height="1" fill="#d4b99c"/><rect x="0.950" y="0.700" width="0.250" height="0.04" fill="#ad9072"/><rect x="-0.050" y="0" width="0.250" height="1" fill="#d4b99c"/><rect x="-0.050" y="0.700" width="0.250" height="0.04" fill="#ad9072"/><rect x="0.200" y="0" width="0.250" height="1" fill="#d2c19e"/><rect x="0.200" y="0.005" width="0.250" height="0.04" fill="#ad9072"/><rect x="0.450" y="0" width="0.250" height="1" fill="#d2c19e"/><rect x="0.450" y="0.700" width="0.250" height="0.04" fill="#ad9072"/><rect x="0.700" y="0" width="0.250" height="1" fill="#d4b99c"/><rect x="0.700" y="0.005" width="0.250" height="0.04" fill="#ad9072"/><rect x="0.180" y="0" width="0.04" height="1" fill="#ad9072"/><rect x="0.430" y="0" width="0.04" height="1" fill="#ad9072"/><rect x="0.680" y="0" width="0.04" height="1" fill="#ad9072"/><rect x="0.930" y="0" width="0.04" height="1" fill="#ad9072"/></pattern></defs><rect x="0" y="0" width="40" height="21" fill="url(#pg)"/><rect x="0" y="0" width="14" height="1" fill="#f8f8f8"/><rect x="0.180" y="0.180" width="0.625" height="0.625" fill="#1e1d2d"/><rect x="1.180" y="0.180" width="0.625" height="0.625" fill="#1e1d2d"/><rect x="2.180" y="0.180" width="0.625" height="0.625" fill="#1e1d2d"/><rect x="3.180" y="0.180" width="0.625" height="0.625" fill="#1e1d2d"/><rect x="4.180" y="0.180" width="0.625" height="0.625" fill="#1e1d2d"/><rect x="5.180" y="0.180" width="0.625" height="0.625" fill="#1e1d2d"/><rect x="6.180" y="0.180" width="0.625" height="0.625" fill="#1e1d2d"/><rect x="7.180" y="0.180" width="0.625" height="0.625" fill="#1e1d2d"/><rect x="8.180" y="0.180" width="0.625" height="0.625" fill="#1e1d2d"/><rect x="9.180" y="0.180" width="0.625" height="0.625" fill="#1e1d2d"/><rect x="10.180" y="0.180" width="0.625" height="0.625" fill="#1e1d2d"/><rect x="11.180" y="0.180" width="0.625" height="0.625" fill="#1e1d2d"/><rect x="12.180" y="0.180" width="0.625" height="0.625" fill="#1e1d2d"/><rect x="13.180" y="0.180" width="0.625" height="0.625" fill="#1e1d2d"/><rect x="0" y="6" width="1" height="8" fill="#1e1d2d"/><rect x="0.00" y="6.00" width="0.16" height="0.16" fill="#f8f8f8"/><rect x="0.84" y="6.00" width="0.16" height="0.16" fill="#f8f8f8"/><rect x="0.00" y="6.84" width="0.16" height="0.16" fill="#f8f8f8"/><rect x="0.84" y="6.84" width="0.16" height="0.16" fill="#f8f8f8"/><rect x="0.00" y="7.00" width="0.16" height="0.16" fill="#f8f8f8"/><rect x="0.84" y="7.00" width="0.16" height="0.16" fill="#f8f8f8"/><rect x="0.00" y="7.84" width="0.16" height="0.16" fill="#f8f8f8"/><rect x="0.84" y="7.84" width="0.16" height="0.16" fill="#f8f8f8"/><rect x="0.00" y="8.00" width="0.16" height="0.16" fill="#f8f8f8"/><rect x="0.84" y="8.00" width="0.16" height="0.16" fill="#f8f8f8"/><rect x="0.00" y="8.84" width="0.16" height="0.16" fill="#f8f8f8"/><rect x="0.84" y="8.84" width="0.16" height="0.16" fill="#f8f8f8"/><rect x="0.00" y="9.00" width="0.16" height="0.16" fill="#f8f8f8"/><rect x="0.84" y="9.00" width="0.16" height="0.16" fill="#f8f8f8"/><rect x="0.00" y="9.84" width="0.16" height="0.16" fill="#f8f8f8"/><rect x="0.84" y="9.84" width="0.16" height="0.16" fill="#f8f8f8"/><rect x="0.00" y="10.00" width="0.16" height="0.16" fill="#f8f8f8"/><rect x="0.84" y="10.00" width="0.16" height="0.16" fill="#f8f8f8"/><rect x="0.00" y="10.84" width="0.16" height="0.16" fill="#f8f8f8"/><rect x="0.84" y="10.84" width="0.16" height="0.16" fill="#f8f8f8"/><rect x="0.00" y="11.00" width="0.16" height="0.16" fill="#f8f8f8"/><rect x="0.84" y="11.00" width="0.16" height="0.16" fill="#f8f8f8"/><rect x="0.00" y="11.84" width="0.16" height="0.16" fill="#f8f8f8"/><rect x="0.84" y="11.84" width="0.16" height="0.16" fill="#f8f8f8"/><rect x="0.00" y="12.00" width="0.16" height="0.16" fill="#f8f8f8"/><rect x="0.84" y="12.00" width="0.16" height="0.16" fill="#f8f8f8"/><rect x="0.00" y="12.84" width="0.16" height="0.16" fill="#f8f8f8"/><rect x="0.84" y="12.84" width="0.16" height="0.16" fill="#f8f8f8"/><rect x="0.00" y="13.00" width="0.16" height="0.16" fill="#f8f8f8"/><rect x="0.84" y="13.00" width="0.16" height="0.16" fill="#f8f8f8"/><rect x="0.00" y="13.84" width="0.16" height="0.16" fill="#f8f8f8"/><rect x="0.84" y="13.84" width="0.16" height="0.16" fill="#f8f8f8"/><rect x="38" y="0" width="2" height="10.03" fill="#f8f8f8"/><rect x="38.24" y="0.18" width="1.58" height="1.6" fill="#1e1d2d"/><rect x="38" y="0.16" width="2" height="0.03" fill="#3a3a48"/><rect x="38" y="1.77" width="2" height="0.03" fill="#3a3a48"/><rect x="38.24" y="2.18" width="1.58" height="1.6" fill="#1e1d2d"/><rect x="38" y="2.16" width="2" height="0.03" fill="#3a3a48"/><rect x="38" y="3.77" width="2" height="0.03" fill="#3a3a48"/><rect x="38.24" y="4.18" width="1.58" height="1.6" fill="#1e1d2d"/><rect x="38" y="4.16" width="2" height="0.03" fill="#3a3a48"/><rect x="38" y="5.77" width="2" height="0.03" fill="#3a3a48"/><rect x="38.24" y="6.18" width="1.58" height="1.6" fill="#1e1d2d"/><rect x="38" y="6.16" width="2" height="0.03" fill="#3a3a48"/><rect x="38" y="7.77" width="2" height="0.03" fill="#3a3a48"/><rect x="38.24" y="8.18" width="1.58" height="1.6" fill="#1e1d2d"/><rect x="38" y="8.16" width="2" height="0.03" fill="#3a3a48"/><rect x="38" y="9.77" width="2" height="0.03" fill="#3a3a48"/><rect x="38.22" y="0" width="0.03" height="10.03" fill="#3a3a48"/><rect x="39.81" y="0" width="0.03" height="10.03" fill="#3a3a48"/></svg>
<div class="a" style="left:1707px;top:0px;width:2px;height:64px;background:#2a2d34;"></div>
<div class="a" style="left:1709px;top:0px;width:424px;height:64px;background:#38373c;"></div>
<div class="a" style="left:1709px;top:63.5px;width:1060px;height:1.2px;background:#55555a;"></div>
<svg class="a" style="left:1886px;top:9px;" width="22" height="21" viewBox="0 0 22 21"><path d="M2 11C2 4 6 1 11 1s9 3 9 10v9H2z" fill="#2e6e80"/><rect x="4" y="12" width="14" height="8" fill="#1c2530"/><circle cx="6.5" cy="11" r="4" fill="#e85a30" stroke="#fff" stroke-width="1.6"/><circle cx="15.5" cy="11" r="4" fill="#e85a30" stroke="#fff" stroke-width="1.6"/><path d="M10.5 11h1" stroke="#fff" stroke-width="1.4"/><path d="M8 18h6" stroke="#9ab" stroke-width="1" stroke-dasharray="1 1"/></svg>
<svg class="a" style="left:1925px;top:11px;" width="20" height="18" viewBox="0 0 20 18"><path d="M1 5h5l1.5-3h5L14 5h5v12H1z" fill="#9e9e9e"/><circle cx="10" cy="10.5" r="3.8" fill="#38373c"/><circle cx="10" cy="10.5" r="2.2" fill="#9e9e9e"/></svg>
<svg class="a" style="left:1962px;top:8px;" width="22" height="22" viewBox="0 0 22 22"><path d="M4 6h4a3 3 0 1 1 6 0h4v4a3 3 0 1 1 0 6v4h-4a3 3 0 1 0-6 0H4v-4a3 3 0 1 0 0-6z" stroke="#f4f4f4" stroke-width="1.8" fill="none" stroke-linejoin="round"/></svg>
<svg class="a" style="left:1998px;top:10px;" width="22" height="20" viewBox="0 0 22 20"><rect x="1" y="1" width="20" height="18" rx="2" stroke="#f4f4f4" stroke-width="1.8" fill="none"/><path d="M1 5h20" stroke="#f4f4f4" stroke-width="1.6"/><circle cx="10.5" cy="11" r="3" stroke="#f4f4f4" stroke-width="1.6" fill="none"/><path d="M12.7 13.2l2.5 2.5" stroke="#f4f4f4" stroke-width="1.8"/></svg>
<div class="a" style="left:2037px;top:10px;width:2.4px;height:19px;background:#1f1f22;"></div>
<svg class="a" style="left:2058px;top:10px;" width="22" height="20" viewBox="0 0 22 20"><rect x="1" y="1" width="20" height="18" rx="2" stroke="#f4f4f4" stroke-width="1.8" fill="none"/><rect x="14" y="1" width="7" height="18" fill="#f4f4f4"/></svg>
<svg class="a" style="left:2096px;top:11px;" width="22" height="18" viewBox="0 0 22 18"><path d="M1 2h20M1 9h20M1 16h20" stroke="#f4f4f4" stroke-width="1.8"/></svg>
<svg class="a" overflow="hidden" style="left:2133px;top:0px;overflow:hidden" width="636" height="64" viewBox="0 0 636 64"><defs><linearGradient id="wbg" x1="0" y1="0" x2="1" y2="0"><stop offset="0" stop-color="#2b5588"/><stop offset="0.5" stop-color="#2d5a8e"/><stop offset="1" stop-color="#2a5282"/></linearGradient><linearGradient id="tw" x1="0" y1="0" x2="0" y2="1"><stop offset="0" stop-color="#d83a32"/><stop offset="1" stop-color="#f05a48"/></linearGradient></defs><rect width="636" height="64" fill="url(#wbg)"/><path d="M207.3 20.3l11.9 -19.8" stroke="rgba(120,180,235,0.28)" stroke-width="0.9"/><path d="M46.4 43.0l9.3 -15.5" stroke="rgba(120,180,235,0.28)" stroke-width="0.9"/><path d="M37.1 36.1l6.3 -10.6" stroke="rgba(120,180,235,0.28)" stroke-width="0.9"/><path d="M277.5 6.3l6.8 -11.4" stroke="rgba(120,180,235,0.28)" stroke-width="0.9"/><path d="M271.7 59.7l7.1 -11.9" stroke="rgba(120,180,235,0.28)" stroke-width="0.9"/><path d="M142.9 58.1l14.5 -24.2" stroke="rgba(120,180,235,0.28)" stroke-width="0.9"/><path d="M369.3 42.4l14.8 -24.6" stroke="rgba(120,180,235,0.28)" stroke-width="0.9"/><path d="M29.8 64.4l8.6 -14.3" stroke="rgba(120,180,235,0.28)" stroke-width="0.9"/><path d="M92.3 12.9l8.8 -14.6" stroke="rgba(120,180,235,0.28)" stroke-width="0.9"/><path d="M522.3 21.4l11.2 -18.7" stroke="rgba(120,180,235,0.28)" stroke-width="0.9"/><path d="M408.9 34.3l10.9 -18.2" stroke="rgba(120,180,235,0.28)" stroke-width="0.9"/><path d="M40.2 7.3l7.9 -13.1" stroke="rgba(120,180,235,0.28)" stroke-width="0.9"/><path d="M435.5 34.6l8.8 -14.7" stroke="rgba(120,180,235,0.28)" stroke-width="0.9"/><path d="M374.8 36.2l8.7 -14.5" stroke="rgba(120,180,235,0.28)" stroke-width="0.9"/><path d="M508.4 52.6l8.2 -13.7" stroke="rgba(120,180,235,0.28)" stroke-width="0.9"/><path d="M367.6 49.9l13.9 -23.1" stroke="rgba(120,180,235,0.28)" stroke-width="0.9"/><path d="M466.8 34.9l14.8 -24.7" stroke="rgba(120,180,235,0.28)" stroke-width="0.9"/><path d="M75.6 40.6l12.8 -21.4" stroke="rgba(120,180,235,0.28)" stroke-width="0.9"/><path d="M97.3 34.8l6.4 -10.6" stroke="rgba(120,180,235,0.28)" stroke-width="0.9"/><path d="M427.7 62.1l11.2 -18.6" stroke="rgba(120,180,235,0.28)" stroke-width="0.9"/><path d="M560.3 32.4l12.3 -20.4" stroke="rgba(120,180,235,0.28)" stroke-width="0.9"/><path d="M380.4 47.4l10.1 -16.8" stroke="rgba(120,180,235,0.28)" stroke-width="0.9"/><path d="M537.6 73.2l10.3 -17.1" stroke="rgba(120,180,235,0.28)" stroke-width="0.9"/><path d="M425.1 14.8l12.3 -20.5" stroke="rgba(120,180,235,0.28)" stroke-width="0.9"/><path d="M414.2 81.8l13.4 -22.3" stroke="rgba(120,180,235,0.28)" stroke-width="0.9"/><path d="M182.1 37.0l12.0 -20.0" stroke="rgba(120,180,235,0.28)" stroke-width="0.9"/><path d="M14.4 34.8l7.5 -12.5" stroke="rgba(120,180,235,0.28)" stroke-width="0.9"/><path d="M74.9 15.7l12.9 -21.5" stroke="rgba(120,180,235,0.28)" stroke-width="0.9"/><path d="M82.8 23.2l9.5 -15.9" stroke="rgba(120,180,235,0.28)" stroke-width="0.9"/><path d="M557.7 12.4l10.0 -16.7" stroke="rgba(120,180,235,0.28)" stroke-width="0.9"/><path d="M351.6 74.1l13.4 -22.3" stroke="rgba(120,180,235,0.28)" stroke-width="0.9"/><path d="M553.0 25.7l9.7 -16.2" stroke="rgba(120,180,235,0.28)" stroke-width="0.9"/><path d="M229.6 76.3l14.6 -24.4" stroke="rgba(120,180,235,0.28)" stroke-width="0.9"/><path d="M96.6 15.8l8.1 -13.5" stroke="rgba(120,180,235,0.28)" stroke-width="0.9"/><path d="M149.3 42.8l11.3 -18.8" stroke="rgba(120,180,235,0.28)" stroke-width="0.9"/><path d="M168.2 6.6l9.8 -16.3" stroke="rgba(120,180,235,0.28)" stroke-width="0.9"/><path d="M236.3 53.9l14.6 -24.3" stroke="rgba(120,180,235,0.28)" stroke-width="0.9"/><path d="M441.9 45.3l11.6 -19.3" stroke="rgba(120,180,235,0.28)" stroke-width="0.9"/><path d="M432.8 17.3l14.1 -23.5" stroke="rgba(120,180,235,0.28)" stroke-width="0.9"/><path d="M499.2 73.2l13.2 -22.0" stroke="rgba(120,180,235,0.28)" stroke-width="0.9"/><path d="M90 0h73l3 27H91z" fill="#27356a"/><path d="M99 0h47l-1 26H99z" fill="#e24a38"/><path d="M99 1l12 9M146 1l-14 9M99 11l14 15M145 12l-12 14M99 11h47" stroke="#27356a" stroke-width="2.6"/><path d="M114 18l8-4 9 3" stroke="#f08050" stroke-width="1.5" fill="none"/><path d="M74 42Q76 58 86 64H180Q188 58 191 42z" fill="#29336a"/><path d="M98 44Q130 38 152 44L150 64H100z" fill="#d84868"/><path d="M102 52l10 12M150 46l-10 18" stroke="#29336a" stroke-width="2.2"/><path d="M160 46l10 4-2 12-8 2z" fill="#c83848" opacity="0.8"/><path d="M73 42Q80 26 130 25Q183 26 191 40Q186 48 130 48Q78 48 73 42z" fill="#2a356e"/><path d="M76 44Q84 30 130 27Q178 28 189 38" stroke="#e8e0d0" stroke-width="1.6" stroke-dasharray="2.5 3.5" fill="none"/><path d="M494 0H539L535 10L530 14.5H509L500 9z" fill="#3a2a2c"/><path d="M501 10L509 14.5H530L535 10" stroke="#c85030" stroke-width="1.5" fill="none"/><path d="M539 0H636V64H531L529 30Q531 12 539 0z" fill="#132730"/><path d="M539 0Q531 12 529 30L531 64" stroke="#2a7880" stroke-width="1.4" fill="none"/><path d="M584.5 0V64" stroke="#0a1418" stroke-width="2.5"/><path d="M536 56L636 28" stroke="#0a1418" stroke-width="3"/></svg>
<div class="a" style="left:1031px;top:1229px;width:445px;height:47px;background:linear-gradient(90deg,#1c2028,#191c22);"></div>
<div class="a" style="left:1476px;top:1229px;width:4px;height:47px;background:#2b303a;"></div>
<div class="a" style="left:1480px;top:1229px;width:4px;height:47px;background:#1c2028;"></div>
<div class="a" style="left:1484px;top:1229px;width:3.5px;height:47px;background:#2b303a;"></div>
<div class="a" style="left:1487.5px;top:1229px;width:208.5px;height:47px;background:linear-gradient(90deg,#1a1d23,#1c1f26);"></div>
<div class="a" style="left:1696px;top:1229px;width:4px;height:47px;background:#2b303a;"></div>
<div class="a" style="left:1700px;top:1229px;width:8px;height:47px;background:#1d2028;"></div>
<div class="a" style="left:1708px;top:1229px;width:49px;height:47px;background:linear-gradient(160deg,#1c1b26,#2a2535 70%,#221f2c);"></div>
<svg class="a" style="left:1708px;top:1267px;" width="49" height="9" viewBox="0 0 49 9"><path d="M0 2L49 5V9H0z" fill="#0b1216"/><path d="M0 3.5Q24 3 49 6.5" stroke="#2a9a98" stroke-width="2.2" fill="none"/></svg>
<div class="a" style="left:1757px;top:1229px;width:148px;height:47px;background:#1f1f1d;"></div>
<div class="a" style="left:1905px;top:1229px;width:864px;height:47px;background:linear-gradient(180deg,#1e1e1c,#262624 60%);"></div>
<div class="a" style="left:1924px;top:1242px;width:41px;height:50px;background:transparent;border:1px solid #3a3a37;border-radius:9px"></div>
<svg class="a" style="left:1936px;top:1255px;" width="17" height="17" viewBox="0 0 17 17"><path d="M8.5 1.5v14M1.5 8.5h14" stroke="#b4b2a8" stroke-width="1.6"/></svg>
<div class="a" style="left:1975px;top:1242px;width:41px;height:50px;background:transparent;border:1px solid #3a3a37;border-radius:9px"></div>
<svg class="a" style="left:1987px;top:1255px;" width="17" height="17" viewBox="0 0 17 17"><path d="M1.5 5h14M1.5 12h14" stroke="#b4b2a8" stroke-width="1.4"/><circle cx="6" cy="5" r="2.2" fill="#262624" stroke="#b4b2a8" stroke-width="1.3"/><circle cx="11" cy="12" r="2.2" fill="#262624" stroke="#b4b2a8" stroke-width="1.3"/></svg>
<div class="a" style="left:2026px;top:1242px;width:41px;height:50px;background:transparent;border:1px solid #3a3a37;border-radius:9px"></div>
<svg class="a" style="left:2037px;top:1254px;" width="19" height="19" viewBox="0 0 19 19"><path d="M9.5 2a7.5 7.5 0 1 1-7.5 7.5" stroke="#b4b2a8" stroke-width="1.5" fill="none"/><path d="M2.5 6.5A7.5 7.5 0 0 1 6 3" stroke="#b4b2a8" stroke-width="1.5" stroke-dasharray="1.5 1.5" fill="none"/><path d="M9.5 5.5v4l3 2" stroke="#b4b2a8" stroke-width="1.5" fill="none"/></svg>
<div class="a" style="left:2647px;top:1250.4px;font-size:20.3px;line-height:1;color:#c4c2b8;font-weight:normal;white-space:nowrap;font-family:'Liberation Serif',serif;">Sonnet 4.5</div>
<svg class="a" style="left:2747px;top:1258px;" width="14" height="9" viewBox="0 0 14 9"><path d="M1 1.5l6 6 6-6" stroke="#8e8c84" stroke-width="1.3" fill="none"/></svg>
</body></html>
